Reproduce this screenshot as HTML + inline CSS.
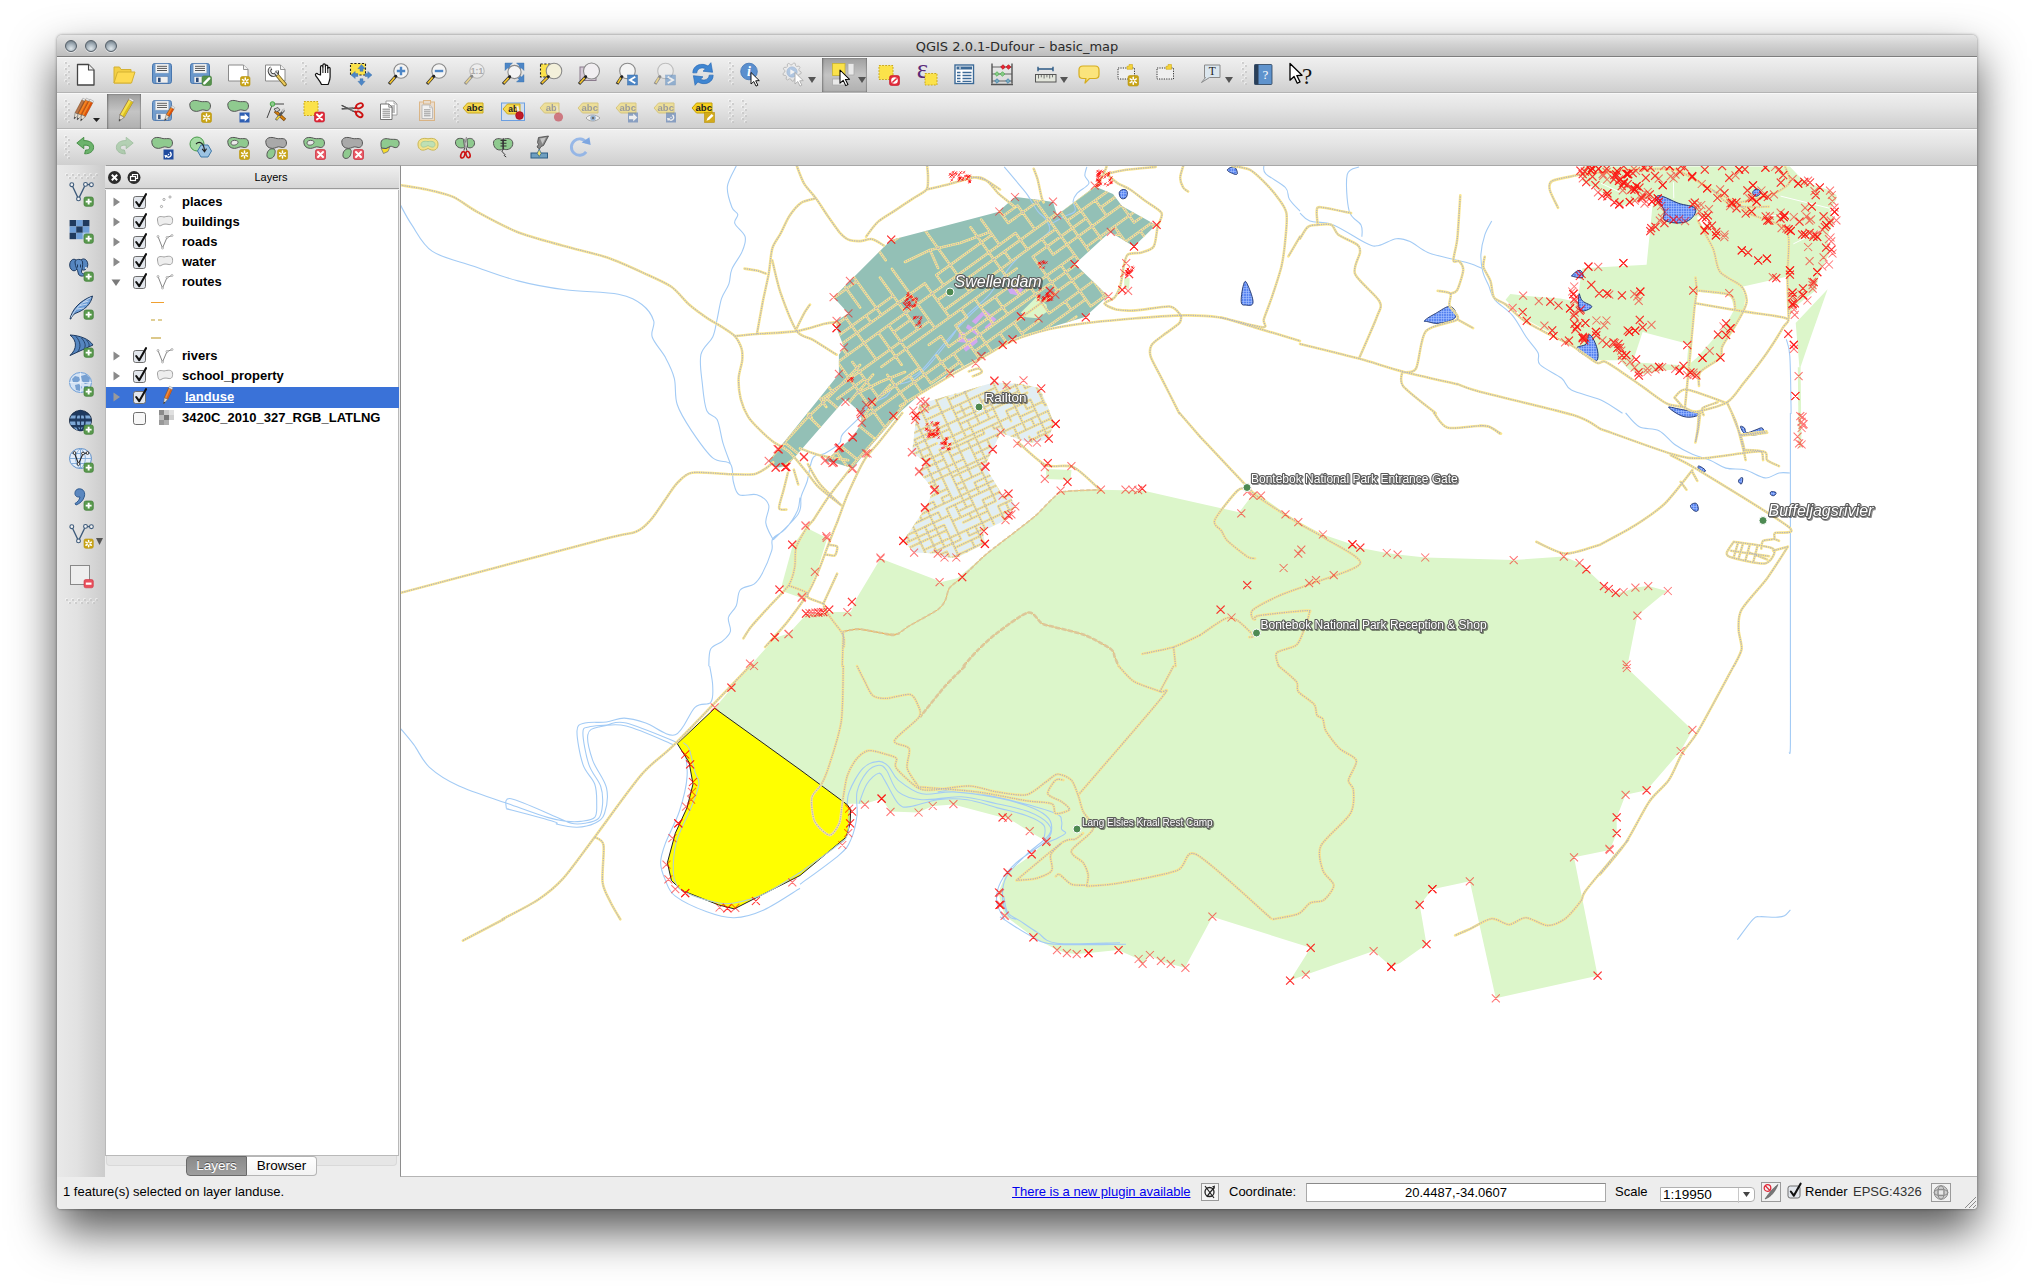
<!DOCTYPE html><html><head><meta charset="utf-8"><title>QGIS 2.0.1-Dufour - basic_map</title><style>
*{box-sizing:border-box;margin:0;padding:0}
html,body{width:2034px;height:1288px;overflow:hidden;background:#fff}
body{font-family:"Liberation Sans",sans-serif;font-size:13px;color:#000;position:relative}
.abs{position:absolute}
#win{position:absolute;left:57px;top:35px;width:1920px;height:1174px;background:#ededed;border-radius:5px 5px 4px 4px;
 box-shadow:0 22px 46px rgba(0,0,0,.67),0 0 3px rgba(0,0,0,.45);}
#title{position:absolute;left:0;top:0;width:1920px;height:22px;border-radius:5px 5px 0 0;
 background:linear-gradient(#e6e6e6,#d2d2d2 45%,#bdbdbd);border-bottom:1px solid #7d7d7d;text-align:center;
 font-family:"DejaVu Sans","Liberation Sans",sans-serif;font-size:13px;line-height:23px;color:#2a2a2a}
.tl{position:absolute;top:5px;width:12px;height:12px;border-radius:50%;
 background:radial-gradient(circle at 50% 75%,#dfe6ea 0,#aab6bf 45%,#7b8892 80%);border:1px solid #555f68;box-shadow:0 1px 0 rgba(255,255,255,.5)}
.tb{position:absolute;left:0;width:1920px;background:linear-gradient(#efefef,#e4e4e4 40%,#cfcfcf);border-top:1px solid #f8f8f8;border-bottom:1px solid #b4b4b4}
.hd{position:absolute;width:6px;height:24px;background-image:radial-gradient(circle at 1.5px 1.5px,#fff 0,#fff 1px,#aaa 1.4px,transparent 1.8px);background-size:3px 6px;}
.hv{position:absolute;width:6px;height:26px}
.ic{position:absolute;width:28px;height:28px;overflow:visible}
.press{position:absolute;background:linear-gradient(#9f9f9f,#c4c4c4 50%,#b0b0b0);box-shadow:inset 1px 0 2px rgba(0,0,0,.35), inset -1px 0 1px rgba(0,0,0,.2)}
#ltb{position:absolute;left:0;top:130px;width:49px;height:1012px;background:linear-gradient(90deg,#e9e9e9,#e2e2e2 40%,#cbcbcb)}
#lay{position:absolute;left:48px;top:131px;width:295px;height:1011px;background:#ededed}
#layh{position:absolute;left:0;top:0;width:294px;height:23px;background:linear-gradient(#efefef,#d6d6d6);border-bottom:1px solid #9a9a9a;text-align:center;line-height:22px;font-size:11px;padding-left:38px}
#tree{position:absolute;left:0;top:24px;width:294px;height:966px;background:#fff;border:1px solid #b9b9b9;border-top:none}
.row{position:absolute;left:0;width:293px;height:20px;font-weight:bold;font-size:13px;line-height:20px;white-space:nowrap}
.row span{position:absolute;left:76px;top:0}
#status{position:absolute;left:0;top:1142px;width:1920px;height:32px;background:#ededed;border-radius:0 0 4px 4px;font-size:13px}
#mapwrap{position:absolute;left:343px;top:130px;width:1577px;height:1012px;background:#fff;border-left:1px solid #8e8e8e;border-top:1px solid #a8a8a8;border-bottom:1px solid #b5b5b5;overflow:hidden}
</style></head><body>
<div id="win">
<div id="title">QGIS 2.0.1-Dufour – basic_map<div class="tl" style="left:8px"></div><div class="tl" style="left:28px"></div><div class="tl" style="left:48px"></div></div>
<div class="tb" style="top:22px;height:36px"></div>
<div class="tb" style="top:58px;height:36px"></div>
<div class="tb" style="top:94px;height:37px;border-bottom:1px solid #9c9c9c"></div>
<svg class="abs" style="left:7px;top:26px" width="7" height="26" viewBox="0 0 7 26"><rect x="0.5" y="0.5" width="2" height="2" fill="#fff"/><rect x="1.3" y="1.3" width="1.3" height="1.3" fill="#9c9c9c"/><rect x="3.5" y="3.5" width="2" height="2" fill="#fff"/><rect x="4.3" y="4.3" width="1.3" height="1.3" fill="#9c9c9c"/><rect x="0.5" y="6.5" width="2" height="2" fill="#fff"/><rect x="1.3" y="7.3" width="1.3" height="1.3" fill="#9c9c9c"/><rect x="3.5" y="9.5" width="2" height="2" fill="#fff"/><rect x="4.3" y="10.3" width="1.3" height="1.3" fill="#9c9c9c"/><rect x="0.5" y="12.5" width="2" height="2" fill="#fff"/><rect x="1.3" y="13.3" width="1.3" height="1.3" fill="#9c9c9c"/><rect x="3.5" y="15.5" width="2" height="2" fill="#fff"/><rect x="4.3" y="16.3" width="1.3" height="1.3" fill="#9c9c9c"/><rect x="0.5" y="18.5" width="2" height="2" fill="#fff"/><rect x="1.3" y="19.3" width="1.3" height="1.3" fill="#9c9c9c"/><rect x="3.5" y="21.5" width="2" height="2" fill="#fff"/><rect x="4.3" y="22.3" width="1.3" height="1.3" fill="#9c9c9c"/></svg>
<svg class="abs" style="left:17px;top:26.7px;overflow:visible" width="24" height="24" viewBox="0 0 24 24"><path d="M3.5,2.5 h11 l5.5,5.5 v15 h-16.5 z" fill="#fff" stroke="#444" stroke-width="1.3" stroke-linejoin="round"/><path d="M14.5,2.5 v5.5 h5.5" fill="#f0f0f0" stroke="#444" stroke-width="1.1" stroke-linejoin="round"/></svg>
<svg class="abs" style="left:54.5px;top:26.7px;overflow:visible" width="24" height="24" viewBox="0 0 24 24"><path d="M2,5 v16 h17 v-13.500 h-10 l-1.500,-2.500 z" fill="#f3cf45" stroke="#d4b132" stroke-width="1"/><path d="M2,21 l3.500,-11 h17.500 l-3.500,11 z" fill="#fdda52" stroke="#d4b132" stroke-width="1" stroke-linejoin="round"/></svg>
<svg class="abs" style="left:92.5px;top:26.7px;overflow:visible" width="24" height="24" viewBox="0 0 24 24"><rect x="2.5" y="1.5" width="19" height="20" rx="2.2" fill="#6b98cb" stroke="#4876ae" stroke-width="1"/><rect x="5.5" y="2" width="13" height="9" fill="#f4f4f4" stroke="#b9c4d2" stroke-width=".5"/><path d="M7,4.3h10M7,6.4h10M7,8.5h10" stroke="#555" stroke-width="1"/><rect x="6" y="14.5" width="12" height="6.5" fill="#efefef" stroke="#5a7fae" stroke-width=".6"/><rect x="8" y="15.7" width="2.6" height="4.3" fill="#2c4a78"/></svg>
<svg class="abs" style="left:130.5px;top:26.7px;overflow:visible" width="24" height="24" viewBox="0 0 24 24"><rect x="2.5" y="1.5" width="19" height="20" rx="2.2" fill="#6b98cb" stroke="#4876ae" stroke-width="1"/><rect x="5.5" y="2" width="13" height="9" fill="#f4f4f4" stroke="#b9c4d2" stroke-width=".5"/><path d="M7,4.3h10M7,6.4h10M7,8.5h10" stroke="#555" stroke-width="1"/><rect x="6" y="14.5" width="12" height="6.5" fill="#efefef" stroke="#5a7fae" stroke-width=".6"/><rect x="8" y="15.7" width="2.6" height="4.3" fill="#2c4a78"/><rect x="14" y="14" width="9.5" height="9.5" rx="1.8" fill="#56924c" stroke="#3f7d36" stroke-width=".6"/><path d="M16.3,21.3 L21.2,16.4" stroke="#fff" stroke-width="2.4" stroke-linecap="round"/></svg>
<svg class="abs" style="left:168.5px;top:26.7px;overflow:visible" width="24" height="24" viewBox="0 0 24 24"><path d="M2.5,3 h15 l4.5,4.500 v11.500 h-19.500 z" fill="#fff" stroke="#8a8a8a" stroke-width="1"/><path d="M17.500,3 v4.500 h4.500" fill="#f2f2f2" stroke="#8a8a8a" stroke-width=".9"/><rect x="14.5" y="14.5" width="9.5" height="9.5" rx="1.8" fill="#c8a416" stroke="#b8940c" stroke-width=".6"/><g stroke="#fff" stroke-width="1.5" stroke-linecap="round"><line x1="19.25" y1="16.02" x2="19.25" y2="22.48"/><line x1="22.05" y1="17.64" x2="16.45" y2="20.86"/><line x1="22.05" y1="20.87" x2="16.45" y2="17.63"/></g><circle cx="19.25" cy="19.25" r="1.1" fill="#c8a416"/></svg>
<svg class="abs" style="left:206px;top:26.7px;overflow:visible" width="24" height="24" viewBox="0 0 24 24"><path d="M2.5,3 h15 l4.5,4.500 v11.500 h-19.500 z" fill="#fff" stroke="#8a8a8a" stroke-width="1"/><path d="M17.500,3 v4.500 h4.500" fill="#f2f2f2" stroke="#8a8a8a" stroke-width=".9"/><path d="M13.500,12.500 L22,22.500" stroke="#6a5a1a" stroke-width="3.600" stroke-linecap="round"/><path d="M13.800,12.800 L21.800,22.200" stroke="#ecca5c" stroke-width="2.100" stroke-linecap="round"/><path d="M8.300,5.800 A3.900,3.900 0 1 0 14.300,8.600" fill="none" stroke="#333" stroke-width="3.400"/><path d="M8.300,5.800 A3.900,3.900 0 1 0 14.300,8.600" fill="none" stroke="#e4e4e4" stroke-width="1.700"/><path d="M12.500,10.800 l1.800,2.200" stroke="#333" stroke-width="3.400"/><path d="M12.300,10.500 l2,2.500" stroke="#e4e4e4" stroke-width="1.700"/></svg>
<svg class="abs" style="left:244px;top:26px" width="7" height="26" viewBox="0 0 7 26"><rect x="0.5" y="0.5" width="2" height="2" fill="#fff"/><rect x="1.3" y="1.3" width="1.3" height="1.3" fill="#9c9c9c"/><rect x="3.5" y="3.5" width="2" height="2" fill="#fff"/><rect x="4.3" y="4.3" width="1.3" height="1.3" fill="#9c9c9c"/><rect x="0.5" y="6.5" width="2" height="2" fill="#fff"/><rect x="1.3" y="7.3" width="1.3" height="1.3" fill="#9c9c9c"/><rect x="3.5" y="9.5" width="2" height="2" fill="#fff"/><rect x="4.3" y="10.3" width="1.3" height="1.3" fill="#9c9c9c"/><rect x="0.5" y="12.5" width="2" height="2" fill="#fff"/><rect x="1.3" y="13.3" width="1.3" height="1.3" fill="#9c9c9c"/><rect x="3.5" y="15.5" width="2" height="2" fill="#fff"/><rect x="4.3" y="16.3" width="1.3" height="1.3" fill="#9c9c9c"/><rect x="0.5" y="18.5" width="2" height="2" fill="#fff"/><rect x="1.3" y="19.3" width="1.3" height="1.3" fill="#9c9c9c"/><rect x="3.5" y="21.5" width="2" height="2" fill="#fff"/><rect x="4.3" y="22.3" width="1.3" height="1.3" fill="#9c9c9c"/></svg>
<svg class="abs" style="left:254.5px;top:26.7px;overflow:visible" width="24" height="24" viewBox="0 0 24 24"><path d="M8.500,13 V5 c0,-1.800 2.400,-1.800 2.400,0 V3.300 c0,-1.800 2.500,-1.800 2.500,0 V4.300 c0,-1.700 2.400,-1.700 2.400,0 V6.500 c0,-1.600 2.300,-1.600 2.300,0 V15 c0,3 -1,4.500 -2,7.500 H9.500 C8.500,20 6,17 3.800,13.800 C2.600,12 4.600,10.600 6,12.200 Z" fill="#fff" stroke="#111" stroke-width="1.200" stroke-linejoin="round"/><path d="M10.900,5 V11 M13.400,4 V11 M15.800,5 V11" stroke="#111" stroke-width="1"/></svg>
<svg class="abs" style="left:292px;top:26.7px;overflow:visible" width="24" height="24" viewBox="0 0 24 24"><rect x="1.5" y="1.5" width="15" height="11.500" fill="#fbe24a" stroke="#222" stroke-width="1.1" stroke-dasharray="2.2 1.600"/><path transform="rotate(0 12.5 13)" d="M12.5,2.5 l3.6,4.2 h-2.1 v2.600 h-3 v-2.600 h-2.100 z" fill="#4d86c6" stroke="#3a6ea8" stroke-width=".4"/><path transform="rotate(90 12.5 13)" d="M12.5,2.5 l3.6,4.2 h-2.1 v2.600 h-3 v-2.600 h-2.100 z" fill="#4d86c6" stroke="#3a6ea8" stroke-width=".4"/><path transform="rotate(180 12.5 13)" d="M12.5,2.5 l3.6,4.2 h-2.1 v2.600 h-3 v-2.600 h-2.100 z" fill="#4d86c6" stroke="#3a6ea8" stroke-width=".4"/><path transform="rotate(270 12.5 13)" d="M12.5,2.5 l3.6,4.2 h-2.1 v2.600 h-3 v-2.600 h-2.100 z" fill="#4d86c6" stroke="#3a6ea8" stroke-width=".4"/></svg>
<svg class="abs" style="left:330px;top:26.7px;overflow:visible" width="24" height="24" viewBox="0 0 24 24"><g opacity="1"><path d="M8.96,14.04 L2,22" stroke="#333" stroke-width="3.1" stroke-linecap="butt"/><path d="M7.76,15.24 L2.8,21.2" stroke="#f5c52c" stroke-width="1.7"/><circle cx="14" cy="9" r="7.2" fill="#f4f4f4" stroke="#8a8a8a" stroke-width="1.1"/><circle cx="8.816" cy="14.184" r="1.4" fill="#222"/></g><path d="M9.800,9 h8.400 M14,4.800 v8.400" stroke="#4d86c6" stroke-width="2.400"/></svg>
<svg class="abs" style="left:368px;top:26.7px;overflow:visible" width="24" height="24" viewBox="0 0 24 24"><g opacity="1"><path d="M8.96,14.04 L2,22" stroke="#333" stroke-width="3.1" stroke-linecap="butt"/><path d="M7.76,15.24 L2.8,21.2" stroke="#f5c52c" stroke-width="1.7"/><circle cx="14" cy="9" r="7.2" fill="#f4f4f4" stroke="#8a8a8a" stroke-width="1.1"/><circle cx="8.816" cy="14.184" r="1.4" fill="#222"/></g><path d="M9.800,9 h8.400" stroke="#4d86c6" stroke-width="2.400"/></svg>
<svg class="abs" style="left:406px;top:26.7px;overflow:visible" width="24" height="24" viewBox="0 0 24 24"><g opacity="0.45"><path d="M8.96,14.04 L2,22" stroke="#333" stroke-width="3.1" stroke-linecap="butt"/><path d="M7.76,15.24 L2.8,21.2" stroke="#f5c52c" stroke-width="1.7"/><circle cx="14" cy="9" r="7.2" fill="#f4f4f4" stroke="#8a8a8a" stroke-width="1.1"/><circle cx="8.816" cy="14.184" r="1.4" fill="#222"/></g><text x="14" y="12.300" font-family="Liberation Sans, sans-serif" font-size="8.500" font-weight="bold" fill="#aaa" text-anchor="middle">1:1</text></svg>
<svg class="abs" style="left:444px;top:26.7px;overflow:visible" width="24" height="24" viewBox="0 0 24 24"><path transform="translate(4,1) rotate(0)" d="M0,0 h7.500 l-2.600,2.600 l3,3 l-2.300,2.300 l-3,-3 l-2.600,2.600 z" fill="#4d86c6" stroke="#3a6ea8" stroke-width=".4"/><path transform="translate(23,1) rotate(90)" d="M0,0 h7.500 l-2.600,2.600 l3,3 l-2.300,2.300 l-3,-3 l-2.600,2.600 z" fill="#4d86c6" stroke="#3a6ea8" stroke-width=".4"/><path transform="translate(23,20) rotate(180)" d="M0,0 h7.500 l-2.600,2.600 l3,3 l-2.300,2.300 l-3,-3 l-2.600,2.600 z" fill="#4d86c6" stroke="#3a6ea8" stroke-width=".4"/><g opacity="1"><path d="M8.88,14.62 L2,22" stroke="#333" stroke-width="3.1" stroke-linecap="butt"/><path d="M7.68,15.82 L2.8,21.2" stroke="#f5c52c" stroke-width="1.7"/><circle cx="13.5" cy="10" r="6.6" fill="#f4f4f4" stroke="#8a8a8a" stroke-width="1.1"/><circle cx="8.748" cy="14.752" r="1.4" fill="#222"/></g></svg>
<svg class="abs" style="left:481.5px;top:26.7px;overflow:visible" width="24" height="24" viewBox="0 0 24 24"><rect x="1.5" y="2" width="15" height="13" fill="#fbe24a" stroke="#222" stroke-width="1.100" stroke-dasharray="2.200 1.600"/><g opacity="1"><path d="M9.54,14.46 L2,22" stroke="#333" stroke-width="3.1" stroke-linecap="butt"/><path d="M8.34,15.66 L2.8,21.2" stroke="#f5c52c" stroke-width="1.7"/><circle cx="15" cy="9" r="7.8" fill="#f3f0da" stroke="#8a8a8a" stroke-width="1.1"/><circle cx="9.384" cy="14.616" r="1.4" fill="#222"/></g></svg>
<svg class="abs" style="left:519.5px;top:26.7px;overflow:visible" width="24" height="24" viewBox="0 0 24 24"><rect x="3" y="5" width="16" height="13.500" fill="#d5c9d6" stroke="#8a7a8c" stroke-width="1"/><g opacity="1"><path d="M8.9,14.6 L2,22" stroke="#333" stroke-width="3.1" stroke-linecap="butt"/><path d="M7.7,15.8 L2.8,21.2" stroke="#f5c52c" stroke-width="1.7"/><circle cx="14.5" cy="9" r="8" fill="#f1eef1" stroke="#8a8a8a" stroke-width="1.1"/><circle cx="8.74" cy="14.76" r="1.4" fill="#222"/></g></svg>
<svg class="abs" style="left:557.5px;top:26.7px;overflow:visible" width="24" height="24" viewBox="0 0 24 24"><g opacity="1"><path d="M7.04,14.46 L2,22" stroke="#333" stroke-width="3.1" stroke-linecap="butt"/><path d="M5.84,15.66 L2.8,21.2" stroke="#f5c52c" stroke-width="1.7"/><circle cx="12.5" cy="9" r="7.8" fill="#f4f4f4" stroke="#8a8a8a" stroke-width="1.1"/><circle cx="6.884" cy="14.616" r="1.4" fill="#222"/></g><rect x="12.500" y="13" width="10" height="10" fill="#4d86c6" stroke="#3a6ea8" stroke-width=".5"/><path d="M20.300,14.800 l-5.300,3.200 l5.300,3.200" fill="none" stroke="#fff" stroke-width="1.900"/></svg>
<svg class="abs" style="left:595.5px;top:26.7px;overflow:visible" width="24" height="24" viewBox="0 0 24 24"><g opacity="0.45"><path d="M7.04,14.46 L2,22" stroke="#333" stroke-width="3.1" stroke-linecap="butt"/><path d="M5.84,15.66 L2.8,21.2" stroke="#f5c52c" stroke-width="1.7"/><circle cx="12.5" cy="9" r="7.8" fill="#f4f4f4" stroke="#8a8a8a" stroke-width="1.1"/><circle cx="6.884" cy="14.616" r="1.4" fill="#222"/></g><g opacity=".5"><rect x="12.500" y="13" width="10" height="10" fill="#4d86c6" stroke="#3a6ea8" stroke-width=".5"/><path d="M14.700,14.800 l5.300,3.200 l-5.300,3.200" fill="none" stroke="#fff" stroke-width="1.900"/></g></svg>
<svg class="abs" style="left:633.5px;top:26.7px;overflow:visible" width="24" height="24" viewBox="0 0 24 24"><g transform="translate(12 12) scale(1.13) translate(-12 -12)"><path d="M3,11 C3,4 11,1.500 16.500,5 L19,2 L20.500,10.500 L12,9.500 L14.300,7.300 C10.500,5.500 6.800,7.500 6.500,11 Z" fill="#3f86d2" stroke="#2a6ab5" stroke-width=".6"/><path d="M21,13 C21,20 13,22.500 7.500,19 L5,22 L3.500,13.500 L12,14.500 L9.700,16.700 C13.500,18.500 17.200,16.500 17.500,13 Z" fill="#3f86d2" stroke="#2a6ab5" stroke-width=".6"/></g></svg>
<svg class="abs" style="left:671px;top:26px" width="7" height="26" viewBox="0 0 7 26"><rect x="0.5" y="0.5" width="2" height="2" fill="#fff"/><rect x="1.3" y="1.3" width="1.3" height="1.3" fill="#9c9c9c"/><rect x="3.5" y="3.5" width="2" height="2" fill="#fff"/><rect x="4.3" y="4.3" width="1.3" height="1.3" fill="#9c9c9c"/><rect x="0.5" y="6.5" width="2" height="2" fill="#fff"/><rect x="1.3" y="7.3" width="1.3" height="1.3" fill="#9c9c9c"/><rect x="3.5" y="9.5" width="2" height="2" fill="#fff"/><rect x="4.3" y="10.3" width="1.3" height="1.3" fill="#9c9c9c"/><rect x="0.5" y="12.5" width="2" height="2" fill="#fff"/><rect x="1.3" y="13.3" width="1.3" height="1.3" fill="#9c9c9c"/><rect x="3.5" y="15.5" width="2" height="2" fill="#fff"/><rect x="4.3" y="16.3" width="1.3" height="1.3" fill="#9c9c9c"/><rect x="0.5" y="18.5" width="2" height="2" fill="#fff"/><rect x="1.3" y="19.3" width="1.3" height="1.3" fill="#9c9c9c"/><rect x="3.5" y="21.5" width="2" height="2" fill="#fff"/><rect x="4.3" y="22.3" width="1.3" height="1.3" fill="#9c9c9c"/></svg>
<svg class="abs" style="left:682px;top:26.7px;overflow:visible" width="24" height="24" viewBox="0 0 24 24"><circle cx="10" cy="9.500" r="8.300" fill="#5b8fce" stroke="#3f73b5" stroke-width=".8"/><text x="10" y="14.300" font-family="Liberation Serif, serif" font-size="14" font-style="italic" font-weight="bold" fill="#fff" text-anchor="middle">i</text><path transform="translate(12,10.5) scale(1)" d="M0,0 L0,11.5 L2.8,9 L5,13.6 L6.9,12.7 L4.7,8.3 L8.3,8.1 Z" fill="#fff" stroke="#000" stroke-width=".9" stroke-linejoin="round"/></svg>
<svg class="abs" style="left:725px;top:26.7px;overflow:visible" width="24" height="24" viewBox="0 0 24 24"><g opacity=".6"><path d="M19.20,10.00 L19.06,11.60 L16.77,12.46 L16.24,13.60 L17.05,15.91 L15.91,17.05 L13.60,16.24 L12.46,16.77 L11.60,19.06 L10.00,19.20 L8.75,17.09 L7.54,16.77 L5.40,17.97 L4.09,17.05 L4.48,14.63 L3.76,13.60 L1.35,13.15 L0.94,11.60 L2.80,10.00 L2.91,8.75 L1.35,6.85 L2.03,5.40 L4.48,5.37 L5.37,4.48 L5.40,2.03 L6.85,1.35 L8.75,2.91 L10.00,2.80 L11.60,0.94 L13.15,1.35 L13.60,3.76 L14.63,4.48 L17.05,4.09 L17.97,5.40 L16.77,7.54 L17.09,8.75 Z" fill="#eee" stroke="#999" stroke-width=".9" stroke-linejoin="round"/><circle cx="10" cy="10" r="5.200" fill="#8fb4e0" stroke="#7a9cc8" stroke-width=".6"/><path d="M8.300,7.300 v5.400 l4.600,-2.700 z" fill="#fff"/></g><path transform="translate(13,10.5) scale(1)" d="M0,0 L0,11.5 L2.8,9 L5,13.6 L6.9,12.7 L4.7,8.3 L8.3,8.1 Z" fill="#fff" stroke="#aaa" stroke-width=".9" stroke-linejoin="round"/></svg>
<svg class="abs" style="left:751px;top:42px" width="8" height="6" viewBox="0 0 8 6"><path d="M0,0 h8 l-4,6 z" fill="#555"/></svg>
<div class="press" style="left:765px;top:23px;width:45px;height:34px"></div>
<svg class="abs" style="left:774px;top:26.7px;overflow:visible" width="24" height="24" viewBox="0 0 24 24"><rect x="1.500" y="1.500" width="12.500" height="12" fill="#fbe24a" stroke="#c9b52f" stroke-width=".8"/><rect x="17" y="1.500" width="6" height="11.500" fill="#e9e9e9" stroke="#aaa" stroke-width=".8"/><rect x="1.500" y="17" width="12.500" height="6" fill="#e9e9e9" stroke="#aaa" stroke-width=".8"/><path transform="translate(9,8) scale(1.15)" d="M0,0 L0,11.5 L2.8,9 L5,13.6 L6.9,12.7 L4.7,8.3 L8.3,8.1 Z" fill="#fff" stroke="#000" stroke-width=".9" stroke-linejoin="round"/></svg>
<svg class="abs" style="left:801px;top:42px" width="8" height="6" viewBox="0 0 8 6"><path d="M0,0 h8 l-4,6 z" fill="#555"/></svg>
<svg class="abs" style="left:820px;top:26.7px;overflow:visible" width="24" height="24" viewBox="0 0 24 24"><rect x="2" y="3.500" width="14" height="14" fill="#fbe24a" stroke="#c9a81f" stroke-width="1" stroke-dasharray="1.800 1.300"/><rect x="12.500" y="13.500" width="10" height="10" rx="2" fill="#e02a3a" stroke="#c41425" stroke-width=".6"/><circle cx="17.500" cy="18.500" r="3.300" fill="#fff"/><path d="M15.300,20.500 l4.400,-4" stroke="#e02a3a" stroke-width="1.600"/></svg>
<svg class="abs" style="left:858px;top:26.7px;overflow:visible" width="24" height="24" viewBox="0 0 24 24"><text x="7.5" y="15.5" font-family="Liberation Serif, serif" font-size="27" fill="#5a2a78" text-anchor="middle">ε</text><rect x="10" y="11.500" width="12" height="11.500" fill="#fbe24a" stroke="#c9a81f" stroke-width="1" stroke-dasharray="1.800 1.300"/></svg>
<svg class="abs" style="left:895px;top:26.7px;overflow:visible" width="24" height="24" viewBox="0 0 24 24"><rect x="3" y="3" width="18.500" height="18.500" fill="#fff" stroke="#3c6a97" stroke-width="1.400"/><rect x="4.500" y="4.500" width="15.500" height="3" fill="#3c6a97"/><path d="M7.500,6 v0" stroke="#fff"/><path d="M5,10.500 h3.500 M10.500,10.500 h9 M5,13.500 h3.500 M10.500,13.500 h9 M5,16.500 h3.500 M10.500,16.500 h9 M5,19.300 h3.500 M10.500,19.300 h9" stroke="#3c6a97" stroke-width="1.300"/><path d="M8,4.800 v2.400" stroke="#fff" stroke-width="1"/></svg>
<svg class="abs" style="left:933px;top:26.7px;overflow:visible" width="24" height="24" viewBox="0 0 24 24"><path d="M2,1.500 v20 M22,1.500 v20 M1,22.500 h22" stroke="#555" stroke-width="1.400" fill="none"/><path d="M2,5 h20 M2,12 h20 M2,19 h20" stroke="#555" stroke-width=".9"/><path d="M10.7,5 l2.300,-2.300 l2.300,2.300 l-2.300,2.300 z" fill="#e23" stroke="#a11" stroke-width=".7"/><path d="M16.2,5 l2.300,-2.300 l2.300,2.300 l-2.300,2.300 z" fill="#e23" stroke="#a11" stroke-width=".7"/><path d="M4.7,12 l2.300,-2.300 l2.300,2.300 l-2.300,2.300 z" fill="#8c8" stroke="#4a4" stroke-width=".7"/><path d="M10.2,12 l2.300,-2.300 l2.300,2.300 l-2.300,2.300 z" fill="#8c8" stroke="#4a4" stroke-width=".7"/><path d="M4.7,19 l2.300,-2.300 l2.300,2.300 l-2.300,2.300 z" fill="#7ab" stroke="#37a" stroke-width=".7"/><path d="M15.7,19 l2.300,-2.300 l2.300,2.300 l-2.300,2.300 z" fill="#7ab" stroke="#37a" stroke-width=".7"/></svg>
<svg class="abs" style="left:977px;top:26.7px;overflow:visible" width="24" height="24" viewBox="0 0 24 24"><path d="M4,7 h15 M4,4.800 v4.400 M19,4.800 v4.400" stroke="#2c5a85" stroke-width="1.400" fill="none"/><rect x="1.500" y="12.500" width="20.500" height="7.500" fill="#e3e6dc" stroke="#555" stroke-width="1"/><path d="M4.500,12.500 v4 M7.300,12.500 v2.800 M10.100,12.500 v4 M12.900,12.500 v2.800 M15.700,12.500 v4 M18.500,12.500 v2.800" stroke="#555" stroke-width=".8"/></svg>
<svg class="abs" style="left:1003px;top:42px" width="8" height="6" viewBox="0 0 8 6"><path d="M0,0 h8 l-4,6 z" fill="#555"/></svg>
<svg class="abs" style="left:1021px;top:26.7px;overflow:visible" width="24" height="24" viewBox="0 0 24 24"><path d="M5,4 h12 c3,0 4,1.500 4,4 v4.500 c0,2.500 -1,4 -4,4 h-5.500 l-4.500,4.500 l1,-4.500 h-3 c-3,0 -4,-1.500 -4,-4 v-4.500 c0,-2.500 1,-4 4,-4 z" fill="#fbe47c" stroke="#d6ad1e" stroke-width="1.200" stroke-linejoin="round"/></svg>
<svg class="abs" style="left:1059px;top:26.7px;overflow:visible" width="24" height="24" viewBox="0 0 24 24"><rect x="2" y="6" width="16.500" height="11" fill="#efefef" stroke="#333" stroke-width="1" stroke-dasharray="1.200 1.200"/><path d="M11,4.300 h2 v-1.800 h3.500 v4.800 h-5.500 z" fill="#f5d33a" stroke="#c9a81f" stroke-width=".6"/><rect x="12" y="13.5" width="10.5" height="10.5" rx="1.8" fill="#c8a416" stroke="#b8940c" stroke-width=".6"/><g stroke="#fff" stroke-width="1.5" stroke-linecap="round"><line x1="17.25" y1="15.18" x2="17.25" y2="22.32"/><line x1="20.34" y1="16.96" x2="14.16" y2="20.54"/><line x1="20.34" y1="20.54" x2="14.16" y2="16.96"/></g><circle cx="17.25" cy="18.75" r="1.1" fill="#c8a416"/></svg>
<svg class="abs" style="left:1097.5px;top:26.7px;overflow:visible" width="24" height="24" viewBox="0 0 24 24"><rect x="2" y="6" width="16.500" height="11" fill="#efefef" stroke="#333" stroke-width="1" stroke-dasharray="1.200 1.200"/><path d="M11,4.300 h2 v-1.800 h3.500 v4.800 h-5.500 z" fill="#f5d33a" stroke="#c9a81f" stroke-width=".6"/></svg>
<svg class="abs" style="left:1142px;top:26.7px;overflow:visible" width="24" height="24" viewBox="0 0 24 24"><path d="M5.500,3 h15.500 v12.500 h-10.500 l-8,5 l4,-5 h-1 z" fill="#dbe6ee" stroke="#8a8a8a" stroke-width="1"/><text x="13.300" y="13" font-family="Liberation Serif, serif" font-size="11.500" fill="#222" text-anchor="middle">T</text></svg>
<svg class="abs" style="left:1168px;top:42px" width="8" height="6" viewBox="0 0 8 6"><path d="M0,0 h8 l-4,6 z" fill="#555"/></svg>
<svg class="abs" style="left:1184px;top:26px" width="7" height="26" viewBox="0 0 7 26"><rect x="0.5" y="0.5" width="2" height="2" fill="#fff"/><rect x="1.3" y="1.3" width="1.3" height="1.3" fill="#9c9c9c"/><rect x="3.5" y="3.5" width="2" height="2" fill="#fff"/><rect x="4.3" y="4.3" width="1.3" height="1.3" fill="#9c9c9c"/><rect x="0.5" y="6.5" width="2" height="2" fill="#fff"/><rect x="1.3" y="7.3" width="1.3" height="1.3" fill="#9c9c9c"/><rect x="3.5" y="9.5" width="2" height="2" fill="#fff"/><rect x="4.3" y="10.3" width="1.3" height="1.3" fill="#9c9c9c"/><rect x="0.5" y="12.5" width="2" height="2" fill="#fff"/><rect x="1.3" y="13.3" width="1.3" height="1.3" fill="#9c9c9c"/><rect x="3.5" y="15.5" width="2" height="2" fill="#fff"/><rect x="4.3" y="16.3" width="1.3" height="1.3" fill="#9c9c9c"/><rect x="0.5" y="18.5" width="2" height="2" fill="#fff"/><rect x="1.3" y="19.3" width="1.3" height="1.3" fill="#9c9c9c"/><rect x="3.5" y="21.5" width="2" height="2" fill="#fff"/><rect x="4.3" y="22.3" width="1.3" height="1.3" fill="#9c9c9c"/></svg>
<svg class="abs" style="left:1194px;top:27.7px;overflow:visible" width="24" height="24" viewBox="0 0 24 24"><rect x="3.500" y="1.500" width="17.500" height="20" rx="1" fill="#5f93cd" stroke="#2a3f58" stroke-width=".8"/><rect x="3.500" y="1.500" width="4" height="20" fill="#2a3f58"/><text x="14.300" y="16" font-family="Liberation Serif, serif" font-size="13" fill="#fff" text-anchor="middle">?</text></svg>
<svg class="abs" style="left:1232px;top:26.7px;overflow:visible" width="24" height="24" viewBox="0 0 24 24"><path transform="translate(1,1.5) scale(1.45)" d="M0,0 L0,11.5 L2.8,9 L5,13.6 L6.9,12.7 L4.7,8.3 L8.3,8.1 Z" fill="#fff" stroke="#000" stroke-width=".9" stroke-linejoin="round"/><text x="18" y="21.500" font-family="Liberation Serif, serif" font-size="23" fill="#111" text-anchor="middle">?</text></svg>
<svg class="abs" style="left:7px;top:64px" width="7" height="26" viewBox="0 0 7 26"><rect x="0.5" y="0.5" width="2" height="2" fill="#fff"/><rect x="1.3" y="1.3" width="1.3" height="1.3" fill="#9c9c9c"/><rect x="3.5" y="3.5" width="2" height="2" fill="#fff"/><rect x="4.3" y="4.3" width="1.3" height="1.3" fill="#9c9c9c"/><rect x="0.5" y="6.5" width="2" height="2" fill="#fff"/><rect x="1.3" y="7.3" width="1.3" height="1.3" fill="#9c9c9c"/><rect x="3.5" y="9.5" width="2" height="2" fill="#fff"/><rect x="4.3" y="10.3" width="1.3" height="1.3" fill="#9c9c9c"/><rect x="0.5" y="12.5" width="2" height="2" fill="#fff"/><rect x="1.3" y="13.3" width="1.3" height="1.3" fill="#9c9c9c"/><rect x="3.5" y="15.5" width="2" height="2" fill="#fff"/><rect x="4.3" y="16.3" width="1.3" height="1.3" fill="#9c9c9c"/><rect x="0.5" y="18.5" width="2" height="2" fill="#fff"/><rect x="1.3" y="19.3" width="1.3" height="1.3" fill="#9c9c9c"/><rect x="3.5" y="21.5" width="2" height="2" fill="#fff"/><rect x="4.3" y="22.3" width="1.3" height="1.3" fill="#9c9c9c"/></svg>
<svg class="abs" style="left:15px;top:64px;overflow:visible" width="24" height="24" viewBox="0 0 24 24"><g transform="translate(12,1.5) rotate(28)"><rect x="-2.1" y="0" width="4.2" height="15" fill="#b9764a" stroke="#7a4a20" stroke-width=".5"/><rect x="0.21" y="0" width="1.89" height="15" fill="#9a5a36"/><rect x="-2.1" y="-1.6" width="4.2" height="1.8" fill="#eee" stroke="#888" stroke-width=".4"/><path d="M-2.1,15 L0,21 L2.1,15 z" fill="#e8e0d0" stroke="#666" stroke-width=".5"/><path d="M-.9,18.8 L0,21 L.9,18.8 z" fill="#333"/></g><g transform="translate(15.5,1.5) rotate(28)"><rect x="-2.1" y="0" width="4.2" height="16" fill="#f58220" stroke="#7a4a20" stroke-width=".5"/><rect x="0.21" y="0" width="1.89" height="16" fill="#e05c10"/><rect x="-2.1" y="-1.6" width="4.2" height="1.8" fill="#eee" stroke="#888" stroke-width=".4"/><path d="M-2.1,16 L0,22 L2.1,16 z" fill="#e8e0d0" stroke="#666" stroke-width=".5"/><path d="M-.9,19.8 L0,22 L.9,19.8 z" fill="#333"/></g><g transform="translate(19,2.5) rotate(28)"><rect x="-2.1" y="0" width="4.2" height="16" fill="#f58220" stroke="#7a4a20" stroke-width=".5"/><rect x="0.21" y="0" width="1.89" height="16" fill="#d9500c"/><rect x="-2.1" y="-1.6" width="4.2" height="1.8" fill="#eee" stroke="#888" stroke-width=".4"/><path d="M-2.1,16 L0,22 L2.1,16 z" fill="#e8e0d0" stroke="#666" stroke-width=".5"/><path d="M-.9,19.8 L0,22 L.9,19.8 z" fill="#333"/></g></svg>
<svg class="abs" style="left:36px;top:83px" width="7" height="4" viewBox="0 0 7 4"><path d="M0,0 h7 l-3.5,4 z" fill="#222"/></svg>
<div class="press" style="left:50px;top:59px;width:34px;height:35px"></div>
<svg class="abs" style="left:54.5px;top:64px;overflow:visible" width="24" height="24" viewBox="0 0 24 24"><g transform="translate(19,1.5) rotate(30)"><rect x="-2.5" y="0" width="5" height="18" fill="#f5e04a" stroke="#7a4a20" stroke-width=".5"/><rect x="0.25" y="0" width="2.25" height="18" fill="#d9bf20"/><rect x="-2.5" y="-1.6" width="5" height="1.8" fill="#eee" stroke="#888" stroke-width=".4"/><path d="M-2.5,18 L0,24 L2.5,18 z" fill="#e8e0d0" stroke="#666" stroke-width=".5"/><path d="M-.9,21.8 L0,24 L.9,21.8 z" fill="#333"/></g></svg>
<svg class="abs" style="left:92.5px;top:64px;overflow:visible" width="24" height="24" viewBox="0 0 24 24"><g opacity=".92"><rect x="2.5" y="1.5" width="19" height="20" rx="2.2" fill="#6b98cb" stroke="#4876ae" stroke-width="1"/><rect x="5.5" y="2" width="13" height="9" fill="#f4f4f4" stroke="#b9c4d2" stroke-width=".5"/><path d="M7,4.3h10M7,6.4h10M7,8.5h10" stroke="#555" stroke-width="1"/><rect x="6" y="14.5" width="12" height="6.5" fill="#efefef" stroke="#5a7fae" stroke-width=".6"/><rect x="8" y="15.7" width="2.6" height="4.3" fill="#2c4a78"/></g><g transform="translate(22.5,9) rotate(32)"><rect x="-1.8" y="0" width="3.6" height="9" fill="#f58220" stroke="#7a4a20" stroke-width=".5"/><rect x="0.18" y="0" width="1.62" height="9" fill="#d9500c"/><rect x="-1.8" y="-1.6" width="3.6" height="1.8" fill="#eee" stroke="#888" stroke-width=".4"/><path d="M-1.8,9 L0,15 L1.8,9 z" fill="#e8e0d0" stroke="#666" stroke-width=".5"/><path d="M-.9,12.8 L0,15 L.9,12.8 z" fill="#333"/></g></svg>
<svg class="abs" style="left:130.5px;top:64px;overflow:visible" width="24" height="24" viewBox="0 0 24 24"><path d="M1.8,6.5 C1.3,1.5 7,0.5 11.5,2.2 C15.5,3.7 21.2,0.7 22.3,5.5 C23.2,9.8 20.2,12.5 17,11.2 C13.8,9.8 11.8,12.4 8.5,12.4 C4.600,12.4 2.1,10.2 1.8,6.5 Z" fill="#8fca8f" stroke="#555" stroke-width="1" /><rect x="13.5" y="13.5" width="10" height="10" rx="1.8" fill="#c8a416" stroke="#b8940c" stroke-width=".6"/><g stroke="#fff" stroke-width="1.5" stroke-linecap="round"><line x1="18.50" y1="15.10" x2="18.50" y2="21.90"/><line x1="21.44" y1="16.80" x2="15.56" y2="20.20"/><line x1="21.44" y1="20.20" x2="15.56" y2="16.80"/></g><circle cx="18.5" cy="18.5" r="1.1" fill="#c8a416"/></svg>
<svg class="abs" style="left:168.5px;top:64px;overflow:visible" width="24" height="24" viewBox="0 0 24 24"><path d="M1.8,6.5 C1.3,1.5 7,0.5 11.5,2.2 C15.5,3.7 21.2,0.7 22.3,5.5 C23.2,9.8 20.2,12.5 17,11.2 C13.8,9.8 11.8,12.4 8.5,12.4 C4.600,12.4 2.1,10.2 1.8,6.5 Z" fill="#8fca8f" stroke="#555" stroke-width="1" /><g opacity="1"><rect x="13.5" y="13.5" width="10" height="10" fill="#2f5fb3"/><path d="M14.5,16.7 h4.2 v-2.2 l4.2,4 l-4.2,4 v-2.2 h-4.2 z" fill="#fff"/></g></svg>
<svg class="abs" style="left:207px;top:64px;overflow:visible" width="24" height="24" viewBox="0 0 24 24"><path d="M3,19 L8.500,5 H20" fill="none" stroke="#444" stroke-width="1"/><circle cx="8.500" cy="5" r="2.300" fill="#8fca8f" stroke="#4a4"/><path d="M11,12 L21,21" stroke="#7a4a10" stroke-width="3.400"/><path d="M11.500,12.500 L20.500,20.500" stroke="#d9820c" stroke-width="1.800"/><path d="M10,10 l4,-1.500 l2,2.500 l-3.500,2 z" fill="#ccc" stroke="#444" stroke-width=".8"/><path d="M12,21 L20,11" stroke="#555" stroke-width="2.600"/><path d="M12.500,20.500 L15.500,17" stroke="#ecd23a" stroke-width="1.800"/><path d="M18,13 l2.500,-3.500" stroke="#ccc" stroke-width="1.500"/></svg>
<svg class="abs" style="left:244.5px;top:64px;overflow:visible" width="24" height="24" viewBox="0 0 24 24"><rect x="2" y="2.500" width="14" height="14" fill="#fbe24a" stroke="#c9a81f" stroke-width="1" stroke-dasharray="1.800 1.300"/><rect x="12.5" y="13" width="10" height="10" rx="1.8" fill="#e02a3a" stroke="#c41425" stroke-width=".6"/><path d="M15,15.5 l5,5 M20,15.5 l-5,5" stroke="#fff" stroke-width="2" stroke-linecap="round"/></svg>
<svg class="abs" style="left:282.5px;top:64px;overflow:visible" width="24" height="24" viewBox="0 0 24 24"><path d="M2,6.500 L15,13 M2,9.800 L15.500,9.200" stroke="#444" stroke-width="1.300" stroke-linecap="round"/><path d="M2,6.500 L13,11.500 L13,12.500 Z M2,9.800 L13,8.500 L13,9.800 z" fill="#ccc" stroke="#444" stroke-width=".5"/><ellipse cx="19.500" cy="6.800" rx="3.600" ry="2.300" transform="rotate(-25 19.500 6.800)" fill="none" stroke="#c11" stroke-width="1.800"/><ellipse cx="19.300" cy="15.300" rx="3.600" ry="2.300" transform="rotate(35 19.300 15.300)" fill="none" stroke="#c11" stroke-width="1.800"/><path d="M14.500,9.500 l2.300,-1.500 M14.500,12 l2,1.800" stroke="#c11" stroke-width="1.800"/></svg>
<svg class="abs" style="left:320px;top:64px;overflow:visible" width="24" height="24" viewBox="0 0 24 24"><path d="M9,2 h8 l3,3 v11 h-11 z" fill="#fff" stroke="#999" stroke-width=".9"/><path d="M17,2 v3 h3" fill="none" stroke="#999" stroke-width=".8"/><path d="M11,7 h7" stroke="#666" stroke-width=".8"/><path d="M11,9 h7" stroke="#666" stroke-width=".8"/><path d="M11,11 h7" stroke="#666" stroke-width=".8"/><path d="M11,13 h7" stroke="#666" stroke-width=".8"/><path d="M3.5,5 h8.3 l3.2,3.2 v12.3 h-11.5 z" fill="#fff" stroke="#666" stroke-width=".9"/><path d="M11.8,5 v3.2 h3.2" fill="none" stroke="#666" stroke-width=".8"/><path d="M5.5,10.2 h7.5" stroke="#666" stroke-width=".8"/><path d="M5.5,12.2 h7.5" stroke="#666" stroke-width=".8"/><path d="M5.5,14.2 h7.5" stroke="#666" stroke-width=".8"/><path d="M5.5,16.2 h7.5" stroke="#666" stroke-width=".8"/><path d="M5.5,18.2 h7.5" stroke="#666" stroke-width=".8"/></svg>
<svg class="abs" style="left:358.5px;top:64px;overflow:visible" width="24" height="24" viewBox="0 0 24 24"><g opacity=".75"><rect x="3.500" y="3" width="15" height="18.500" fill="#ead9c6" stroke="#d9a86a" stroke-width="1"/><rect x="7.500" y="1.500" width="7" height="3.500" fill="#ead9c6" stroke="#d9a86a" stroke-width="1"/><path d="M6,6 h7.7 l2.8,2.8 v10.7 h-10.5 z" fill="#f6f6f6" stroke="#aaa" stroke-width=".9"/><path d="M13.7,6 v2.8 h2.8" fill="none" stroke="#aaa" stroke-width=".8"/><path d="M8,10.8 h6.5" stroke="#666" stroke-width=".8"/><path d="M8,12.8 h6.5" stroke="#666" stroke-width=".8"/><path d="M8,14.8 h6.5" stroke="#666" stroke-width=".8"/><path d="M8,16.8 h6.5" stroke="#666" stroke-width=".8"/></g></svg>
<svg class="abs" style="left:396px;top:64px" width="7" height="26" viewBox="0 0 7 26"><rect x="0.5" y="0.5" width="2" height="2" fill="#fff"/><rect x="1.3" y="1.3" width="1.3" height="1.3" fill="#9c9c9c"/><rect x="3.5" y="3.5" width="2" height="2" fill="#fff"/><rect x="4.3" y="4.3" width="1.3" height="1.3" fill="#9c9c9c"/><rect x="0.5" y="6.5" width="2" height="2" fill="#fff"/><rect x="1.3" y="7.3" width="1.3" height="1.3" fill="#9c9c9c"/><rect x="3.5" y="9.5" width="2" height="2" fill="#fff"/><rect x="4.3" y="10.3" width="1.3" height="1.3" fill="#9c9c9c"/><rect x="0.5" y="12.5" width="2" height="2" fill="#fff"/><rect x="1.3" y="13.3" width="1.3" height="1.3" fill="#9c9c9c"/><rect x="3.5" y="15.5" width="2" height="2" fill="#fff"/><rect x="4.3" y="16.3" width="1.3" height="1.3" fill="#9c9c9c"/><rect x="0.5" y="18.5" width="2" height="2" fill="#fff"/><rect x="1.3" y="19.3" width="1.3" height="1.3" fill="#9c9c9c"/><rect x="3.5" y="21.5" width="2" height="2" fill="#fff"/><rect x="4.3" y="22.3" width="1.3" height="1.3" fill="#9c9c9c"/></svg>
<svg class="abs" style="left:405px;top:64px;overflow:visible" width="24" height="24" viewBox="0 0 24 24"><g opacity="1"><path d="M1,9 l4.5,-5 h15.5 v10 h-15.5 z" fill="#f5d94e" stroke="#c9a81f" stroke-width="1"/><text x="12.75" y="12.4" font-family="Liberation Sans, sans-serif" font-size="9.5" font-weight="bold" fill="#222" text-anchor="middle">abc</text></g></svg>
<svg class="abs" style="left:444px;top:64px;overflow:visible" width="24" height="24" viewBox="0 0 24 24"><rect x=".5" y="4" width="23" height="17.500" fill="#d4deea" stroke="#6c9fe0" stroke-width="1"/><g opacity="1"><path d="M2,10 l4.5,-5 h12.5 v10 h-12.5 z" fill="#f5d94e" stroke="#c9a81f" stroke-width="1"/><text x="12.25" y="13.4" font-family="Liberation Sans, sans-serif" font-size="8.5" font-weight="bold" fill="#222" text-anchor="middle">ab</text></g><path d="M16.500,8 l1.500,7" stroke="#eee" stroke-width="2.200" stroke-linecap="round"/><circle cx="18.500" cy="16.500" r="3.900" fill="#c11a2a" stroke="#900" stroke-width=".5"/></svg>
<svg class="abs" style="left:482px;top:64px;overflow:visible" width="24" height="24" viewBox="0 0 24 24"><g opacity="0.5"><path d="M1,9 l4.5,-5 h14.5 v10 h-14.5 z" fill="#f5d94e" stroke="#c9a81f" stroke-width="1"/><text x="12.25" y="12.4" font-family="Liberation Sans, sans-serif" font-size="9.5" font-weight="bold" fill="#555" text-anchor="middle">ab</text></g><g opacity=".5"><path d="M17.500,7.500 l1.500,7" stroke="#eee" stroke-width="2.200" stroke-linecap="round"/><circle cx="19.500" cy="18" r="4.600" fill="#c11a2a"/></g></svg>
<svg class="abs" style="left:520px;top:64px;overflow:visible" width="24" height="24" viewBox="0 0 24 24"><g opacity="0.5"><path d="M1,9 l4.5,-5 h15.5 v10 h-15.5 z" fill="#f5d94e" stroke="#c9a81f" stroke-width="1"/><text x="12.75" y="12.4" font-family="Liberation Sans, sans-serif" font-size="9.5" font-weight="bold" fill="#555" text-anchor="middle">abc</text></g><g opacity=".6"><path d="M9,19 C12,15 19,15 23,19 C19,23 12,23 9,19 Z" fill="#fff" stroke="#777" stroke-width=".9"/><circle cx="16" cy="19" r="2.800" fill="#6a9ad0"/><circle cx="16" cy="19" r="1.200" fill="#222"/></g></svg>
<svg class="abs" style="left:558px;top:64px;overflow:visible" width="24" height="24" viewBox="0 0 24 24"><g opacity="0.5"><path d="M1,9 l4.5,-5 h15.5 v10 h-15.5 z" fill="#f5d94e" stroke="#c9a81f" stroke-width="1"/><text x="12.75" y="12.4" font-family="Liberation Sans, sans-serif" font-size="9.5" font-weight="bold" fill="#555" text-anchor="middle">abc</text></g><g opacity="0.55"><rect x="13" y="13.5" width="10" height="10" fill="#4a72b0"/><path d="M14,16.7 h4.2 v-2.2 l4.2,4 l-4.2,4 v-2.2 h-4.2 z" fill="#fff"/></g></svg>
<svg class="abs" style="left:596px;top:64px;overflow:visible" width="24" height="24" viewBox="0 0 24 24"><g opacity="0.5"><path d="M1,9 l4.5,-5 h15.5 v10 h-15.5 z" fill="#f5d94e" stroke="#c9a81f" stroke-width="1"/><text x="12.75" y="12.4" font-family="Liberation Sans, sans-serif" font-size="9.5" font-weight="bold" fill="#555" text-anchor="middle">abc</text></g><g opacity="0.55"><rect x="13" y="13.5" width="10" height="10" fill="#4a72b0"/><path d="M19.35,16.16 A2.70,2.70 0 1 1 15.46,19.42" fill="none" stroke="#fff" stroke-width="1.4"/><path d="M13.86,19.02 l3.4,.6 l-2.4,2.6 z" fill="#fff"/><circle cx="18" cy="18.5" r=".7" fill="#fff"/></g></svg>
<svg class="abs" style="left:634px;top:64px;overflow:visible" width="24" height="24" viewBox="0 0 24 24"><g opacity="1"><path d="M1,9 l4.5,-5 h15.5 v10 h-15.5 z" fill="#f7d21e" stroke="#c49f0a" stroke-width="1"/><text x="12.75" y="12.4" font-family="Liberation Sans, sans-serif" font-size="9.5" font-weight="bold" fill="#222" text-anchor="middle">abc</text></g><rect x="13.500" y="13.500" width="10" height="10" fill="#d3ab1c" stroke="#b8920c" stroke-width=".6"/><path d="M15.500,21.800 l1,-2.800 l4.200,-4 l1.800,1.800 l-4.200,4 z" fill="#fff"/></svg>
<svg class="abs" style="left:671px;top:64px" width="7" height="26" viewBox="0 0 7 26"><rect x="0.5" y="0.5" width="2" height="2" fill="#fff"/><rect x="1.3" y="1.3" width="1.3" height="1.3" fill="#9c9c9c"/><rect x="3.5" y="3.5" width="2" height="2" fill="#fff"/><rect x="4.3" y="4.3" width="1.3" height="1.3" fill="#9c9c9c"/><rect x="0.5" y="6.5" width="2" height="2" fill="#fff"/><rect x="1.3" y="7.3" width="1.3" height="1.3" fill="#9c9c9c"/><rect x="3.5" y="9.5" width="2" height="2" fill="#fff"/><rect x="4.3" y="10.3" width="1.3" height="1.3" fill="#9c9c9c"/><rect x="0.5" y="12.5" width="2" height="2" fill="#fff"/><rect x="1.3" y="13.3" width="1.3" height="1.3" fill="#9c9c9c"/><rect x="3.5" y="15.5" width="2" height="2" fill="#fff"/><rect x="4.3" y="16.3" width="1.3" height="1.3" fill="#9c9c9c"/><rect x="0.5" y="18.5" width="2" height="2" fill="#fff"/><rect x="1.3" y="19.3" width="1.3" height="1.3" fill="#9c9c9c"/><rect x="3.5" y="21.5" width="2" height="2" fill="#fff"/><rect x="4.3" y="22.3" width="1.3" height="1.3" fill="#9c9c9c"/></svg>
<svg class="abs" style="left:684px;top:64px" width="7" height="26" viewBox="0 0 7 26"><rect x="0.5" y="0.5" width="2" height="2" fill="#fff"/><rect x="1.3" y="1.3" width="1.3" height="1.3" fill="#9c9c9c"/><rect x="3.5" y="3.5" width="2" height="2" fill="#fff"/><rect x="4.3" y="4.3" width="1.3" height="1.3" fill="#9c9c9c"/><rect x="0.5" y="6.5" width="2" height="2" fill="#fff"/><rect x="1.3" y="7.3" width="1.3" height="1.3" fill="#9c9c9c"/><rect x="3.5" y="9.5" width="2" height="2" fill="#fff"/><rect x="4.3" y="10.3" width="1.3" height="1.3" fill="#9c9c9c"/><rect x="0.5" y="12.5" width="2" height="2" fill="#fff"/><rect x="1.3" y="13.3" width="1.3" height="1.3" fill="#9c9c9c"/><rect x="3.5" y="15.5" width="2" height="2" fill="#fff"/><rect x="4.3" y="16.3" width="1.3" height="1.3" fill="#9c9c9c"/><rect x="0.5" y="18.5" width="2" height="2" fill="#fff"/><rect x="1.3" y="19.3" width="1.3" height="1.3" fill="#9c9c9c"/><rect x="3.5" y="21.5" width="2" height="2" fill="#fff"/><rect x="4.3" y="22.3" width="1.3" height="1.3" fill="#9c9c9c"/></svg>
<svg class="abs" style="left:7px;top:100px" width="7" height="26" viewBox="0 0 7 26"><rect x="0.5" y="0.5" width="2" height="2" fill="#fff"/><rect x="1.3" y="1.3" width="1.3" height="1.3" fill="#9c9c9c"/><rect x="3.5" y="3.5" width="2" height="2" fill="#fff"/><rect x="4.3" y="4.3" width="1.3" height="1.3" fill="#9c9c9c"/><rect x="0.5" y="6.5" width="2" height="2" fill="#fff"/><rect x="1.3" y="7.3" width="1.3" height="1.3" fill="#9c9c9c"/><rect x="3.5" y="9.5" width="2" height="2" fill="#fff"/><rect x="4.3" y="10.3" width="1.3" height="1.3" fill="#9c9c9c"/><rect x="0.5" y="12.5" width="2" height="2" fill="#fff"/><rect x="1.3" y="13.3" width="1.3" height="1.3" fill="#9c9c9c"/><rect x="3.5" y="15.5" width="2" height="2" fill="#fff"/><rect x="4.3" y="16.3" width="1.3" height="1.3" fill="#9c9c9c"/><rect x="0.5" y="18.5" width="2" height="2" fill="#fff"/><rect x="1.3" y="19.3" width="1.3" height="1.3" fill="#9c9c9c"/><rect x="3.5" y="21.5" width="2" height="2" fill="#fff"/><rect x="4.3" y="22.3" width="1.3" height="1.3" fill="#9c9c9c"/></svg>
<svg class="abs" style="left:17px;top:101px;overflow:visible" width="24" height="24" viewBox="0 0 24 24"><path d="M2.8,7 L9.8,1.300 V4.600 C16,4.400 19.800,7.400 19.600,11.600 C19.400,15.600 15.500,18 10.600,17.800 L11.600,14 C14,14.200 15.600,13.200 15.600,11.400 C15.600,9.600 13.500,9 9.800,9.200 V12.700 Z" fill="#6cb36c" stroke="#3f8a3f" stroke-width=".9" stroke-linejoin="round"/></svg>
<svg class="abs" style="left:55px;top:101px;overflow:visible" width="24" height="24" viewBox="0 0 24 24"><g opacity=".4" transform="translate(24,0) scale(-1,1)"><path d="M2.8,7 L9.8,1.300 V4.600 C16,4.400 19.800,7.400 19.600,11.600 C19.400,15.600 15.500,18 10.600,17.800 L11.600,14 C14,14.200 15.600,13.200 15.600,11.400 C15.600,9.600 13.500,9 9.800,9.200 V12.700 Z" fill="#6cb36c" stroke="#3f8a3f" stroke-width=".9" stroke-linejoin="round"/></g></svg>
<svg class="abs" style="left:92.5px;top:101px;overflow:visible" width="24" height="24" viewBox="0 0 24 24"><path d="M1.8,6.5 C1.3,1.5 7,0.5 11.5,2.2 C15.5,3.7 21.2,0.7 22.3,5.5 C23.2,9.8 20.2,12.5 17,11.2 C13.8,9.8 11.8,12.4 8.5,12.4 C4.600,12.4 2.1,10.2 1.8,6.5 Z" fill="#8fca8f" stroke="#555" stroke-width="1" /><g opacity="1"><rect x="13.5" y="13.5" width="10" height="10" fill="#1f4a9e"/><path d="M19.85,16.16 A2.70,2.70 0 1 1 15.96,19.42" fill="none" stroke="#fff" stroke-width="1.4"/><path d="M14.36,19.02 l3.4,.6 l-2.4,2.6 z" fill="#fff"/><circle cx="18.5" cy="18.5" r=".7" fill="#fff"/></g></svg>
<svg class="abs" style="left:130.5px;top:101px;overflow:visible" width="24" height="24" viewBox="0 0 24 24"><circle cx="9" cy="8" r="7" fill="#a5dba5" stroke="#4a9a4a" stroke-width="1"/><path d="M9.500,15 l3.500,-6 h7 l3.500,6 l-3.500,6 h-7 z" fill="#9cc3e2" stroke="#3f78a8" stroke-width="1"/><path d="M8,8 c3,-3 8,-2 8.500,7" fill="none" stroke="#222" stroke-width="1.100"/><path d="M14.200,12.800 l2.300,3 l2,-3.200" fill="none" stroke="#222" stroke-width="1.100"/></svg>
<svg class="abs" style="left:168.5px;top:101px;overflow:visible" width="24" height="24" viewBox="0 0 24 24"><path d="M1.8,6.5 C1.3,1.5 7,0.5 11.5,2.2 C15.5,3.7 21.2,0.7 22.3,5.5 C23.2,9.8 20.2,12.5 17,11.2 C13.8,9.8 11.8,12.4 8.5,12.4 C4.600,12.4 2.1,10.2 1.8,6.5 Z" fill="#8fca8f" stroke="#555" stroke-width="1" /><path d="M5,7 C5,4.5 8,4 10.5,4.6 C12.5,5.1 12.5,7.2 10.5,8.4 C8.5,9.6 5,9.5 5,7 Z" fill="#eaeaea" stroke="#555" stroke-width=".9"/><rect x="13.5" y="13.5" width="10" height="10" rx="1.8" fill="#c8a416" stroke="#b8940c" stroke-width=".6"/><g stroke="#fff" stroke-width="1.5" stroke-linecap="round"><line x1="18.50" y1="15.10" x2="18.50" y2="21.90"/><line x1="21.44" y1="16.80" x2="15.56" y2="20.20"/><line x1="21.44" y1="20.20" x2="15.56" y2="16.80"/></g><circle cx="18.5" cy="18.5" r="1.1" fill="#c8a416"/></svg>
<svg class="abs" style="left:206.5px;top:101px;overflow:visible" width="24" height="24" viewBox="0 0 24 24"><path d="M1.8,6.5 C1.3,1.5 7,0.5 11.5,2.2 C15.5,3.7 21.2,0.7 22.3,5.5 C23.2,9.8 20.2,12.5 17,11.2 C13.8,9.8 11.8,12.4 8.5,12.4 C4.600,12.4 2.1,10.2 1.8,6.5 Z" fill="#a9a9a9" stroke="#555" stroke-width="1" /><path d="M3,20 C2.5,16 5,12.5 9,12.8 C12,13 11.5,17 10,20 C8.5,23 3.5,23.5 3,20 Z" fill="#8fca8f" stroke="#555" stroke-width="1"/><rect x="13.5" y="13.5" width="10" height="10" rx="1.8" fill="#c8a416" stroke="#b8940c" stroke-width=".6"/><g stroke="#fff" stroke-width="1.5" stroke-linecap="round"><line x1="18.50" y1="15.10" x2="18.50" y2="21.90"/><line x1="21.44" y1="16.80" x2="15.56" y2="20.20"/><line x1="21.44" y1="20.20" x2="15.56" y2="16.80"/></g><circle cx="18.5" cy="18.5" r="1.1" fill="#c8a416"/></svg>
<svg class="abs" style="left:244.5px;top:101px;overflow:visible" width="24" height="24" viewBox="0 0 24 24"><path d="M1.8,6.5 C1.3,1.5 7,0.5 11.5,2.2 C15.5,3.7 21.2,0.7 22.3,5.5 C23.2,9.8 20.2,12.5 17,11.2 C13.8,9.8 11.8,12.4 8.5,12.4 C4.600,12.4 2.1,10.2 1.8,6.5 Z" fill="#8fca8f" stroke="#555" stroke-width="1" /><path d="M5,7 C5,4.5 8,4 10.5,4.6 C12.5,5.1 12.5,7.2 10.5,8.4 C8.5,9.6 5,9.5 5,7 Z" fill="#eaeaea" stroke="#555" stroke-width=".9"/><rect x="13.5" y="13.5" width="10" height="10" rx="1.8" fill="#e85a66" stroke="#c41425" stroke-width=".6"/><path d="M16,16 l5,5 M21,16 l-5,5" stroke="#fff" stroke-width="2" stroke-linecap="round"/></svg>
<svg class="abs" style="left:282.5px;top:101px;overflow:visible" width="24" height="24" viewBox="0 0 24 24"><path d="M1.8,6.5 C1.3,1.5 7,0.5 11.5,2.2 C15.5,3.7 21.2,0.7 22.3,5.5 C23.2,9.8 20.2,12.5 17,11.2 C13.8,9.8 11.8,12.4 8.5,12.4 C4.600,12.4 2.1,10.2 1.8,6.5 Z" fill="#a9a9a9" stroke="#555" stroke-width="1" /><path d="M3,20 C2.5,16 5,12.5 9,12.8 C12,13 11.5,17 10,20 C8.5,23 3.5,23.5 3,20 Z" fill="#8fca8f" stroke="#555" stroke-width="1"/><rect x="13.5" y="13.5" width="10" height="10" rx="1.8" fill="#e85a66" stroke="#c41425" stroke-width=".6"/><path d="M16,16 l5,5 M21,16 l-5,5" stroke="#fff" stroke-width="2" stroke-linecap="round"/></svg>
<svg class="abs" style="left:320.5px;top:101px;overflow:visible" width="24" height="24" viewBox="0 0 24 24"><path d="M3,12 L8,12.500 L12,10.500 L10,15.500 L5.500,17.500 Z" fill="#f7dc2a" stroke="#777" stroke-width=".8"/><path d="M3,8 C2.500,3 7,2 11,3 C15,4 20,2 21,6 C21.800,10 19,12.500 16,11.300 C14,10.500 13,10 12,10.500 L8,12.500 L3.500,12 C3,11 3,9.500 3,8 Z" fill="#8fca8f" stroke="#555" stroke-width="1"/></svg>
<svg class="abs" style="left:358.5px;top:101px;overflow:visible" width="24" height="24" viewBox="0 0 24 24"><path d="M2,9 C1.500,3 7,1.500 12,2.800 C17,1.500 22.500,3 22,9 C21.500,14.500 17,15.500 12,12.500 C7,15.500 2.500,14.500 2,9 Z" fill="#f3e28a" stroke="#c9b75a" stroke-width="1"/><path d="M5,8.800 C4.800,5.500 8,4.800 12,5.600 C16,4.800 19.200,5.500 19,8.800 C18.700,11.500 16,12 12,9.500 C8,12 5.300,11.500 5,8.800 Z" fill="#bfe0b4" stroke="#9cc79a" stroke-width=".8"/></svg>
<svg class="abs" style="left:396px;top:101px;overflow:visible" width="24" height="24" viewBox="0 0 24 24"><path d="M2.500,7 C2,2.500 7,1.500 10.500,3 L11.500,11 C9,13 3,12 2.500,7 Z" fill="#8fca8f" stroke="#555" stroke-width="1"/><path d="M14,3.200 C17,1.500 21,2.500 21.500,6.500 C22,10.500 18,13 14.500,11.300 Z" fill="#8fca8f" stroke="#555" stroke-width="1"/><path d="M13.500,1 L11,14.500 M11,3 L13.800,14.500" stroke="#555" stroke-width="1.100"/><path d="M13.500,1 L11.800,12 M11,3 L13,12" stroke="#ddd" stroke-width=".5"/><ellipse cx="9.800" cy="18.800" rx="1.900" ry="3.300" transform="rotate(20 9.800 18.800)" fill="none" stroke="#c11" stroke-width="1.600"/><ellipse cx="15" cy="18.500" rx="1.900" ry="3.300" transform="rotate(-20 15 18.500)" fill="none" stroke="#c11" stroke-width="1.600"/></svg>
<svg class="abs" style="left:434px;top:101px;overflow:visible" width="24" height="24" viewBox="0 0 24 24"><path d="M2.500,7.500 C2,3 7,1.500 11.500,3.500 L12,13 C8,15.500 3,13 2.500,7.500 Z" fill="#8fca8f" stroke="#555" stroke-width="1"/><path d="M12.500,3.500 C16,1.500 21.500,2.500 21.800,7 C22,12 17,15 12.500,13 Z" fill="#8fca8f" stroke="#555" stroke-width="1"/><path d="M9.500,4.500 h6 M9.500,7.300 h6 M9.500,10 h6" stroke="#333" stroke-width="1.100"/><path d="M12.200,2 V14 c-4,2.500 4,3.500 1,5.500 l2,1.500" fill="none" stroke="#333" stroke-width="1"/></svg>
<svg class="abs" style="left:472px;top:101px;overflow:visible" width="24" height="24" viewBox="0 0 24 24"><path d="M9.500,1.500 L19.500,0 L14.500,9.500 L12,10.500 L10.500,13 L8,11 L9.500,8.500 L8.500,6.500 Z" fill="#888" stroke="#444" stroke-width=".8"/><path d="M11,2.500 L17,1.500 L13.500,8 Z" fill="#c4c4c4"/><rect x="2" y="17" width="16.500" height="5" fill="#6f9fc0" stroke="#2f5f85" stroke-width="1"/><path d="M10.200,13 l2,4.500 l-2,3 l-2,-3 z" fill="#f5e66a" stroke="#2f5f85" stroke-width=".7"/></svg>
<svg class="abs" style="left:511px;top:101px;overflow:visible" width="24" height="24" viewBox="0 0 24 24"><g transform="translate(12 12) scale(1.12) translate(-12 -12)"><g opacity=".85"><path d="M17.500,15.500 A7.300,7.300 0 1 1 17.800,7.300" fill="none" stroke="#8ab0e8" stroke-width="2.600"/><path d="M14,8.500 L22.500,8 L19,1.800 Z" fill="#6c9ce0" transform="rotate(20 18 6)"/></g></g></svg>
<div id="ltb"></div>
<svg class="abs" style="left:8px;top:138px" width="34" height="7" viewBox="0 0 34 7"><rect x="0.5" y="0.5" width="2" height="2" fill="#fff"/><rect x="1.3" y="1.3" width="1.3" height="1.3" fill="#9c9c9c"/><rect x="3.5" y="3.5" width="2" height="2" fill="#fff"/><rect x="4.3" y="4.3" width="1.3" height="1.3" fill="#9c9c9c"/><rect x="6.5" y="0.5" width="2" height="2" fill="#fff"/><rect x="7.3" y="1.3" width="1.3" height="1.3" fill="#9c9c9c"/><rect x="9.5" y="3.5" width="2" height="2" fill="#fff"/><rect x="10.3" y="4.3" width="1.3" height="1.3" fill="#9c9c9c"/><rect x="12.5" y="0.5" width="2" height="2" fill="#fff"/><rect x="13.3" y="1.3" width="1.3" height="1.3" fill="#9c9c9c"/><rect x="15.5" y="3.5" width="2" height="2" fill="#fff"/><rect x="16.3" y="4.3" width="1.3" height="1.3" fill="#9c9c9c"/><rect x="18.5" y="0.5" width="2" height="2" fill="#fff"/><rect x="19.3" y="1.3" width="1.3" height="1.3" fill="#9c9c9c"/><rect x="21.5" y="3.5" width="2" height="2" fill="#fff"/><rect x="22.3" y="4.3" width="1.3" height="1.3" fill="#9c9c9c"/><rect x="24.5" y="0.5" width="2" height="2" fill="#fff"/><rect x="25.3" y="1.3" width="1.3" height="1.3" fill="#9c9c9c"/><rect x="27.5" y="3.5" width="2" height="2" fill="#fff"/><rect x="28.3" y="4.3" width="1.3" height="1.3" fill="#9c9c9c"/><rect x="30.5" y="0.5" width="2" height="2" fill="#fff"/><rect x="31.3" y="1.3" width="1.3" height="1.3" fill="#9c9c9c"/></svg>
<svg class="abs" style="left:11.5px;top:147px;overflow:visible" width="24" height="24" viewBox="0 0 24 24"><path d="M2.8,2.7 L9.5,16.9 L16.5,2.4 L22.4,2.7" fill="none" stroke="#3d5a7a" stroke-width="1.300"/><circle cx="2.8" cy="2.7" r="1.900" fill="#f4f4f4" stroke="#3d5a7a" stroke-width="1.100"/><circle cx="9.5" cy="16.9" r="1.900" fill="#f4f4f4" stroke="#3d5a7a" stroke-width="1.100"/><circle cx="16.5" cy="2.4" r="1.900" fill="#f4f4f4" stroke="#3d5a7a" stroke-width="1.100"/><circle cx="22.4" cy="2.7" r="1.900" fill="#f4f4f4" stroke="#3d5a7a" stroke-width="1.100"/><rect x="15" y="15" width="9.3" height="9.3" rx="2" fill="#5a9a4e" stroke="#3f7d36" stroke-width=".7"/><path d="M16.7,19.65 h5.9 M19.65,16.7 v5.9" stroke="#fff" stroke-width="1.9"/></svg>
<svg class="abs" style="left:11.5px;top:184px;overflow:visible" width="24" height="24" viewBox="0 0 24 24"><rect x="0.6" y="1" width="6.600" height="6.400" fill="#1f3a5f"/><rect x="7.2" y="1" width="6.600" height="6.400" fill="#6f9fd8"/><rect x="13.8" y="1" width="6.600" height="6.400" fill="#1f3a5f"/><rect x="0.6" y="7.4" width="6.600" height="6.400" fill="#6f9fd8"/><rect x="7.2" y="7.4" width="6.600" height="6.400" fill="#1f3a5f"/><rect x="13.8" y="7.4" width="6.600" height="6.400" fill="#6f9fd8"/><rect x="0.6" y="13.8" width="6.600" height="6.400" fill="#1f3a5f"/><rect x="7.2" y="13.8" width="6.600" height="6.400" fill="#6f9fd8"/><rect x="13.8" y="13.8" width="6.600" height="6.400" fill="#a9c6ea"/><rect x="15" y="15" width="9.3" height="9.3" rx="2" fill="#5a9a4e" stroke="#3f7d36" stroke-width=".7"/><path d="M16.7,19.65 h5.9 M19.65,16.7 v5.9" stroke="#fff" stroke-width="1.9"/></svg>
<svg class="abs" style="left:11.5px;top:221.5px;overflow:visible" width="24" height="24" viewBox="0 0 24 24"><ellipse cx="5" cy="8" rx="4.300" ry="5.800" fill="#5585bf" stroke="#1f3a5f" stroke-width="1"/><ellipse cx="14.500" cy="7.500" rx="4.300" ry="5.600" fill="#5585bf" stroke="#1f3a5f" stroke-width="1"/><path d="M6,5 C6,1.500 13.500,1.500 13.500,5 C14,9 13,12 12.500,14 C12,16 14,17.500 16,16.500 L16.500,18 C14,19.800 9.500,19.500 9.200,16 C9,13 6,10 6,5 Z" fill="#5f8fc8" stroke="#1f3a5f" stroke-width="1"/><path d="M8.500,7.500 v3 M11.500,7.500 v3" stroke="#1f3a5f" stroke-width="1"/><circle cx="17" cy="11" r=".9" fill="#fff"/><rect x="15" y="15" width="9.3" height="9.3" rx="2" fill="#5a9a4e" stroke="#3f7d36" stroke-width=".7"/><path d="M16.7,19.65 h5.9 M19.65,16.7 v5.9" stroke="#fff" stroke-width="1.9"/></svg>
<svg class="abs" style="left:11.5px;top:260px;overflow:visible" width="24" height="24" viewBox="0 0 24 24"><path d="M1,24 C3,15 10,6 23.500,1 C22,9 16,15 6,18.500 C4,19.800 2.500,22 1.800,24 Z" fill="#6f9fd8" stroke="#1f3a5f" stroke-width="1"/><path d="M2,22.500 C6,14 13,7 22,2.500 M8,14 l7,-1 M11,10.500 l7,-1.500 M14.500,7.500 l5,-1.500" fill="none" stroke="#dbe7f5" stroke-width=".8"/><rect x="15" y="15" width="9.3" height="9.3" rx="2" fill="#5a9a4e" stroke="#3f7d36" stroke-width=".7"/><path d="M16.7,19.65 h5.9 M19.65,16.7 v5.9" stroke="#fff" stroke-width="1.9"/></svg>
<svg class="abs" style="left:11.5px;top:298px;overflow:visible" width="24" height="24" viewBox="0 0 24 24"><path d="M1,2 C11,2.500 20,6 24,12 L1,22.500 C8,16 8.500,8 1,2 Z" fill="#5585bf" stroke="#1f3a5f" stroke-width="1" stroke-linejoin="round"/><path d="M7,3.500 C12,9 12,15 8.500,19 M12.500,5 C17,10 17,14 14.500,16.500 M17.500,7 C20.500,10.500 20.500,12.500 19.500,14" fill="none" stroke="#1f3a5f" stroke-width=".9"/><rect x="15" y="15" width="9.3" height="9.3" rx="2" fill="#5a9a4e" stroke="#3f7d36" stroke-width=".7"/><path d="M16.7,19.65 h5.9 M19.65,16.7 v5.9" stroke="#fff" stroke-width="1.9"/></svg>
<svg class="abs" style="left:11.5px;top:336.5px;overflow:visible" width="24" height="24" viewBox="0 0 24 24"><ellipse cx="11.500" cy="10.500" rx="11" ry="10" fill="#d4e3f4" stroke="#6f9fd8" stroke-width="1"/><path d="M3,7 l3,-3 l4,1 l1,3 l-3,3 l-4,-1 z M12,4 l5,-1.500 l4,3.500 l-1,5 l-4,1 l-3,-3 z M6,13 l4,-1 l3,3 l-2,4 l-4,-1 z M15,14 l4,0 l-1,4 l-3,1 z" fill="#5f8fc8" opacity=".8"/><path d="M.5,10.500 h22 M11.500,.5 v20" stroke="#eaf1fa" stroke-width=".8"/><rect x="15" y="15" width="9.3" height="9.3" rx="2" fill="#5a9a4e" stroke="#3f7d36" stroke-width=".7"/><path d="M16.7,19.65 h5.9 M19.65,16.7 v5.9" stroke="#fff" stroke-width="1.9"/></svg>
<svg class="abs" style="left:11.5px;top:374.5px;overflow:visible" width="24" height="24" viewBox="0 0 24 24"><ellipse cx="11.500" cy="10.500" rx="11" ry="10" fill="#1f3a5f" stroke="#14263f" stroke-width="1"/><path d="M2.500,5.500 h18 l1.500,3 h-21 z M.8,11.500 h21.400 l-.8,3.500 h-19.800 z M4.500,17.500 h14 l-3,2.500 h-8 z" fill="#7ea8d6"/><ellipse cx="11.500" cy="10.500" rx="4.500" ry="10" fill="none" stroke="#1f3a5f" stroke-width="1.600"/><path d="M11.500,.5 v20" stroke="#1f3a5f" stroke-width="1.200"/><rect x="15" y="15" width="9.3" height="9.3" rx="2" fill="#5a9a4e" stroke="#3f7d36" stroke-width=".7"/><path d="M16.7,19.65 h5.9 M19.65,16.7 v5.9" stroke="#fff" stroke-width="1.9"/></svg>
<svg class="abs" style="left:11.5px;top:412.5px;overflow:visible" width="24" height="24" viewBox="0 0 24 24"><ellipse cx="11.500" cy="10.500" rx="11" ry="10" fill="#e4eefa" stroke="#5f8fc8" stroke-width="1"/><path d="M.5,10.500 h22 M2.500,5.500 h18 M2.500,15.500 h18 M11.500,.5 v20 M11.500,.5 C5,5 5,16 11.500,20.500 M11.500,.5 C18,5 18,16 11.500,20.500" fill="none" stroke="#7ea8d6" stroke-width=".9"/><path d="M5.500,5 L9.500,16 L14,5.500 L18.500,5" fill="none" stroke="#222" stroke-width="1.100"/><circle cx="5.5" cy="5" r="1.400" fill="#fff" stroke="#222" stroke-width=".9"/><circle cx="9.5" cy="16" r="1.400" fill="#fff" stroke="#222" stroke-width=".9"/><circle cx="14" cy="5.5" r="1.400" fill="#fff" stroke="#222" stroke-width=".9"/><circle cx="18.5" cy="5" r="1.400" fill="#fff" stroke="#222" stroke-width=".9"/><rect x="15" y="15" width="9.3" height="9.3" rx="2" fill="#5a9a4e" stroke="#3f7d36" stroke-width=".7"/><path d="M16.7,19.65 h5.9 M19.65,16.7 v5.9" stroke="#fff" stroke-width="1.9"/></svg>
<svg class="abs" style="left:11.5px;top:450.5px;overflow:visible" width="24" height="24" viewBox="0 0 24 24"><path d="M9,3 C13,2 16.500,5 15.500,10 C14.500,14.500 11,17.500 7,19 L6,17.500 C8.500,16 10.500,14 11,11 C7.500,11.500 5.500,9.500 6,6.500 C6.300,4.500 7.500,3.500 9,3 Z" fill="#5b87bf" stroke="#2f5a8f" stroke-width="1"/><rect x="15" y="15" width="9.3" height="9.3" rx="2" fill="#5a9a4e" stroke="#3f7d36" stroke-width=".7"/><path d="M16.7,19.65 h5.9 M19.65,16.7 v5.9" stroke="#fff" stroke-width="1.9"/></svg>
<svg class="abs" style="left:11.5px;top:488.5px;overflow:visible" width="24" height="24" viewBox="0 0 24 24"><path d="M2.8,2.7 L9.5,16.9 L16.5,2.4 L22.4,2.7" fill="none" stroke="#3d5a7a" stroke-width="1.300"/><circle cx="2.8" cy="2.7" r="1.900" fill="#f4f4f4" stroke="#3d5a7a" stroke-width="1.100"/><circle cx="9.5" cy="16.9" r="1.900" fill="#f4f4f4" stroke="#3d5a7a" stroke-width="1.100"/><circle cx="16.5" cy="2.4" r="1.900" fill="#f4f4f4" stroke="#3d5a7a" stroke-width="1.100"/><circle cx="22.4" cy="2.7" r="1.900" fill="#f4f4f4" stroke="#3d5a7a" stroke-width="1.100"/><rect x="15" y="15" width="9.3" height="9.3" rx="1.8" fill="#c8a416" stroke="#b8940c" stroke-width=".6"/><g stroke="#fff" stroke-width="1.5" stroke-linecap="round"><line x1="19.65" y1="16.49" x2="19.65" y2="22.81"/><line x1="22.39" y1="18.07" x2="16.91" y2="21.23"/><line x1="22.39" y1="21.23" x2="16.91" y2="18.07"/></g><circle cx="19.65" cy="19.65" r="1.1" fill="#c8a416"/></svg>
<svg class="abs" style="left:11.5px;top:529px;overflow:visible" width="24" height="24" viewBox="0 0 24 24"><rect x="1.500" y="1.500" width="19" height="19" fill="#eee" stroke="#888" stroke-width="1"/><rect x="15" y="15.500" width="9.300" height="8.300" rx="1.800" fill="#e8505c" stroke="#d03040" stroke-width=".6"/><path d="M16.800,19.650 h5.700" stroke="#fff" stroke-width="2.200"/></svg>
<svg class="abs" style="left:38.5px;top:502.5px" width="7" height="7" viewBox="0 0 7 7"><path d="M0,0 h7 l-3.5,7 z" fill="#555"/></svg>
<svg class="abs" style="left:8px;top:563px" width="34" height="7" viewBox="0 0 34 7"><rect x="0.5" y="0.5" width="2" height="2" fill="#fff"/><rect x="1.3" y="1.3" width="1.3" height="1.3" fill="#9c9c9c"/><rect x="3.5" y="3.5" width="2" height="2" fill="#fff"/><rect x="4.3" y="4.3" width="1.3" height="1.3" fill="#9c9c9c"/><rect x="6.5" y="0.5" width="2" height="2" fill="#fff"/><rect x="7.3" y="1.3" width="1.3" height="1.3" fill="#9c9c9c"/><rect x="9.5" y="3.5" width="2" height="2" fill="#fff"/><rect x="10.3" y="4.3" width="1.3" height="1.3" fill="#9c9c9c"/><rect x="12.5" y="0.5" width="2" height="2" fill="#fff"/><rect x="13.3" y="1.3" width="1.3" height="1.3" fill="#9c9c9c"/><rect x="15.5" y="3.5" width="2" height="2" fill="#fff"/><rect x="16.3" y="4.3" width="1.3" height="1.3" fill="#9c9c9c"/><rect x="18.5" y="0.5" width="2" height="2" fill="#fff"/><rect x="19.3" y="1.3" width="1.3" height="1.3" fill="#9c9c9c"/><rect x="21.5" y="3.5" width="2" height="2" fill="#fff"/><rect x="22.3" y="4.3" width="1.3" height="1.3" fill="#9c9c9c"/><rect x="24.5" y="0.5" width="2" height="2" fill="#fff"/><rect x="25.3" y="1.3" width="1.3" height="1.3" fill="#9c9c9c"/><rect x="27.5" y="3.5" width="2" height="2" fill="#fff"/><rect x="28.3" y="4.3" width="1.3" height="1.3" fill="#9c9c9c"/><rect x="30.5" y="0.5" width="2" height="2" fill="#fff"/><rect x="31.3" y="1.3" width="1.3" height="1.3" fill="#9c9c9c"/></svg>
<div id="lay"><div id="layh">Layers<svg class="abs" style="left:2px;top:4px" width="36" height="15" viewBox="0 0 36 15"><circle cx="7.500" cy="7.500" r="6.500" fill="#2b2b2b"/><path d="M4.800,4.800 l5.400,5.400 M10.200,4.800 l-5.400,5.400" stroke="#fff" stroke-width="2"/><circle cx="27" cy="7.500" r="6.500" fill="#2b2b2b"/><rect x="23.500" y="6.500" width="5" height="4" fill="none" stroke="#fff" stroke-width="1.200"/><path d="M25.500,6.500 v-2 h5 v4 h-2" fill="none" stroke="#fff" stroke-width="1.200"/></svg></div><div id="tree">
<div class="row" style="top:2px;"><svg class="abs" style="left:6px;top:5px" width="10" height="10" viewBox="0 0 10 10"><path d="M1.500,.5 l6.500,4.500 l-6.500,4.500 z" fill="#8a8a8a"/></svg><svg class="abs" style="left:26px;top:0px;overflow:visible" width="18" height="20" viewBox="0 0 18 20"><rect x="1.500" y="4.500" width="12" height="12" rx="2.200" fill="#e2e6ec" stroke="#6e6e6e" stroke-width="1"/><path d="M4.200,10 l3,4.200 l6.800,-12" fill="none" stroke="#111" stroke-width="2.100" stroke-linecap="round" stroke-linejoin="round"/></svg><svg class="abs" style="left:52px;top:2px" width="16" height="16" viewBox="0 0 16 16"><g fill="#fff" stroke="#888" stroke-width=".7"><circle cx="3.500" cy="12.500" r="1.100"/><circle cx="6" cy="5.500" r="1.100"/><circle cx="12" cy="3" r="1.100"/></g></svg><span>places</span></div>
<div class="row" style="top:22px;"><svg class="abs" style="left:6px;top:5px" width="10" height="10" viewBox="0 0 10 10"><path d="M1.500,.5 l6.500,4.500 l-6.500,4.500 z" fill="#8a8a8a"/></svg><svg class="abs" style="left:26px;top:0px;overflow:visible" width="18" height="20" viewBox="0 0 18 20"><rect x="1.500" y="4.500" width="12" height="12" rx="2.200" fill="#e2e6ec" stroke="#6e6e6e" stroke-width="1"/><path d="M4.200,10 l3,4.200 l6.800,-12" fill="none" stroke="#111" stroke-width="2.100" stroke-linecap="round" stroke-linejoin="round"/></svg><svg class="abs" style="left:50px;top:2px" width="18" height="16" viewBox="0 0 18 16"><path d="M1.500,6 C1,2.500 4,2 8,3 C12,2 16,1.500 16.500,5 C17,9 15.500,11 13,10.500 C10,10 8,9.500 5,11.500 C2.500,13 1.800,9 1.500,6 Z" fill="#eee" stroke="#999" stroke-width=".9"/></svg><span>buildings</span></div>
<div class="row" style="top:42px;"><svg class="abs" style="left:6px;top:5px" width="10" height="10" viewBox="0 0 10 10"><path d="M1.500,.5 l6.500,4.500 l-6.500,4.500 z" fill="#8a8a8a"/></svg><svg class="abs" style="left:26px;top:0px;overflow:visible" width="18" height="20" viewBox="0 0 18 20"><rect x="1.500" y="4.500" width="12" height="12" rx="2.200" fill="#e2e6ec" stroke="#6e6e6e" stroke-width="1"/><path d="M4.200,10 l3,4.200 l6.800,-12" fill="none" stroke="#111" stroke-width="2.100" stroke-linecap="round" stroke-linejoin="round"/></svg><svg class="abs" style="left:50px;top:2px" width="18" height="16" viewBox="0 0 18 16"><path d="M2,2.500 L6.500,14 L11,3.500 L16,1.500" fill="none" stroke="#777" stroke-width=".9"/><g fill="#fff" stroke="#888" stroke-width=".6"><circle cx="2" cy="2.500" r="1"/><circle cx="6.500" cy="14" r="1"/><circle cx="11" cy="3.500" r="1"/><circle cx="16" cy="1.500" r="1"/></g></svg><span>roads</span></div>
<div class="row" style="top:62px;"><svg class="abs" style="left:6px;top:5px" width="10" height="10" viewBox="0 0 10 10"><path d="M1.500,.5 l6.500,4.500 l-6.500,4.500 z" fill="#8a8a8a"/></svg><svg class="abs" style="left:26px;top:0px;overflow:visible" width="18" height="20" viewBox="0 0 18 20"><rect x="1.500" y="4.500" width="12" height="12" rx="2.200" fill="#e2e6ec" stroke="#6e6e6e" stroke-width="1"/><path d="M4.200,10 l3,4.200 l6.800,-12" fill="none" stroke="#111" stroke-width="2.100" stroke-linecap="round" stroke-linejoin="round"/></svg><svg class="abs" style="left:50px;top:2px" width="18" height="16" viewBox="0 0 18 16"><path d="M1.500,6 C1,2.500 4,2 8,3 C12,2 16,1.500 16.500,5 C17,9 15.500,11 13,10.500 C10,10 8,9.500 5,11.500 C2.500,13 1.800,9 1.500,6 Z" fill="#eee" stroke="#999" stroke-width=".9"/></svg><span>water</span></div>
<div class="row" style="top:82px;"><svg class="abs" style="left:5px;top:6px" width="10" height="10" viewBox="0 0 10 10"><path d="M.5,1.500 h9 l-4.500,6.500 z" fill="#7a7a7a"/></svg><svg class="abs" style="left:26px;top:0px;overflow:visible" width="18" height="20" viewBox="0 0 18 20"><rect x="1.500" y="4.500" width="12" height="12" rx="2.200" fill="#e2e6ec" stroke="#6e6e6e" stroke-width="1"/><path d="M4.200,10 l3,4.200 l6.800,-12" fill="none" stroke="#111" stroke-width="2.100" stroke-linecap="round" stroke-linejoin="round"/></svg><svg class="abs" style="left:50px;top:2px" width="18" height="16" viewBox="0 0 18 16"><path d="M2,2.500 L6.500,14 L11,3.500 L16,1.500" fill="none" stroke="#777" stroke-width=".9"/><g fill="#fff" stroke="#888" stroke-width=".6"><circle cx="2" cy="2.500" r="1"/><circle cx="6.500" cy="14" r="1"/><circle cx="11" cy="3.500" r="1"/><circle cx="16" cy="1.500" r="1"/></g></svg><span>routes</span></div>
<div class="abs" style="left:45px;top:112px;width:13px;height:1px;background:#f0a030"></div>
<div class="abs" style="left:45px;top:129px;width:4px;height:2px;background:#e0cf96"></div><div class="abs" style="left:52px;top:129px;width:4px;height:2px;background:#e0cf96"></div>
<div class="abs" style="left:45px;top:147px;width:10px;height:2px;background:#dcc88a"></div>
<div class="row" style="top:156px;"><svg class="abs" style="left:6px;top:5px" width="10" height="10" viewBox="0 0 10 10"><path d="M1.500,.5 l6.500,4.500 l-6.500,4.500 z" fill="#8a8a8a"/></svg><svg class="abs" style="left:26px;top:0px;overflow:visible" width="18" height="20" viewBox="0 0 18 20"><rect x="1.500" y="4.500" width="12" height="12" rx="2.200" fill="#e2e6ec" stroke="#6e6e6e" stroke-width="1"/><path d="M4.200,10 l3,4.200 l6.800,-12" fill="none" stroke="#111" stroke-width="2.100" stroke-linecap="round" stroke-linejoin="round"/></svg><svg class="abs" style="left:50px;top:2px" width="18" height="16" viewBox="0 0 18 16"><path d="M2,2.500 L6.500,14 L11,3.500 L16,1.500" fill="none" stroke="#777" stroke-width=".9"/><g fill="#fff" stroke="#888" stroke-width=".6"><circle cx="2" cy="2.500" r="1"/><circle cx="6.500" cy="14" r="1"/><circle cx="11" cy="3.500" r="1"/><circle cx="16" cy="1.500" r="1"/></g></svg><span>rivers</span></div>
<div class="row" style="top:176px;"><svg class="abs" style="left:6px;top:5px" width="10" height="10" viewBox="0 0 10 10"><path d="M1.500,.5 l6.500,4.500 l-6.500,4.500 z" fill="#8a8a8a"/></svg><svg class="abs" style="left:26px;top:0px;overflow:visible" width="18" height="20" viewBox="0 0 18 20"><rect x="1.500" y="4.500" width="12" height="12" rx="2.200" fill="#e2e6ec" stroke="#6e6e6e" stroke-width="1"/><path d="M4.200,10 l3,4.200 l6.800,-12" fill="none" stroke="#111" stroke-width="2.100" stroke-linecap="round" stroke-linejoin="round"/></svg><svg class="abs" style="left:50px;top:2px" width="18" height="16" viewBox="0 0 18 16"><path d="M1.500,6 C1,2.500 4,2 8,3 C12,2 16,1.500 16.500,5 C17,9 15.500,11 13,10.500 C10,10 8,9.500 5,11.500 C2.500,13 1.800,9 1.500,6 Z" fill="#eee" stroke="#999" stroke-width=".9"/></svg><span>school_property</span></div>
<div class="row" style="top:197px;background:#3a72d8;color:#fff;height:21px;"><svg class="abs" style="left:6px;top:5px" width="10" height="10" viewBox="0 0 10 10"><path d="M1.500,.5 l6.500,4.500 l-6.500,4.500 z" fill="#9a9a9a"/></svg><svg class="abs" style="left:26px;top:0px;overflow:visible" width="18" height="20" viewBox="0 0 18 20"><rect x="1.500" y="4.500" width="12" height="12" rx="2.200" fill="#e2e6ec" stroke="#6e6e6e" stroke-width="1"/><path d="M4.200,10 l3,4.200 l6.800,-12" fill="none" stroke="#111" stroke-width="2.100" stroke-linecap="round" stroke-linejoin="round"/></svg><svg class="abs" style="left:52px;top:0px;overflow:visible" width="16" height="20" viewBox="0 0 16 20"><g transform="translate(12.5,1.5) rotate(24)"><rect x="-1.9" y="0" width="3.8" height="11" fill="#f08a3a" stroke="#7a4a20" stroke-width=".5"/><rect x="0.19" y="0" width="1.71" height="11" fill="#d9641c"/><rect x="-1.9" y="-1.6" width="3.8" height="1.8" fill="#eee" stroke="#888" stroke-width=".4"/><path d="M-1.9,11 L0,17 L1.9,11 z" fill="#e8e0d0" stroke="#666" stroke-width=".5"/><path d="M-.9,14.8 L0,17 L.9,14.8 z" fill="#333"/></g></svg><span style="left:79px;text-decoration:underline">landuse</span></div>
<div class="row" style="top:218px;"><svg class="abs" style="left:26px;top:0px;overflow:visible" width="18" height="20" viewBox="0 0 18 20"><rect x="1.500" y="4.500" width="12" height="12" rx="2.200" fill="#f7f7f7" stroke="#6e6e6e" stroke-width="1"/></svg><svg class="abs" style="left:53px;top:2px" width="15" height="15" viewBox="0 0 15 15"><rect x="0" y="0" width="5" height="5" fill="#8a8a8a"/><rect x="5" y="0" width="5" height="5" fill="#c9c9c9"/><rect x="10" y="0" width="5" height="5" fill="#e0e0e0"/><rect x="0" y="5" width="5" height="5" fill="#bcbcbc"/><rect x="5" y="5" width="5" height="5" fill="#777"/><rect x="10" y="5" width="5" height="5" fill="#cfcfcf"/><rect x="0" y="10" width="5" height="5" fill="#999"/><rect x="5" y="10" width="5" height="5" fill="#b0b0b0"/><rect x="10" y="10" width="5" height="5" fill="#fff"/></svg><span>3420C_2010_327_RGB_LATLNG</span></div>
</div>
<div class="abs" style="left:1px;top:990px;width:291px;height:10px;border:1px solid #d9d9d9;border-top:none;border-radius:0 0 4px 4px;background:#e6e6e6"></div>
<div class="abs" style="left:81px;top:990px;width:61px;height:20px;border-radius:4px 0 0 4px;background:linear-gradient(#8a8a8a,#9e9e9e);border:1px solid #6a6a6a;color:#fff;text-align:center;line-height:18px;font-size:13.500px;text-shadow:0 -1px 0 #555">Layers</div>
<div class="abs" style="left:142px;top:990px;width:70px;height:20px;border-radius:0 4px 4px 0;background:linear-gradient(#fff,#f3f3f3);border:1px solid #b5b5b5;border-left:none;text-align:center;line-height:18px;font-size:13.500px">Browser</div>
</div>
<div id="mapwrap"><svg class="abs" style="left:0;top:0" width="1576" height="1010" viewBox="401 166 1576 1010">
<defs><pattern id="lk" width="2.5" height="2.5" patternUnits="userSpaceOnUse"><rect width="2.5" height="2.5" fill="#4f7df0"/><path d="M0,1.25 h2.5 M1.25,0 v2.5" stroke="#a8c4ff" stroke-width=".7"/></pattern><clipPath id="ct"><path d="M891,240 L998,212 L1015,197 L1040,200 L1053,202 L1057,215 L1095,186.5 L1113,194 L1122,206 L1156,225 L1134,246.5 L1110,232 L1075,264 L1108,296 L1085,317 L1012,339 L981,357 L949,374 L925,390 L901.5,410.7 L869,448 L852.8,468.3 L833.6,462.4 L824.8,460.9 L852.8,437.3 L861.7,422.5 L860.2,412.2 L845.4,398.9 L786.4,466.8 L776.1,467.4 L768.7,460.9 L838.9,373.9 L838.9,354.7 L844,347.3 L836.6,328.1 L836.6,320.8 L848.4,313.4 L833.6,297.2 L849.9,280.9 Z"/></clipPath><clipPath id="cr"><path d="M919.7,403.9 L994.4,382.2 L1021.9,384.2 L1039.6,388.1 L1047.5,405.8 L1053.7,422.8 L1048.8,438.6 L1036,442.5 L1028,442.5 L1000.6,432.7 L992.7,449.4 L984.9,466.1 L1002.6,495.6 L1009.4,494.6 L1015.3,506.4 L1005.5,520.2 L982.9,531 L984.9,543.8 L957.3,557.5 L944.5,557.5 L937.7,553.6 L914,552.6 L903.2,540.8 L925.9,507.4 L933.7,489.7 L919,472 L925.9,462.2 L912.1,452.3 L916,418.9 Z"/></clipPath><filter id="sh" x="-5%" y="-30%" width="110%" height="170%"><feDropShadow dx="1" dy="1" stdDeviation=".7" flood-color="#000" flood-opacity=".45"/></filter></defs>
<path d="M880.5,558.5 L941.6,582.1 L957.3,578.2 L985.8,554.6 L1016.3,531 L1036,515.3 L1053.7,497.6 L1063.5,491.7 L1101,489.7 L1144,490.7 L1180,499 L1239.2,512.3 L1255,491.6 L1285.5,513.7 L1298.3,521.6 L1322.9,534.5 L1352.4,544.4 L1359.3,547.7 L1386.8,553 L1397.6,554.6 L1425.2,557.5 L1513.7,560 L1563.8,556.6 L1579.5,562.9 L1586.4,569.3 L1600,582 L1603,586.5 L1607.9,590 L1615.7,593 L1623.6,592 L1635.4,587.6 L1648.2,586 L1666.9,591 L1637.4,615.6 L1627,668 L1692.4,729.9 L1680.6,751 L1646.6,790.3 L1625.6,794.8 L1616.7,817.4 L1616.7,833.2 L1609.8,849.9 L1574,857.3 L1597.6,975.7 L1495.8,998.3 L1469.8,881.3 L1432.4,889.2 L1419.7,904.9 L1426.5,944.2 L1400,962.9 L1391.4,966.8 L1373.7,951.1 L1305.8,974.7 L1290,980.6 L1310.7,947.8 L1212.4,916.7 L1184.9,967.8 L1170.7,963.9 L1160.3,961 L1149.5,955 L1142.6,963.9 L1138.6,959 L1118,950 L1088.5,953 L1076.7,954 L1066.9,953 L1057,950 L1033.4,937.3 L1005,915.7 L1001,905 L998.6,892.2 L1006.5,872.5 L1032,854.8 L1045.8,841 L1029,831.2 L1008.5,818.4 L1002.6,817.4 L953.4,804.6 L932.7,806 L918,812.5 L890.5,811.5 L881.6,798.7 L864.9,803.7 L847.2,803.7 L800,769.7 L714.7,708.3 L750,666 L767,647 L775,637.8 L788.8,633.4 L806,614.7 L827.2,612.2 L850.9,611.7 L856.8,597.9 Z" fill="#dcf6ca"/>
<path d="M806,527.4 L827.2,538.2 L818.3,567.3 L807.5,593 L801.6,597.9 L784.8,592 L781.9,585.1 L792.7,545.6 Z" fill="#dcf6ca"/>
<path d="M1046,469 L1071.5,470 L1070.5,480 L1046.5,479 Z" fill="#dcf6ca"/>
<path d="M1124.2,278 L1129.7,278 L1129.1,288.8 L1124.2,287.8 Z" fill="#dcf6ca"/>
<path d="M891,240 L998,212 L1015,197 L1040,200 L1053,202 L1057,215 L1095,186.5 L1113,194 L1122,206 L1156,225 L1134,246.5 L1110,232 L1075,264 L1108,296 L1085,317 L1012,339 L981,357 L949,374 L925,390 L901.5,410.7 L869,448 L852.8,468.3 L833.6,462.4 L824.8,460.9 L852.8,437.3 L861.7,422.5 L860.2,412.2 L845.4,398.9 L786.4,466.8 L776.1,467.4 L768.7,460.9 L838.9,373.9 L838.9,354.7 L844,347.3 L836.6,328.1 L836.6,320.8 L848.4,313.4 L833.6,297.2 L849.9,280.9 Z" fill="#93c0b6"/>
<path d="M1020.9,312.4 L1035.7,297.7 L1046.5,304.5 L1047.5,311.4 L1037.7,318.3 L1025.9,317.3 Z" fill="#dcf6ca"/>
<path d="M1007.2,288.8 L1023.9,287.8 L1019,295.7 L1010.1,293.7 Z" fill="#d0a8f0"/>
<path d="M971.8,321.3 L984.6,309.5 L996.4,319.3 L992.4,323.2 L983.6,315.4 L975.7,324.2 Z" fill="#d0a8f0"/>
<path d="M967.8,324.2 L982.6,334 L979.6,337 L965.9,328.1 Z" fill="#d0a8f0"/>
<path d="M959,331.1 L965.9,333.1 L964.9,339 L976.7,338 L977.7,341.9 L965.9,351.7 L962.9,347.8 L969.8,342.9 L958,341.9 Z" fill="#d0a8f0"/>
<path d="M984.6,327.2 L992.4,320.3 L994.4,323.2 L986.5,331.1 Z" fill="#d0a8f0"/>
<path d="M919.7,403.9 L994.4,382.2 L1021.9,384.2 L1039.6,388.1 L1047.5,405.8 L1053.7,422.8 L1048.8,438.6 L1036,442.5 L1028,442.5 L1000.6,432.7 L992.7,449.4 L984.9,466.1 L1002.6,495.6 L1009.4,494.6 L1015.3,506.4 L1005.5,520.2 L982.9,531 L984.9,543.8 L957.3,557.5 L944.5,557.5 L937.7,553.6 L914,552.6 L903.2,540.8 L925.9,507.4 L933.7,489.7 L919,472 L925.9,462.2 L912.1,452.3 L916,418.9 Z" fill="#e2eef3"/>
<path d="M1582.5,166.5 L1789.8,166.5 L1799.2,176.3 L1808.5,183.3 L1829.4,190.3 L1836.4,194.9 L1836.4,199.6 L1829.4,210.1 L1834.1,220.6 L1827.1,236.9 L1829.4,253.2 L1820.1,271.8 L1815.5,290.5 L1792.2,309.1 L1789.8,318.4 L1788.7,281.1 L1787.5,276.5 L1740.9,287 L1745.6,297.4 L1743.2,311.4 L1736.3,323.1 L1722.3,348.7 L1720,358 L1700.2,370.8 L1694.3,377.8 L1685,368.5 L1661.7,370.8 L1643.1,374.3 L1629.1,369.7 L1619.8,360.3 L1597.6,360.3 L1580.2,348.7 L1549.9,332.4 L1524.3,318.4 L1505.6,299.8 L1510.3,294 L1530.1,296.3 L1560.4,298.6 L1577.8,302.1 L1580.2,281.1 L1582.5,268.3 L1646.6,264.8 L1652.4,206.6 L1655.9,198.4 L1643.1,199.6 L1622.1,205.4 L1596.5,189.1 L1582.5,181 Z" fill="#dcf6ca"/>
<path d="M1795.7,323.1 L1827.6,289.3 L1810.8,337.1 L1799.6,369.7 Z" fill="#dcf6ca"/>
<path d="M1797.8,367.3 L1800.6,367.3 L1801.5,447.7 L1798.7,447.7 Z" fill="#dcf6ca"/>
<path d="M1642.6,331.9 L1688.5,344 L1686.6,365.5 L1632.6,362.2 Z" fill="#ffffff"/>
<path d="M1695.5,291.6 L1730.4,295.6 L1734.6,309.1 L1726.9,323.1 L1713,339.4 L1696.7,358 L1690.8,362.7 Z" fill="#ffffff"/>
<path d="M1697.8,215.9 L1710.6,220.6 L1703.6,227.6 L1696.7,221 Z" fill="#ffffff"/>
<path d="M1673.4,182.1 L1673.8,198.4 M1780.5,196.1 L1829.4,208.2 M1793.3,243.9 L1822.5,229.4 M1601.1,183.3 L1620.9,192.6 M1766.5,215.4 L1789.8,215.9" fill="none" stroke="#fff" stroke-width="1"/>
<path d="M400,204.2 C402,207.7 406.4,217 411.8,224.9 C417.2,232.8 422.1,244.6 432.4,251.4 C442.8,258.3 459.5,261.3 473.7,266.2 C488,271.1 502.8,277 518,280.9 C533.2,284.9 548.5,287.6 565.2,289.8 C581.9,292 605.5,291.8 618.3,294.2 C631.1,296.7 636,300.1 641.9,304.5 C647.8,309 652,315.4 653.7,320.8 C655.4,326.2 650.2,330.8 652.2,337 C654.2,343.1 661.8,350.8 665.5,357.6 C669.2,364.5 672.4,370.4 674.3,378.3 C676.3,386.2 674.3,396 677.3,404.8 C680.2,413.7 686.1,422.5 692,431.4 C697.9,440.2 706.3,452.5 712.7,457.9 C719.1,463.3 726.9,459.9 730.4,463.8 C733.8,467.8 731.9,476.4 733.3,481.5 C734.8,486.7 735.3,492.6 739.2,494.8 C743.2,497 752,493.1 756.9,494.8 C761.8,496.5 767.3,500.5 768.7,505.1 C770.2,509.8 765,517 765.8,522.8 C766.5,528.6 771.9,537.1 773.2,539.9 M736.3,165.9 C734.8,169.3 728.2,179.7 727.4,186.5 C726.7,193.4 730.1,202.5 731.9,207.2 C733.6,211.9 737.3,211.9 737.8,214.6 C738.2,217.3 733.6,219.7 734.8,223.4 C736,227.1 743.9,232 745.1,236.7 C746.4,241.4 744.4,246 742.2,251.4 C740,256.9 734.1,263.7 731.9,269.1 C729.6,274.6 730.6,279 728.9,283.9 C727.2,288.8 723.5,292.7 721.5,298.6 C719.6,304.5 718.6,312.9 717.1,319.3 C715.6,325.7 715.4,331.1 712.7,337 C710,342.9 702.6,346.8 700.9,354.7 C699.2,362.6 701.4,374.8 702.4,384.2 C703.3,393.5 704.3,404.8 706.8,410.7 C709.2,416.6 714.4,414.2 717.1,419.6 C719.8,425 720.8,435.8 723,443.2 C725.2,450.6 729.2,460.4 730.4,463.8 M773.2,539.9 C777.3,535.6 793.6,521.3 798.2,514 C802.9,506.7 799.7,501.7 801.2,496.3 C802.7,490.9 805.1,487.9 807.1,481.5 C809,475.1 810,462.6 813,457.9 C815.9,453.3 820.4,456 824.8,453.5 C829.2,451.1 836.6,446.4 839.5,443.2 C842.5,440 839,438.8 842.5,434.3 C845.9,429.9 855.8,421.6 860.2,416.6 C864.6,411.7 864.6,408.3 869,404.8 C873.5,401.4 882.3,399.4 886.7,396 C891.2,392.5 890.2,388.1 895.6,384.2 C901,380.3 911.8,378.3 919.2,372.4 C926.5,366.5 932.9,356.7 939.8,348.8 C946.7,340.9 954.1,332.1 960.5,325.2 C966.9,318.3 971.6,312.9 978.2,307.5 C984.8,302.1 996.4,295.2 1000,292.7 M1004.2,166.9 C1006.9,170 1016,180.8 1020,185.6 C1023.9,190.3 1024.9,191.1 1027.8,195.4 C1030.8,199.7 1034.7,207.2 1037.7,211.1 C1040.6,215.1 1043.6,215.7 1045.5,219 C1047.5,222.3 1051.1,226.9 1049.5,230.8 C1047.8,234.7 1040.3,238.7 1035.7,242.6 C1031.1,246.5 1025.9,250.8 1021.9,254.4 C1018,258 1016.7,258.7 1012.1,264.2 C1007.5,269.8 998.7,282.3 994.4,287.8 C990.1,293.4 991.4,292.7 986.5,297.7 C981.6,302.6 970.5,311.1 964.9,317.3 C959.3,323.6 957.4,329.1 953.1,335 C948.8,340.9 943.9,347.2 939.3,352.7 C934.7,358.3 930.2,363.9 925.6,368.5 C921,373 916.1,377.6 911.8,380.3 C907.5,382.9 902,383.5 900,384.2 M1086.8,166.9 C1086.5,168.4 1084.5,172.9 1084.9,175.7 C1085.2,178.5 1090.1,180.6 1088.8,183.6 C1087.5,186.5 1079.6,190.5 1077,193.4 C1074.4,196.4 1073.4,198.3 1073.1,201.3 C1072.7,204.2 1076.7,208.5 1075,211.1 C1073.4,213.8 1067.5,214.7 1063.2,217 C1059,219.3 1051.8,223.6 1049.5,224.9 M1263.8,165.9 C1264.1,167.2 1262.2,170.2 1265.8,173.8 C1269.4,177.4 1281.5,183.3 1285.4,187.5 C1289.4,191.8 1287,195.4 1289.4,199.3 C1291.8,203.3 1298.2,209.2 1300,211.1 M708.8,666.3 C709.1,663.4 708.4,653.2 710.7,649 C713,644.8 719.2,644.1 722.5,641.1 C725.8,638.2 729.4,635.2 730.4,631.3 C731.4,627.4 727.4,621.8 728.4,617.5 C729.4,613.3 734.3,610.3 736.3,605.7 C738.2,601.1 737.3,593.6 740.2,590 C743.2,586.4 750.4,586.7 754,584.1 C757.6,581.5 758.9,579.8 761.8,574.3 C764.8,568.7 769.9,556.6 771.7,550.7 C773.5,544.8 770.4,542.5 772.7,538.9 C775,535.3 781.4,533.6 785.4,529 C789.5,524.4 794.8,516.6 797.2,511.3 C799.7,506.1 799.5,499.9 800,497.6 M1359,166.9 C1357,168.2 1348.8,167.4 1347.2,174.7 C1345.6,182.1 1346.9,202.8 1349.2,211.1 C1351.5,219.5 1358.8,220.6 1361,224.9 C1363.1,229.2 1361.8,234.7 1361.9,236.7 M1300,213.1 C1301.6,214.4 1304.3,219 1309.8,221 C1315.4,222.9 1323.9,221.1 1333.4,224.9 C1342.9,228.7 1359.3,240.1 1366.9,243.6 C1374.4,247 1373.7,246.4 1378.7,245.5 C1383.6,244.7 1391.1,239.3 1396.4,238.7 C1401.6,238 1404.9,239.3 1410.1,241.6 C1415.4,243.9 1420.6,249.5 1427.8,252.4 C1435,255.4 1446.5,257.5 1453.4,259.3 C1460.3,261.1 1464.4,261.8 1469.1,263.2 C1473.9,264.7 1479.8,267.3 1481.9,268.2 M1491.7,221 C1490.6,223.3 1486.7,229.2 1484.9,234.7 C1483.1,240.3 1481.3,248.2 1480.9,254.4 C1480.6,260.6 1481.6,266.9 1482.9,272.1 C1484.2,277.3 1486.8,281.3 1488.8,285.9 C1490.8,290.4 1490.8,294.7 1494.7,299.6 C1498.6,304.5 1507.1,309.1 1512.4,315.4 C1517.6,321.6 1521.9,330.8 1526.2,337 C1530.4,343.2 1535.7,348.1 1538,352.7 C1540.2,357.3 1536,360.3 1539.9,364.5 C1543.9,368.8 1556.3,374 1561.6,378.3 C1566.8,382.5 1564.8,386.5 1571.4,390.1 C1577.9,393.7 1592.4,396.1 1600.9,399.9 C1609.4,403.8 1618.9,411.1 1622.5,413.3 M1625.6,413 C1627.9,415.3 1633.8,423.8 1639.3,426.8 C1644.9,429.7 1653.1,427.7 1659,430.7 C1664.9,433.6 1669.2,440.5 1674.7,444.5 C1680.3,448.4 1686.5,451.7 1692.4,454.3 C1698.3,456.9 1704.6,457.9 1710.1,460.2 C1715.7,462.5 1720,466.4 1725.9,468.1 C1731.8,469.7 1739,468.4 1745.5,470 C1752.1,471.7 1759.6,477.4 1765.2,477.9 C1770.8,478.4 1774.9,473.8 1779,473 C1783.1,472.2 1788,473 1789.8,473 M1790.4,413 L1790.4,666.3 M1790.4,666 C1790.4,679.1 1790.6,730.2 1790.4,744.7 C1790.2,759.1 1789.4,751.2 1789.2,752.5 M1786.3,339.4 C1786.9,342.1 1789.1,344.8 1789.8,355.7 C1790.6,366.6 1790.8,394.9 1791,404.6 C1791.2,414.3 1791,412.4 1791,413.9 M1790.4,909.8 C1789.4,910.8 1786.9,914.5 1784.5,915.7 C1782,917 1779.7,917.1 1775.6,917.3 C1771.5,917.5 1763.7,916.4 1759.9,916.7 C1756.1,917 1756.8,915.4 1753,919.3 C1749.2,923.1 1739.9,936.3 1737.3,939.7 M400,727.9 C402.3,730.7 408.8,738.1 413.8,744.7 C418.7,751.2 422,760.4 429.5,767.3 C437,774.2 445.9,779.9 459,786 C472.1,792 493.4,798.4 508.2,803.7 C522.9,808.9 537.7,814.5 547.5,817.4 C557.3,820.4 561.6,820.7 567.2,821.4 C572.7,822 576.3,822 580.9,821.4 C585.5,820.7 592.1,820.4 594.7,817.4 C597.3,814.5 596.7,809.2 596.7,803.7 C596.7,798.1 597,790.5 594.7,784 C592.4,777.4 585.8,773.2 582.9,764.3 C579.9,755.5 576.7,737.8 577,730.9 C577.3,724 579.9,724.5 584.9,723 C589.8,721.6 599.9,722.9 606.5,722 C613,721.2 617.6,718 624.2,718.1 C630.7,718.3 637.3,720.2 645.8,723 C654.3,725.8 667.1,737.5 675.3,734.8 C683.5,732.2 689.1,712.7 695,707.3 C700.9,701.9 707.8,706 710.7,702.4 C713.7,698.8 712.8,691.7 712.7,685.7 C712.5,679.6 710.2,669.3 709.7,666 M506.2,808.6 C507,806.9 502.6,797.3 511.1,798.7 C519.6,800.2 547.3,813.3 557.3,817.4 C567.3,821.5 566.5,822.3 571.1,823.3 C575.7,824.3 580.3,824.1 584.9,823.3 C589.4,822.5 595.7,821.7 598.6,818.4 C601.6,815.1 602.2,809.1 602.6,803.7 C602.9,798.3 602.9,792.5 600.6,786 C598.3,779.4 591.7,773.2 588.8,764.3 C585.8,755.5 582.9,739.1 582.9,732.9 C582.9,726.6 584.9,728.3 588.8,727 C592.7,725.7 600.3,725.7 606.5,725 C612.7,724.3 614.7,720.2 626.2,723 C637.6,725.8 665.8,737.8 675.3,741.7 C684.8,745.6 681.2,740.9 683.2,746.6 C685.2,752.4 687.8,765.3 687.1,776.1 C686.5,786.9 682.9,800.4 679.3,811.5 C675.6,822.7 668.6,834.5 665.5,843 C662.4,851.5 660.6,856.4 660.6,862.7 C660.6,868.9 663,874.8 665.5,880.4 C667.9,885.9 668.4,890.8 675.3,896.1 C682.2,901.3 697,908.2 706.8,911.8 C716.6,915.4 724.8,918 734.3,917.7 C743.8,917.4 752.9,914.8 763.8,909.9 C774.8,904.9 794,891.8 800,888.2 M506.2,808.6 C514.1,810.7 544.9,818.7 553.4,821.4 C561.9,824 553.4,823.3 557.3,824.3 C561.3,825.3 570.8,827.4 577,827.3 C583.2,827.1 590.1,825.6 594.7,823.3 C599.3,821 602.6,819.4 604.5,813.5 C606.5,807.6 608.5,796.8 606.5,787.9 C604.5,779.1 595.8,769.2 592.7,760.4 C589.6,751.5 586.8,740.4 587.8,734.8 C588.8,729.3 592.2,728.4 598.6,727 C605,725.5 613.7,723 626.2,726 C638.6,728.9 665.5,741.5 673.4,744.7 M800,884.3 C806.6,879.4 830.8,862.3 839.3,854.8 C847.9,847.3 848.2,845.6 851.1,839.1 C854.1,832.5 856,823.3 857,815.5 C858,807.6 855.4,799.1 857,791.9 C858.7,784.6 863.3,776.6 866.9,772.2 C870.5,767.8 875.4,765.6 878.7,765.3 C881.9,765 883.3,765.8 886.5,770.2 C889.8,774.7 892.4,786.9 898.3,791.9 C904.2,796.8 911.4,798.9 921.9,799.7 C932.4,800.5 948.8,796.1 961.3,796.8 C973.7,797.4 985.5,801.2 996.7,803.7 C1007.8,806.1 1019.6,808.2 1028.1,811.5 C1036.6,814.8 1044.3,819.4 1047.8,823.3 C1051.2,827.3 1052.4,829.9 1048.8,835.1 C1045.2,840.4 1033.2,847.9 1026.2,854.8 C1019.1,861.7 1010.4,869.2 1006.5,876.4 C1002.6,883.6 1002.2,891.5 1002.6,898.1 C1002.9,904.6 1006.2,912.2 1008.5,915.8 C1010.8,919.3 1015,918.7 1016.3,919.3 M847.2,809.6 C847.5,806.6 846.5,798.7 849.2,791.9 C851.8,785 858,773.3 862.9,768.3 C867.8,763.2 874.4,761.7 878.7,761.4 C882.9,761.1 885.2,763.2 888.5,766.3 C891.8,769.4 892.8,775.5 898.3,780.1 C903.9,784.6 912.7,791.9 921.9,793.8 C931.1,795.8 940.9,791.2 953.4,791.9 C965.8,792.5 984.5,795.5 996.7,797.8 C1008.8,800.1 1018,802.7 1026.2,805.6 C1034.3,808.6 1041.6,811.9 1045.8,815.5 C1050.1,819.1 1051.7,823 1051.7,827.3 C1051.7,831.5 1051.7,835.1 1045.8,841 C1039.9,846.9 1023.9,855.8 1016.3,862.7 C1008.8,869.5 1003.9,875.8 1000.6,882.3 C997.3,888.9 996,895.8 996.7,902 C997.3,908.2 1003.2,916.4 1004.5,919.3 M859,803.7 C860.3,800.4 863.6,789.1 866.9,784 C870.1,778.9 875.7,773.8 878.7,773.2 C881.6,772.5 881.3,775 884.6,780.1 C887.8,785.1 894.1,799.2 898.3,803.7 C902.6,808.1 903.6,807.3 910.1,806.6 C916.7,806 928.2,800.9 937.7,799.7 C947.2,798.6 957.3,798.4 967.2,799.7 C977,801 986.8,805 996.7,807.6 C1006.5,810.2 1018.3,812.5 1026.2,815.5 C1034,818.4 1040.9,821.4 1043.9,825.3 C1046.8,829.2 1043.9,836.8 1043.9,839.1 M937.7,791.9 C941.6,791.5 948.1,788.3 961.3,789.9 C974.4,791.5 1000.6,797.8 1016.3,801.7 C1032.1,805.6 1048.1,810.2 1055.7,813.5 C1063.2,816.8 1060.6,818.7 1061.6,821.4 C1062.5,824 1060.9,827.3 1061.6,829.2 C1062.2,831.2 1066.5,831.5 1065.5,833.2 C1064.5,834.8 1058.9,837.4 1055.7,839.1 C1052.4,840.7 1047.5,842.3 1045.8,843 M1000,916.7 C1001,917.4 1000.7,917.4 1005.9,920.6 C1011.1,923.9 1023.3,932.4 1031.5,936.4 C1039.7,940.3 1039.3,942.9 1055.1,944.2 C1070.8,945.5 1114.1,944.2 1125.9,944.2 M1003.9,897 C1004.6,899.7 1005.2,908.8 1007.9,912.8 C1010.5,916.7 1014.7,917.4 1019.7,920.6 C1024.6,923.9 1031.1,928.7 1037.4,932.4 C1043.6,936.2 1043.3,941.5 1057,943.2 C1070.8,944.9 1109.5,942.8 1120,942.7" fill="none" stroke="#a3cbf5" stroke-width="1.1"/>
<path d="M714.7,708.3 L800,769.7 L847.2,804.6 L850.7,809.6 L850.1,823.3 L846.2,837.1 L800,875.5 L734.3,908.9 L718.6,904.9 L681.2,890.2 L671.4,880.4 L667.4,862.7 L675.3,833.2 L687.1,807.6 L693,784 L689.1,762.4 L677.3,743.7 Z" fill="#ffff00" stroke="#222" stroke-width="1"/>
<path d="M683.2,742.7 C684.2,743.7 687.1,743.7 689.1,748.6 C691.1,753.5 693.3,766.3 695,772.2 C696.6,778.1 699.6,778.1 698.9,784 C698.3,789.9 694.7,798.4 691.1,807.6 C687.4,816.8 680.2,829.9 677.3,839.1 C674.3,848.2 673.7,855.4 673.4,862.7 C673,869.9 673.4,877.4 675.3,882.3 C677.3,887.2 678.6,888.9 685.2,892.2 C691.7,895.4 706.5,900.2 714.7,902 C722.8,903.8 726.1,904.3 734.3,903 C742.5,901.7 752.9,899.2 763.8,894.1 C774.8,889 794,876.1 800,872.5 C806,868.9 794.1,876.8 800,872.5 C805.9,868.2 827.5,853.2 835.4,846.9 C843.3,840.7 844.9,841.4 847.2,835.1 C849.5,828.9 848.8,813.8 849.2,809.6" fill="none" stroke="#b5cfd0" stroke-width="1.1"/>
<path d="M1655.9,197.3 C1656.8,196.3 1657.3,194.9 1661.7,196.1 C1666.1,197.3 1671.3,200.5 1678,203.1 C1684.8,205.7 1693.9,205.2 1695.5,208.9 C1697.1,212.6 1692.2,219.4 1686.2,221.7 C1680.1,224.1 1669.6,222.9 1665.2,220.6 C1660.8,218.2 1665.7,214 1664,210.1 C1662.4,206.1 1658.7,203.3 1657.1,200.8 C1655.4,198.2 1655,198.2 1655.9,197.3 Z" fill="url(#lk)" stroke="#1a2f6a" stroke-width=".9"/>
<path d="M1572,275.3 C1573,274.2 1575.9,271.4 1577.8,270.7 C1579.8,270 1580.9,270.4 1581.8,271.8 C1582.7,273.2 1584.2,276.7 1582.5,277.6 C1580.8,278.6 1575.3,276.9 1573.2,276.5 C1571.1,276 1571.1,276.5 1572,275.3 Z" fill="url(#lk)" stroke="#1a2f6a" stroke-width=".9"/>
<path d="M1579,294 C1579.5,292.1 1579.9,298.4 1582.5,300.9 C1585.1,303.5 1592.3,304.9 1591.8,306.8 C1591.4,308.6 1582.7,312.8 1580.2,310.3 C1577.6,307.7 1578.5,295.8 1579,294 Z" fill="url(#lk)" stroke="#1a2f6a" stroke-width=".9"/>
<path d="M1576.7,348.7 C1575.5,345.7 1583.4,346.8 1586,344 C1588.6,341.2 1587.4,334.3 1589.5,334.7 C1591.6,335.2 1594.9,341.5 1596.5,346.4 C1598.1,351.3 1598.6,356.6 1597.6,359.2 C1596.7,361.7 1596,361.3 1591.8,359.2 C1587.6,357.1 1577.8,351.7 1576.7,348.7 Z" fill="url(#lk)" stroke="#1a2f6a" stroke-width=".9"/>
<path d="M1753,191.5 C1753.7,190.3 1755.7,188.9 1757.2,189.1 C1758.8,189.4 1760.7,191.2 1760.7,192.6 C1760.7,194 1758.6,195.6 1757.2,196.1 C1755.8,196.6 1754.6,195.9 1753.7,194.9 C1752.9,194 1752.3,192.6 1753,191.5 Z" fill="url(#lk)" stroke="#1a2f6a" stroke-width=".9"/>
<path d="M1668.7,407.4 C1667.8,405.9 1672.4,407.7 1678,408.8 C1683.6,409.9 1693.2,411.3 1696.7,412.8 C1700.2,414.3 1698.3,415.6 1695.5,416.3 C1692.7,417 1688,418 1682.7,416.3 C1677.3,414.5 1669.6,408.9 1668.7,407.4 Z" fill="url(#lk)" stroke="#1a2f6a" stroke-width=".9"/>
<path d="M1740.5,426.7 C1740.2,425.4 1743.2,426.7 1744.4,427.9 C1745.7,429.1 1744.6,432.1 1746.7,432.6 C1748.8,433 1751.9,431.2 1754.9,430.2 C1757.9,429.3 1760.3,427.4 1761.9,427.9 C1763.5,428.4 1764.4,431.2 1763.1,432.6 C1761.7,434 1758.4,434.5 1754.9,434.9 C1751.4,435.3 1748.5,436.1 1745.6,434.4 C1742.7,432.8 1740.7,428 1740.5,426.7 Z" fill="url(#lk)" stroke="#1a2f6a" stroke-width=".9"/>
<path d="M1424.9,320.3 C1426.5,318.6 1430.6,316.1 1435.7,313.4 C1440.8,310.6 1446.5,305.7 1450.4,306.5 C1454.4,307.3 1457.5,314 1455.4,317.3 C1453.2,320.7 1445.1,322.4 1439.6,323.2 C1434.1,324.1 1430.8,322.2 1427.8,321.7 C1424.9,321.1 1423.3,321.9 1424.9,320.3 Z" fill="url(#lk)" stroke="#1a2f6a" stroke-width=".9"/>
<path d="M1227.4,169.8 C1227.8,168.5 1232.4,166.1 1234.3,166.9 C1236.3,167.7 1237.7,172.5 1237.3,173.8 C1236.9,175.1 1234.3,174.2 1232.4,173.4 C1230.4,172.6 1227,171.1 1227.4,169.8 Z" fill="url(#lk)" stroke="#1a2f6a" stroke-width=".9"/>
<path d="M1241.2,301.6 C1240.8,297.1 1242.8,286.1 1244.1,282.9 C1245.5,279.8 1246.3,281.9 1248.1,285.9 C1249.9,289.8 1253.4,298.7 1253,302.6 C1252.6,306.4 1248.5,305.3 1246.1,305.1 C1243.8,304.9 1241.6,306 1241.2,301.6 Z" fill="url(#lk)" stroke="#1a2f6a" stroke-width=".9"/>
<path d="M1119.3,192.4 C1119.7,190.7 1121.6,189.7 1123.2,189.5 C1124.8,189.3 1126.5,189.9 1127.1,191.5 C1127.7,193 1127.3,196 1126.2,197.4 C1125,198.7 1122.6,199.3 1121.2,198.3 C1119.9,197.4 1118.9,194.2 1119.3,192.4 Z" fill="url(#lk)" stroke="#1a2f6a" stroke-width=".9"/>
<path d="M1699.3,466.1 C1700.7,466.5 1704.4,468.9 1705.2,470 C1706,471.2 1704.6,472.4 1703.2,472 C1701.9,471.6 1699.1,469.2 1698.3,468.1 C1697.5,466.9 1697.9,465.7 1699.3,466.1 Z" fill="url(#lk)" stroke="#1a2f6a" stroke-width=".9"/>
<path d="M1739.6,478.9 C1740.4,478.1 1742.2,476.9 1742.6,477.9 C1743,478.9 1742.4,483 1741.6,483.8 C1740.8,484.6 1739,482.8 1738.6,481.8 C1738.2,480.8 1738.8,479.7 1739.6,478.9 Z" fill="url(#lk)" stroke="#1a2f6a" stroke-width=".9"/>
<path d="M1771.1,491.7 C1772.2,491.3 1775.4,491.9 1776,492.6 C1776.6,493.4 1775.1,495.2 1774,495.6 C1773,496 1771.3,495.4 1770.7,494.6 C1770.1,493.8 1770,492.1 1771.1,491.7 Z" fill="url(#lk)" stroke="#1a2f6a" stroke-width=".9"/>
<path d="M1691.4,504.4 C1692.5,503.7 1695,502.5 1696.4,503.5 C1697.7,504.4 1698.5,507.8 1698.3,509.4 C1698.1,510.9 1696.9,511.7 1695.4,511.3 C1693.9,510.9 1691.6,508.8 1690.9,507.4 C1690.1,506 1690.3,505.2 1691.4,504.4 Z" fill="url(#lk)" stroke="#1a2f6a" stroke-width=".9"/>
<path d="M843.3,631.3 C845.4,631 854.3,629.2 859,629.3 C863.7,629.5 873.9,631.5 878.7,632.3 C883.4,633.1 890.2,636.1 894.4,635.2 C898.6,634.3 904.4,628.8 910.1,625.4 C915.9,622 932.9,613.1 937.7,609.7 C942.4,606.2 944,602.7 945.5,599.8 C947.1,596.9 947.1,591.2 949.5,588 C951.8,584.9 958.4,580.7 963.2,576.2 C968.1,571.8 978.8,560.6 985.8,554.6 C992.9,548.6 1009.6,536.2 1016.3,531 C1023,525.7 1031,519.7 1036,515.3 C1041,510.8 1050,500.7 1053.7,497.6 C1057.4,494.4 1057.2,492.7 1063.5,491.7 C1069.8,490.6 1095.9,490 1100.9,489.7" fill="none" stroke="#f0a848" stroke-width=".8"/>
<path d="M843.3,631.3 C845.4,631 854.3,629.2 859,629.3 C863.7,629.5 873.9,631.5 878.7,632.3 C883.4,633.1 890.2,636.1 894.4,635.2 C898.6,634.3 904.4,628.8 910.1,625.4 C915.9,622 932.9,613.1 937.7,609.7 C942.4,606.2 944,602.7 945.5,599.8 C947.1,596.9 947.1,591.2 949.5,588 C951.8,584.9 958.4,580.7 963.2,576.2 C968.1,571.8 978.8,560.6 985.8,554.6 C992.9,548.6 1009.6,536.2 1016.3,531 C1023,525.7 1031,519.7 1036,515.3 C1041,510.8 1050,500.7 1053.7,497.6 C1057.4,494.4 1057.2,492.7 1063.5,491.7 C1069.8,490.6 1095.9,490 1100.9,489.7" fill="none" stroke="#dcc79a" stroke-width="1.8" stroke-dasharray="4 2"/>
<path d="M963.2,666.3 C965.1,664.2 972.5,655.4 977,651 C981.4,646.5 989.8,638.4 996.7,633.3 C1003.5,628.1 1022.1,613.9 1028.1,612.6 C1034.2,611.3 1038.2,621.5 1041.9,623.4 C1045.6,625.4 1049.9,625.8 1055.7,627.4 C1061.4,628.9 1077.8,632.3 1085.2,635.2 C1092.5,638.1 1106.8,646.1 1110.7,649 C1114.7,651.9 1113.6,654.5 1114.7,656.9 C1115.7,659.2 1118.1,665 1118.6,666.3" fill="none" stroke="#f0a848" stroke-width=".8"/>
<path d="M963.2,666.3 C965.1,664.2 972.5,655.4 977,651 C981.4,646.5 989.8,638.4 996.7,633.3 C1003.5,628.1 1022.1,613.9 1028.1,612.6 C1034.2,611.3 1038.2,621.5 1041.9,623.4 C1045.6,625.4 1049.9,625.8 1055.7,627.4 C1061.4,628.9 1077.8,632.3 1085.2,635.2 C1092.5,638.1 1106.8,646.1 1110.7,649 C1114.7,651.9 1113.6,654.5 1114.7,656.9 C1115.7,659.2 1118.1,665 1118.6,666.3" fill="none" stroke="#dcc79a" stroke-width="2.6" stroke-dasharray="5 1.5"/>
<path d="M965.2,666 C962.6,668.6 951.6,678.8 945.5,685.7 C939.5,692.5 923.4,712.9 920,717.1" fill="none" stroke="#f0a848" stroke-width=".8"/>
<path d="M965.2,666 C962.6,668.6 951.6,678.8 945.5,685.7 C939.5,692.5 923.4,712.9 920,717.1" fill="none" stroke="#dcc79a" stroke-width="2.6" stroke-dasharray="5 1.5"/>
<path d="M843,631.9 C845,631.5 853.2,628.9 857.8,629 C862.4,629 872.9,631.7 877.5,632.4 C882.1,633.1 889.3,634.3 892.3,634.4 C895.3,634.5 899,633.5 900,633.4" fill="none" stroke="#f0a848" stroke-width=".8"/>
<path d="M843,631.9 C845,631.5 853.2,628.9 857.8,629 C862.4,629 872.9,631.7 877.5,632.4 C882.1,633.1 889.3,634.3 892.3,634.4 C895.3,634.5 899,633.5 900,633.4" fill="none" stroke="#dcc79a" stroke-width="1.8" stroke-dasharray="4 2"/>
<g clip-path="url(#ct)"><defs><path id="rd1" d="M893.8,240.6 L933.4,211.8 M762.4,349.8 L856.8,281.2 M829.2,330 L845.9,317.8 M700.2,436.1 L893.2,295.8 M1003.1,216 L1017.6,205.5 M830.3,352.2 L924.9,283.4 M936.3,275.1 L992.1,234.6 M1008.2,222.9 L1090.8,162.9 M837.6,362.3 L1015.5,233.1 M893.7,332 L910.6,319.7 M937.2,300.4 L948.6,292.1 M962.5,282 L1130.5,160 M821,399.6 L929.7,320.7 M944.3,310.1 L1055.8,229 M1067.1,220.8 L1137.5,169.7 M837.4,398.8 L864.7,378.9 M881.5,366.8 L1016.7,268.5 M1032.8,256.8 L1086.2,218.1 M1100.6,207.6 L1142.8,176.9 M928.9,344.8 L940.9,336.1 M955.5,325.5 L966.9,317.2 M980.8,307.1 L1022.7,276.7 M1053.2,254.5 L1148.7,185.1 M743.6,495.8 L797.8,456.4 M878.5,397.8 L919.7,367.9 M948.7,346.8 L1074.8,255.2 M1086.1,247 L1156.5,195.8 M802.8,463.2 L1119.3,233.3 M1134.1,222.5 L1161.5,202.6 M930.8,383.2 L959.8,362.1 M974.4,351.5 L1111,252.3 M1125.5,241.8 L1167.7,211.1 M1021.6,333.2 L1038.6,320.9 M1049.2,313.2 L1147.9,241.5 M1027.6,341.4 L1085.7,299.2 M1099.5,289.2 L1181.2,229.8 M1018.4,358.8 L1076.3,316.7 M1090.8,306.2 L1129.7,277.9 M732,308 L811.6,417.5 M836.5,451.7 L862.5,487.6 M796.6,366 L826.3,406.9 M820.1,375 L832.1,391.6 M794,302.3 L887.4,430.7 M840.1,345 L847.5,355.2 M852.4,362 L878.5,397.8 M825.7,290 L876.2,359.5 M887.4,374.9 L906.3,401 M834.8,272.7 L860.1,307.5 M866,315.6 L871,322.6 M878.4,332.7 L901.6,364.7 M909.4,375.4 L939.1,416.4 M845.1,265.2 L881.4,315.1 M888.7,325.2 L930.8,383.2 M880,277.6 L917.7,329.4 M936.6,355.6 L973.8,406.8 M855.3,218.4 L885.7,260.2 M892,268.9 L934.9,327.9 M940.9,336.1 L948.7,346.8 M953.6,353.6 L978.4,387.8 M924.9,283.4 L949.6,317.3 M955.5,325.5 L993.1,377.2 M936.3,275.1 L943.7,285.3 M961,309 L966.9,317.2 M974.7,327.9 L993.4,353.7 M925.7,231.2 L969.6,291.7 M974.9,298.9 L993.5,324.6 M999.7,333.1 L1018.4,358.8 M995.1,296.7 L1007.8,314.2 M1014,322.7 L1032.7,348.4 M970.6,227.3 L1019.8,295.1 M981.2,219.5 L999.5,244.7 M1004.4,251.5 L1011.5,261.3 M1022.7,276.7 L1049.2,313.2 M997.2,207.9 L1008.2,222.9 M1015.5,233.1 L1027.5,249.6 M1032.8,256.8 L1057.7,291 M1065.3,301.5 L1071.2,309.7 M1017.6,205.5 L1035,229.4 M1042,239.1 L1053.2,254.5 M1061,265.2 L1090.8,306.2 M1031.4,195.4 L1112,306.4 M1060.1,211.1 L1123.3,298.2 M1073.8,201.1 L1111,252.3 M1095.4,200.3 L1106.6,215.7 M1114.3,226.4 L1133.1,252.2 M1121.4,205 L1134.1,222.5 M1140.3,231 L1153.8,249.7 M1151.3,223 L1158.9,233.5 M769.6,458.8 L805,420 L839.4,386.6 L860,365 M796,462.4 L830,425 L856.3,393.8 L873,374.6 M784,442 L798.5,454 M808,415.5 L822.6,430 M826,398 L842,412 M832.2,456.4 L855,428 L875.5,401 L890,385 M851.5,466 L875,440 L894.8,415.5 L905,404 M841.8,446.8 L856.3,458.8 M858,425 L874,438 M856.3,393.8 L880,382 L905,372 M905,262 L930,250 L960,243 L990,232 M930,250 L938,268"/></defs><use href="#rd1" fill="none" stroke="#fbe78f" stroke-width="2.6" stroke-linejoin="round" stroke-linecap="round"/><use href="#rd1" fill="none" stroke="#b3b3c0" stroke-width="1.3" stroke-dasharray="1.3 1"/></g>
<g clip-path="url(#cr)"><defs><path id="rd2" d="M878.5,427.2 L927,404.6 M936.2,400.3 L962.9,387.8 M913.6,416.2 L938.3,404.7 M948.6,399.9 L1042.9,355.9 M840.5,459.8 L917.3,424 M925.8,420 L995.4,387.6 M1004.3,383.4 L1037.6,367.9 M843.3,465.9 L935.6,422.9 M955.1,413.8 L971.5,406.1 M981.4,401.5 L1049.4,369.8 M914.5,439.8 L1018.6,391.3 M1025.1,388.3 L1052.2,375.6 M891.9,455.8 L949.5,428.9 M959.9,424.1 L1027.2,392.7 M851.4,483.2 L936.7,443.4 M943.7,440.2 L996.5,415.5 M1006.3,411 L1030.5,399.7 M1040.4,395.1 L1057.5,387.1 M914.5,461.4 L931.1,453.7 M946.6,446.5 L1018.1,413.1 M1026.8,409 L1043.3,401.4 M916.3,465.2 L984.2,433.5 M994.2,428.9 L1001.2,425.6 M1019.9,416.9 L1035.2,409.8 M1045,405.2 L1062.2,397.2 M910.9,474.8 L944.1,459.3 M951.1,456.1 L1064.9,403 M862.2,506.4 L963.6,459.1 M973.9,454.3 L990.3,446.6 M1000.3,442 L1068.3,410.3 M865.3,513 L1003.4,448.6 M1037.8,432.6 L1071.4,416.9 M910.7,496.3 L935.5,484.7 M952.3,476.9 L995.1,456.9 M1030.8,440.3 L1073.1,420.6 M904.7,508.6 L947.4,488.7 M956,484.7 L982.4,472.4 M898.6,518.1 L933.4,501.9 M941.7,498 L950,494.1 M958.5,490.2 L965.4,486.9 M974.6,482.6 L1011.3,465.5 M919.5,515 L1003.9,475.6 M903.5,528.7 L938.3,512.4 M946.6,508.6 L1006.3,480.8 M898.8,539.1 L949.7,515.3 M958.1,511.4 L973.5,504.2 M982.7,500 L1053.8,466.8 M884,553.1 L944.2,525 M952.5,521.2 L995.7,501 M1003.4,497.4 L1090.1,457 M903.9,550.2 L946.7,530.2 M963.2,522.5 L987.9,511 M998.2,506.2 L1031.6,490.6 M924,550 L1062.4,485.4 M898.8,568.4 L961,539.4 M969.3,535.6 L984.8,528.4 M894.6,575.9 L946.7,551.6 M954.9,547.8 L1039.8,508.2 M941.6,562.5 L990.1,539.9 M896,512.6 L909.4,541.3 M907.3,514.1 L937.8,579.5 M905.9,486 L921.9,520.1 M925,526.9 L947.5,575 M922.7,500.2 L944.6,547.1 M946.7,551.6 L952.7,564.4 M911.6,455.1 L930.9,496.4 M933.4,501.9 L936,507.3 M938.3,512.4 L941.5,519.2 M944.2,525 L971.2,582.9 M914.5,439.8 L939.1,492.5 M941.7,498 L944.2,503.5 M946.6,508.6 L961,539.4 M966.4,550.9 L979.5,579.1 M911.6,411.8 L952.5,499.6 M954.9,504.7 L960.8,517.3 M966.7,530 L969.3,535.6 M971.4,540.1 L974.7,547.1 M903,371.1 L933.4,436.4 M939.6,449.7 L966.6,507.5 M969.3,513.3 L971.7,518.5 M975.3,526.1 L1001.9,583.2 M927,404.6 L929.1,409 M935.6,422.9 L996,552.4 M927.5,381.7 L972.1,477.2 M974.6,482.6 L979.5,493.2 M982.7,500 L993.9,524.1 M943.5,388.9 L966.1,437.4 M967.8,441.2 L995.7,501 M998.2,506.2 L1006.4,523.8 M937.1,355.2 L956.2,396.3 M959.9,404.1 L965.5,416.1 M967.5,420.5 L1000.7,491.6 M1005.8,502.6 L1009.3,510.2 M957.7,376.5 L979.5,423.5 M982.5,429.7 L984.2,433.5 M987,439.4 L990.3,446.6 M978.6,395.4 L989.5,418.8 M992.4,425.1 L994.2,428.9 M996.9,434.7 L1005.1,452.3 M985.6,392.1 L1039.8,508.2 M984.4,364.1 L1001,399.5 M1006.3,411 L1011,421.1 M1013.7,426.9 L1020.2,440.8 M984.4,340.9 L1026,430 M1029.1,436.7 L1037,453.6 M1013,379.4 L1026.8,409 M1031.3,418.7 L1034.7,426 M1037.8,432.6 L1039.5,436.2 M1010.8,357.5 L1025.1,388.3 M1030.5,399.7 L1049.7,441 M1006.6,322.8 L1045,405.2 M1047.8,411 L1062.1,441.8"/></defs><use href="#rd2" fill="none" stroke="#fbe78f" stroke-width="2.6" stroke-linejoin="round" stroke-linecap="round"/><use href="#rd2" fill="none" stroke="#b3b3c0" stroke-width="1.3" stroke-dasharray="1.3 1"/></g>
<defs><path id="rd3" d="M400,185.1 C403.5,185.7 419.5,187.9 426.5,189.5 C433.6,191.1 446.4,193.9 453.1,196.9 C459.8,199.8 468,206.9 476.7,211.6 C485.3,216.3 506.6,227.7 518,232.3 C529.4,236.8 550.4,242.2 562.2,245.5 C574,248.9 595.5,253.6 606.5,257.3 C617.5,261.1 636.2,269.6 644.8,273.6 C653.5,277.5 665.5,282.7 671.4,286.8 C677.3,291 684.4,300.4 689.1,304.5 C693.8,308.7 702.5,314.9 706.8,317.8 C711.1,320.8 717.8,324.2 721.5,326.7 C725.3,329.1 732.1,333.2 734.8,336.1 C737.5,339.1 740.6,345.5 741.6,348.8 C742.6,352.1 742.6,356.7 742.2,360.6 C741.8,364.5 738.8,373.2 738.6,378.3 C738.4,383.4 739.4,393.8 740.7,398.9 C742,404.1 745.5,412.5 748.1,416.6 C750.6,420.8 756.5,426.6 759.9,429.9 C763.2,433.3 769.2,438.8 773.2,441.7 C777.1,444.7 784.9,447.9 789.4,452 C793.9,456.2 803.1,468 807.1,472.7 C811,477.4 814.4,483.1 818.9,487.4 C823.4,491.8 838.1,502.8 841,505.1 M734.8,336.1 C737.8,335.8 748.7,334.7 756.9,334 C765.2,333.4 787.7,332.5 796.8,331.1 C805.8,329.7 819.5,324.9 824.8,323.7 C830.1,322.5 835,322.4 836.6,322.2 M400,593 C426.7,586 569.1,548.1 600.6,539.9 C632.1,531.8 629.3,534.4 636,531.7 C642.7,529 646.8,524.2 650.7,519.9 C654.7,515.6 661.9,504.1 665.5,499.2 C669,494.3 673.7,486.5 677.3,483 C680.8,479.5 685,473.9 692,472.7 C699.1,471.5 722.1,474 730.4,474.2 C738.6,474.4 749.3,474.9 754,474.2 C758.7,473.4 763.2,469.8 765.8,468.3 C768.3,466.7 772.2,463.1 773.2,462.4 M756.9,334 C757.7,329.7 761.3,309.7 762.8,301.6 C764.4,293.5 767.5,280.6 768.7,273.6 C770,266.5 770.7,253.8 772.3,248.5 C773.8,243.2 778.2,238.1 780.5,233.7 C782.8,229.4 786.6,220.2 789.4,216 C792.1,211.9 797.6,205.1 801.2,202.8 C804.7,200.4 814,198.9 815.9,198.3 M796.8,165.9 C797.7,168.3 801.6,179.3 804.1,183.6 C806.7,187.9 812.8,194 815.9,198.3 C819.1,202.7 824.6,211.5 827.7,216 C830.9,220.6 836.8,229.1 839.5,232.3 C842.3,235.4 845.6,238.5 848.4,239.6 C851.1,240.8 857,241.2 860.2,241.1 C863.3,241 868.8,238.5 872,239.1 C875.1,239.6 882.2,244.7 883.8,245.5 M772.3,260.3 C773.4,264.6 777.3,283.3 780.5,292.7 C783.8,302.2 792.4,324.8 796.8,331.1 C801.1,337.4 807.7,336.8 813,339.9 C818.3,343.1 833.4,352.7 836.6,354.7 M744.5,268.6 C746.2,268.8 754.1,270 756.9,270.6 C759.8,271.3 764.6,273.2 765.8,273.6 M796.8,328.1 C797.7,326.2 802.4,316.5 804.1,313.4 C805.9,310.2 809.2,305.7 810,304.5 M927.1,165.9 C927.3,167.5 928.1,174.6 928,177.7 C927.9,180.8 928.5,186.7 926.5,189.5 C924.6,192.3 917.4,195.6 913.3,198.3 C909.1,201.1 900.3,207 895.6,210.1 C890.9,213.3 881.8,218.4 877.9,221.9 C873.9,225.5 867.6,234.7 866.1,236.7 M926.5,189.5 C929.1,188.9 940.4,186.5 945.7,185.1 C951,183.7 961.7,180.2 966.4,179.2 C971.1,178.2 976.6,176.3 981.1,177.7 C985.6,179.1 997.5,187.9 1000,189.5 M793.8,469.7 L798.2,484.5 M787.9,472.7 C787.3,475 784.7,485.7 783.5,490.4 C782.3,495.1 778.7,505.5 779.1,508.1 C779.4,510.6 785.4,509.4 786.4,509.6 M970.8,176.7 C972.9,177.2 982.9,178.4 986.5,180.6 C990.2,182.9 995.3,190.5 998.3,193.4 C1001.3,196.3 1006.9,200.4 1009.1,202.3 C1011.4,204.1 1014.3,206.5 1015,207.2 M1033.7,168.8 C1034.3,170.3 1036.6,175.9 1037.7,179.7 C1038.7,183.5 1040.8,194.3 1041.6,197.4 C1042.4,200.4 1043.3,201.6 1043.6,202.3 M1096.7,186.5 C1097.7,184.6 1103.2,174.4 1104.5,171.8 C1105.8,169.2 1106.2,167.5 1106.5,166.9 M1106.5,173.8 C1109.1,173.2 1119.6,170.8 1126.2,169.8 C1132.7,168.9 1151.7,167.3 1155.7,166.9 M1108.5,175.7 C1109.8,176.8 1115.4,181.8 1118.3,183.6 C1121.2,185.4 1126.4,187.1 1130.1,189.5 C1133.8,191.9 1141.6,198.2 1145.8,201.3 C1150,204.4 1160,209.7 1161.6,213.1 C1163.1,216.5 1158.7,222.4 1157.6,226.9 C1156.6,231.3 1155.8,243.1 1153.7,246.5 C1151.6,249.9 1145.3,251.4 1141.9,252.4 C1138.5,253.5 1130.5,252.8 1128.1,254.4 C1125.8,256 1125.2,260 1124.2,264.2 C1123.1,268.4 1121.6,281.4 1120.3,285.9 C1118.9,290.3 1116.5,295.3 1114.4,297.7 C1112.3,300 1104.3,302 1104.5,303.6 C1104.8,305.1 1112.1,308.5 1116.3,309.5 C1120.5,310.4 1128.9,310.8 1136,310.4 C1143.1,310 1163.7,306.1 1169.4,306.5 C1175.2,306.9 1177.7,312 1179.3,313.4 C1180.8,314.8 1181,316.8 1181.2,317.3 M900,405.8 C906.6,401.9 938.4,382.6 949.2,376.3 C959.9,370 972.2,363.3 980.6,358.6 C989,353.9 1002.9,344.9 1012.1,340.9 C1021.3,337 1039.8,331.5 1049.5,329.1 C1059.2,326.8 1073.3,324.7 1084.9,323.2 C1096.4,321.8 1123.1,319.4 1136,318.3 C1148.8,317.3 1170.2,315.5 1181.2,315.4 C1192.2,315.2 1208.9,315.8 1218.6,317.3 C1228.3,318.9 1243.1,324 1254,327.2 C1264.8,330.3 1293.9,339.1 1300,340.9 M1181.2,315.4 C1181,316.4 1181.6,320.6 1179.3,323.2 C1176.9,325.8 1167.2,332.1 1163.5,335 C1159.8,337.9 1153.4,342 1151.7,344.9 C1150,347.7 1149.4,352.2 1150.7,356.7 C1152,361.1 1157.8,370.7 1161.6,378.3 C1165.4,385.8 1176.9,408.6 1179.3,413.3 M1183.2,165.9 C1182.8,167.5 1180.2,174.8 1180.2,177.7 C1180.2,180.6 1182.1,185.7 1183.2,187.5 C1184.2,189.4 1187.4,190.9 1188.1,191.5 M1232.4,165.9 C1234.7,166.4 1245.9,167.7 1250,169.8 C1254.2,171.9 1260.1,178 1263.8,181.6 C1267.5,185.3 1274.6,193.2 1277.6,197.4 C1280.6,201.6 1285.4,207.6 1286.4,213.1 C1287.5,218.6 1286.1,231.6 1285.4,238.7 C1284.8,245.7 1283.3,258.3 1281.5,266.2 C1279.7,274.1 1274,290.6 1271.7,297.7 C1269.3,304.7 1265,315.4 1263.8,319.3 C1262.6,323.2 1268.6,327.4 1262.8,327.2 C1257.1,326.9 1226.2,318.6 1220.6,317.3 M1300,236.7 L1288.4,256.4 M968.8,371.4 C970.1,371 977,368.3 978.7,368.5 C980.4,368.6 982.4,371.3 981.6,372.4 C980.8,373.4 973.9,375.8 972.8,376.3 M813.4,520 C812.4,521.2 808.3,525.2 806,528.9 C803.7,532.6 797.7,542.5 796.2,547.6 C794.6,552.7 795.7,562.3 794.7,567.3 C793.7,572.3 792.2,579.8 788.8,585.1 C785.3,590.3 774,601.3 769,606.8 C764,612.3 754.7,622.3 751.3,626.5 C747.9,630.7 744.4,636.8 743.4,638.3 M838.1,520 C837,522.6 832.8,532.9 830.2,539.7 C827.5,546.6 821.4,564 818.3,571.3 C815.3,578.5 811.7,587.1 807.5,594 C803.3,600.8 792.4,615.5 786.8,622.6 C781.1,629.6 768,643.8 765.1,647 M788.8,585.6 C791.1,586.5 803.9,590.8 806.5,592.5 C809.1,594.1 806.2,596.4 808.5,597.9 C810.7,599.4 821.2,602.5 823.3,603.8 C825.4,605.1 823.2,605.8 824.3,607.8 C825.3,609.7 828.9,615.5 831.2,618.6 C833.4,621.8 839.3,628.8 841,631.4 C842.7,634.1 843.6,636.3 844,638.3 C844.4,640.4 844,645.9 844,647 M837.1,573.7 L823.3,603.8 M828.2,544.7 C829.3,544.9 835.4,545.5 836.6,546.1 C837.8,546.8 837.3,548.3 837.1,549.6 C836.8,550.8 836.2,554.8 834.6,555.5 C833,556.2 826.5,554.6 825.2,554.5 M902.3,413 C899.1,416.9 883.4,436.7 878.7,442.5 C873.9,448.3 869.5,452.6 866.9,456.3 C864.2,459.9 861.6,464.8 859,470 C856.4,475.3 850,488.9 847.2,495.6 C844.4,502.3 839.2,516.7 838,520 M850.1,469 C847.4,472.6 834.4,488.8 829.5,495.6 C824.6,502.4 815.5,516.7 813.4,520 M800,448.4 C802.6,449.3 813.2,453.7 819.7,455.3 C826.1,456.9 844.4,459.5 848.2,460.2 M807.9,464.1 C809.4,466.8 815.2,478.3 819.7,483.8 C824.1,489.3 838.4,502.5 841.3,505.4 M1179.5,413 L1200,436.6 M1018.3,442.5 C1022,445.5 1038.5,461.8 1045.8,465.1 C1053.2,468.4 1066,463.7 1073.4,467.1 C1080.7,470.5 1097.2,487.5 1100.9,490.7 M843.3,631.3 L842.3,666.3 M1142.2,653.9 C1146.4,653 1165.9,649.5 1173.6,647 C1181.4,644.5 1196.5,636.8 1200,635.2 M1173.6,647 L1175.6,666.3 M1200,436.6 C1206.3,443.3 1239.3,478.6 1247.2,486.7 C1255.1,494.9 1252.2,492.7 1259,497.6 C1265.8,502.4 1289.4,517.6 1298.3,523.1 C1307.2,528.6 1317.6,533.5 1325.9,538.9 C1334.1,544.2 1362.4,557.4 1360.3,563.4 C1358.2,569.5 1321,579.8 1310.1,584.1 C1299.2,588.4 1286.3,592.5 1278.7,595.9 C1271.1,599.3 1256.6,606.8 1253.1,609.7 C1249.6,612.5 1251.9,616.2 1252.1,617.5 C1252.4,618.8 1254.1,619.8 1255.1,619.5 C1256,619.2 1252.2,616.7 1259,615.6 C1265.8,614.4 1299.5,610.9 1306.2,610.6 C1312.9,610.4 1309.4,611.1 1309.1,613.6 C1308.9,616.1 1305.9,625.1 1304.2,629.3 C1302.5,633.5 1300,641.9 1296.4,645.1 C1292.7,648.2 1279.1,650.1 1276.7,652.9 C1274.3,655.8 1278.4,664.5 1278.7,666.3 M1247.2,488.7 C1245.9,489 1241.7,486.5 1237.4,490.7 C1233,494.9 1216.8,514.8 1214.7,520.2 C1212.7,525.6 1219.9,528.2 1221.6,531 C1223.3,533.7 1224.1,537.4 1227.5,540.8 C1230.9,544.2 1243.5,554.2 1247.2,556.6 C1250.9,558.9 1254,558.3 1255.1,558.5 M1200,635.2 C1203.4,633 1220.6,620.5 1225.6,618.5 C1230.5,616.5 1233.7,618.2 1237.4,620.5 C1241,622.7 1251.5,633 1253.1,635.2 C1254.7,637.5 1249.7,636.9 1249.2,637.2 M1434,413 C1435.9,415 1441,426 1447.8,427.7 C1454.6,429.5 1478.2,425 1485.2,425.8 C1492.1,426.6 1497.9,432.6 1499.9,433.6 M1536.3,541.8 C1540.2,543.4 1557.3,553.2 1565.8,553.6 C1574.3,554 1595.4,545.9 1600,544.8 M1600,428.7 C1609.7,432.1 1659.1,450.4 1672.8,454.3 C1686.4,458.2 1690.5,458.6 1702.3,458.2 C1714.1,457.8 1752.6,451.1 1761.3,451.3 C1769.9,451.6 1764.8,458.2 1767.2,460.2 C1769.5,462.2 1777.4,465.3 1779,466.1 M1670.8,455.3 C1674.5,457.2 1682.6,460.5 1698.3,470 C1714.1,479.6 1778.6,518.7 1788.8,527.1 C1799,535.5 1777,531.4 1775,533 C1773.1,534.5 1775.6,537.8 1774,538.9 C1772.5,539.9 1764.9,539.5 1763.2,540.8 C1761.5,542.1 1761.5,547.6 1761.3,548.7 M1733.7,541.8 C1739,542.7 1768.9,545.8 1773.1,548.7 C1777.3,551.6 1770.7,562.3 1765.2,563.4 C1759.7,564.6 1736.9,559 1731.8,557.5 C1726.6,556.1 1726.6,554.7 1726.8,552.6 C1727.1,550.5 1732.8,543.3 1733.7,541.8 M1737.7,543.8 L1733.7,557.5 M1742.6,544.8 L1738.6,558.5 M1749.5,545.7 L1745.5,560.1 M1757.3,546.7 L1753.4,561.5 M1730.8,550.7 L1769.1,556.2 M1749.5,552.6 L1767.2,559.5 M1787.8,546.7 L1773.1,550.7 M1787.8,546.7 C1785.1,550.9 1773.3,569.8 1767.2,578.2 C1761,586.6 1745.4,602.8 1741.6,609.7 C1737.8,616.5 1738.6,624.1 1738.6,629.3 C1738.6,634.6 1742.2,644.1 1741.6,649 C1740.9,653.9 1734.8,664 1733.7,666.3 M1692.4,470 C1688.8,474.5 1672.5,496.1 1664.9,503.5 C1657.3,510.8 1644.1,519.6 1635.4,525.1 C1626.7,530.6 1604.7,542.1 1600,544.8 M1700.3,413 C1700,415.1 1699,424.8 1698.3,428.7 C1697.7,432.7 1695.8,440.7 1695.4,442.5 M1731.8,413 C1733.1,416.4 1739.9,433.6 1741.6,438.6 C1743.3,443.5 1744.1,448.8 1744.5,450.4 M1741.6,435.6 L1767.2,432.7 M1680.6,481.8 L1686.5,489.7 M1692.4,472 L1697.3,480.8 M1774,538.9 L1779,540.8 M1733.7,666 C1729,674.7 1705.1,719.4 1698.3,730.9 C1691.5,742.4 1686.5,746 1682.6,752.5 C1678.7,759.1 1673.3,773.5 1668.8,780.1 C1664.4,786.6 1654.9,793.3 1649.2,801.7 C1643.4,810.1 1632.1,833.3 1625.6,843 C1619,852.7 1603.4,870.3 1600,874.5 M1628.1,840 C1622.6,846.6 1593.1,881 1586.8,889.2 C1580.5,897.3 1583.8,897 1580.9,901 C1578,904.9 1569.6,915.4 1565.2,918.7 C1560.7,921.9 1552.7,925.7 1547.5,925.5 C1542.2,925.4 1531,917.8 1525.9,917.7 C1520.7,917.5 1513.7,924.4 1509.1,924.6 C1504.6,924.7 1496.8,918 1491.4,918.7 C1486.1,919.3 1473.7,927.3 1468.8,929.5 C1464,931.7 1456.9,934.6 1455.1,935.4 M1278.7,666 C1281,668.1 1293.7,678.3 1296.4,681.7 C1299,685.1 1296,688.5 1298.3,691.6 C1300.7,694.6 1311.6,701.2 1314.1,704.3 C1316.6,707.5 1315.8,713.2 1317,715.2 C1318.2,717.1 1321.7,717 1322.9,719.1 C1324.1,721.2 1323.6,727 1325.9,730.9 C1328.1,734.8 1335.6,744.7 1339.6,748.6 C1343.7,752.5 1355.2,756.2 1356.3,760.4 C1357.5,764.6 1348.9,776.1 1348.5,780.1 C1348.1,784 1353.1,785.4 1353.4,789.9 C1353.7,794.4 1354.8,806 1350.4,813.5 C1346.1,821 1324.6,838.3 1320.9,845.9 C1317.3,853.5 1321.2,865.3 1322.9,870.5 C1324.6,875.8 1333.6,881.3 1333.7,885.3 C1333.9,889.2 1327,897.7 1323.9,900 C1320.7,902.4 1313.5,901.1 1310.1,903 C1306.7,904.8 1303.3,911.6 1298.3,913.8 C1293.3,916 1276.2,918.6 1272.8,919.3 M843.3,666 C843,673.3 843.1,708 841.3,721.1 C839.5,734.2 832.1,755.9 829.5,764.3 C826.9,772.7 824,779.5 821.6,784 C819.3,788.5 812.7,792.8 811.8,797.8 C810.9,802.7 812.4,816.4 814.7,821.4 C817.1,826.3 826.2,834.9 829.5,835.1 C832.8,835.4 837.6,827.5 839.3,823.3 C841,819.1 841.2,810 842.3,803.7 C843.3,797.4 845.2,782.2 847.2,776.1 C849.2,770.1 854.1,761.8 857,758.4 C859.9,755 864.9,751.1 868.8,750.6 C872.8,750 882.9,753.4 886.5,754.5 C890.2,755.5 895.1,756.6 896.4,758.4 C897.7,760.3 893.5,764.3 896.4,768.3 C899.2,772.2 913,785 918,787.9 C923,790.8 926.9,790.2 933.7,789.9 C940.5,789.6 960.7,785.7 969.1,786 C977.5,786.2 989.1,790.7 996.7,791.9 C1004.3,793 1019.6,796.1 1026.2,794.8 C1032.7,793.5 1041.6,784.8 1045.8,782 C1050,779.3 1054.2,774.4 1057.6,774.2 C1061,773.9 1068.6,777.2 1071.4,780.1 C1074.1,782.9 1076.7,791.6 1078.3,795.8 C1079.8,800 1081.2,807.1 1083.2,811.5 C1085.2,816 1094.6,824 1093,829.2 C1091.4,834.5 1072.7,846.4 1071.4,850.9 C1070.1,855.3 1081,859.5 1083.2,862.7 C1085.4,865.8 1087.6,871.6 1088.1,874.5 C1088.6,877.3 1087.3,883 1087.1,884.3 M857,666 C858.1,668.1 862.8,677.8 864.9,681.7 C867,685.7 869.9,693.3 872.8,695.5 C875.6,697.7 881.5,698.6 886.5,698.4 C891.5,698.3 905.9,693.6 910.1,694.5 C914.3,695.4 916.8,702.3 918,705.3 C919.2,708.3 922.1,712.4 919,717.1 C915.8,721.9 895.7,736.5 894.4,740.7 C893.1,744.9 907.4,744.9 909.1,748.6 C910.8,752.3 906,763.3 907.2,768.3 C908.4,773.2 916.6,783.6 918,786 M1118.6,666 C1120.7,668.1 1128.8,678.3 1134.3,681.7 C1139.8,685.1 1156.2,689.5 1159.9,691.6 C1163.6,693.7 1172.6,683.8 1161.8,697.5 C1151.1,711.1 1090.3,781 1079.3,793.8 M1159.9,691.6 L1173.6,666 M918,786.9 C925.9,787.6 962.6,790 977,791.9 C991.4,793.7 1016.2,799.1 1026.2,800.7 C1036.1,802.3 1047.8,802 1051.7,803.7 C1055.7,805.4 1053.3,812.7 1055.7,813.5 C1058,814.3 1068.6,811.1 1069.4,809.6 C1070.2,808 1064.4,803.8 1061.6,801.7 C1058.7,799.6 1048.6,796.7 1047.8,793.8 C1047,790.9 1053.6,781.9 1055.7,780.1 C1057.8,778.2 1062.5,780.1 1063.5,780.1 M1016.3,880.4 C1022.4,875.4 1053.7,848.5 1061.6,843 C1069.4,837.5 1072.4,840.4 1075.3,839.1 C1078.2,837.7 1082.1,833.9 1083.2,833.2 M1016.3,880.4 C1018.9,880.1 1031.3,879.7 1036,878.4 C1040.7,877.1 1049.8,873.7 1051.7,870.5 C1053.7,867.4 1049.4,858.5 1050.7,854.8 C1052,851.1 1060.1,844.6 1061.6,843 M1055.7,876.4 C1056.2,876.2 1057.5,873.4 1059.6,874.5 C1061.7,875.5 1067.7,882.8 1071.4,884.3 C1075.1,885.7 1085,885.1 1087.1,885.3 M1086.5,886.2 C1090.7,885.8 1105.9,885.4 1118,883.3 C1130.1,881.2 1166.5,874.3 1177,870.5 C1187.5,866.7 1184.1,848.3 1196.7,854.7 C1209.2,861.2 1261.4,910.1 1271.4,918.7 M750,666 C740.1,676.4 689.7,729.3 675.3,743.7 C660.9,758.1 652.6,761.7 641.9,774.2 C631.1,786.6 605.2,823.2 594.7,837.1 C584.2,851 570.8,870 563.2,878.4 C555.6,886.8 545.8,894.6 537.7,900 C529.5,905.5 507,916.7 502.3,919.3 M594.7,837.1 C595.9,838.1 602.5,838.9 603.5,845 C604.6,851 601.6,874.7 602.6,882.3 C603.5,889.9 608.1,897.1 610.4,902 C612.8,906.9 618.9,917 620.3,919.3 M462.9,940.6 L504.2,919 M1300,238.7 C1301,237.1 1305.5,228.7 1307.9,226.9 C1310.2,225 1314.6,225.2 1317.7,224.9 C1320.8,224.6 1328.7,223.6 1331.5,224.9 C1334.2,226.2 1334.9,232.1 1338.3,234.7 C1341.8,237.4 1354.1,242.2 1357,244.6 C1359.9,246.9 1360.2,248.5 1360,252.4 C1359.7,256.4 1352.4,267.5 1355.1,274.1 C1357.7,280.6 1376.8,295.8 1379.6,301.6 C1382.5,307.4 1379.4,309.7 1376.7,317.3 C1373.9,324.9 1361.4,353.1 1359,358.6 M1317.7,224.9 C1317.6,223.1 1316.3,213.5 1316.7,211.1 C1317.1,208.8 1316.1,206.9 1320.6,207.2 C1325.2,207.5 1347.1,212.3 1351.1,213.1 M1300,343.9 C1307.9,345.8 1345.4,355 1359,358.6 C1372.6,362.3 1389.2,368 1402.3,371.4 C1415.4,374.8 1450,382.5 1457.3,384.2 M1402.3,371.4 C1402.4,373.4 1398.8,380.6 1403.2,386.2 C1407.7,391.7 1431.4,409.7 1435.7,413.3 M1402.3,372.4 C1404.1,371.9 1412.9,374 1416,368.5 C1419.2,362.9 1420.4,337.6 1425.9,331.1 C1431.4,324.5 1454.2,322.7 1457.3,319.3 C1460.5,315.9 1450.4,308.9 1449.5,305.5 C1448.5,302.1 1452,295.7 1450.4,293.7 C1448.9,291.8 1439.4,291.2 1437.7,290.8 M1450.4,293.7 C1451.4,293.2 1455.6,292.9 1457.3,289.8 C1459,286.6 1463,273.9 1463.2,270.1 C1463.5,266.3 1460.6,262.6 1459.3,261.3 C1458,260 1453.7,263.3 1453.4,260.3 C1453.1,257.3 1456.4,247.3 1457.3,238.7 C1458.2,230 1459.9,201.2 1460.3,195.4 M1457.3,319.3 L1473.1,328.1 M1484.7,256.7 C1484.5,258.1 1482.7,263.9 1483.5,267.2 C1484.3,270.4 1489.1,277.1 1490.5,281.1 C1491.9,285.2 1492,294.3 1494,297.4 C1496,300.6 1501.6,301.3 1505.6,304.4 C1509.7,307.5 1518.4,316.7 1524.3,320.7 C1530.2,324.8 1543.4,331.3 1549.9,334.7 C1556.4,338.1 1567,342.6 1573.2,346.4 C1579.4,350.1 1592.3,360.7 1596.5,362.7 C1600.7,364.7 1601.5,360.4 1604.6,361.5 C1607.7,362.6 1614.7,367.4 1619.8,370.8 C1624.9,374.2 1636.9,382.8 1643.1,387.1 C1649.3,391.5 1661.1,400.8 1666.4,403.4 C1671.7,406.1 1678.6,405.9 1682.7,406.9 C1686.7,408 1690.8,412.2 1696.7,411.6 C1702.6,411 1720.7,406 1726.9,402.3 C1733.2,398.6 1738,390.2 1743.2,383.6 C1748.5,377.1 1761.3,360.8 1766.5,353.4 C1771.8,345.9 1780.2,332.4 1782.9,327.7 C1785.5,323.1 1791.6,320.6 1786.3,318.4 C1781.1,316.2 1755.4,313.4 1743.2,311.4 C1731.1,309.4 1701.9,304.4 1695.5,303.3 M1695.5,277.6 C1695.6,279.4 1696.8,286.3 1696.7,290.5 C1696.5,294.7 1695.1,301.6 1694.3,309.1 C1693.6,316.6 1691.8,336.4 1690.8,346.4 C1689.9,356.3 1688.1,375.6 1687.3,383.6 C1686.6,391.7 1685.3,403.8 1685,406.9 M1696.7,290.5 C1700.7,290.9 1722,292.7 1726.9,294 C1731.9,295.2 1732.8,297.8 1733.9,299.8 C1735,301.8 1734.9,307.9 1735.1,309.1 M1697.8,220.6 C1699.8,224.3 1710,241.7 1713,248.5 C1715.9,255.4 1716.2,266.9 1720,271.8 C1723.7,276.8 1737.3,282.1 1740.9,285.8 C1744.5,289.5 1746.4,296.4 1746.7,299.8 C1747.1,303.2 1745,307.7 1743.2,311.4 C1741.5,315.2 1736.7,323.1 1733.9,327.7 C1731.1,332.4 1724.1,342.3 1722.3,346.4 C1720.4,350.4 1722.9,354.6 1720,358 C1717,361.4 1702.9,368.3 1700.2,372 C1697.4,375.7 1699.1,384.1 1699,386 M1751.4,214.7 C1755.6,216.3 1777.9,223.1 1782.9,226.4 C1787.8,229.7 1788.1,232.5 1788.7,239.2 C1789.3,245.9 1787.5,265.9 1787.5,276.5 C1787.5,287 1788.5,312.8 1788.7,318.4 M1558,207.8 C1557,205.4 1550.7,193.9 1549.9,190.3 C1549.1,186.7 1548.5,183 1552.2,181 C1555.9,178.9 1573.8,176.1 1577.8,175.1 C1581.9,174.2 1578.2,174.4 1582.5,174 C1586.9,173.5 1602.4,172.3 1610.5,171.6 C1618.5,171 1634.7,169.6 1643.1,169.3 C1651.5,169 1667.8,168.7 1673.4,169.3 C1679,169.9 1679.7,171.2 1685,174 C1690.3,176.8 1706.1,186.4 1713,190.3 C1719.8,194.2 1731.1,199.8 1736.3,203.1 C1741.4,206.4 1749.4,213.2 1751.4,214.7 M1736.3,203.1 C1739.1,202.5 1751.9,199.8 1757.2,198.4 C1762.5,197 1771.5,194.8 1775.9,192.6 C1780.2,190.4 1788.6,185.5 1789.8,182.1 C1791.1,178.7 1785.8,169 1785.2,167 M1713,190.3 C1714.5,191.7 1720.6,198.6 1724.6,200.8 C1728.7,202.9 1737.3,205.8 1743.2,206.6 C1749.2,207.4 1765.5,206.6 1768.9,206.6 M1674.5,397.6 C1676.1,396.5 1679.5,388.8 1686.2,389.5 C1692.9,390.1 1719.5,400.6 1724.6,402.3 M1674.5,397.6 L1682.7,406.9 M1726.9,402.3 C1728.2,405.1 1734.1,417 1736.3,423.2 C1738.4,429.5 1742,444 1743.2,448.9 C1744.5,453.8 1745.3,458.6 1745.6,460.1 M1699,411.6 C1698.8,413.8 1698.3,423.9 1697.8,427.9 C1697.4,431.9 1695.8,440 1695.5,441.9 M1703.6,415.1 C1703.5,414.2 1700.6,409.8 1702.5,408.1 C1704.3,406.4 1715.6,403.1 1717.6,402.3 M1740.9,434.9 L1766.5,431.4 M1743.2,450 C1745.6,450.2 1758.1,449.9 1760.7,451.2 C1763.4,452.5 1762.7,458.9 1763.1,460.1 M1480,425.6 C1481.2,425.7 1486.5,425.7 1489.3,426.7 C1492.1,427.8 1499.4,432.8 1501,433.7 M1457.4,384.1 C1460.4,385.1 1464.6,387.7 1480,391.8 C1495.4,395.9 1557.2,410.2 1573.2,415.1 C1589.2,420 1596.4,426.8 1600,428.6"/></defs><use href="#rd3" fill="none" stroke="#fbe78f" stroke-width="2.6" stroke-linejoin="round" stroke-linecap="round"/><use href="#rd3" fill="none" stroke="#b3b3c0" stroke-width="1.3" stroke-dasharray="1.3 1"/>
<path d="M957.7,179.1 l2.6,-3 M958.0,176.6 l2,2 M967.2,178.2 l2.6,-3 M967.5,175.7 l2,2 M958.9,179.4 l2.6,-3 M959.2,176.9 l2,2 M952.4,178.6 l2.6,-3 M952.7,176.1 l2,2 M961.3,181.4 l2.6,-3 M961.6,178.9 l2,2 M950.6,176.5 l2.6,-3 M950.9,174.0 l2,2 M950.5,181.6 l2.6,-3 M950.8,179.1 l2,2 M962.6,173.9 l2.6,-3 M962.9,171.4 l2,2 M968.3,183.1 l2.6,-3 M968.6,180.6 l2,2 M961.8,179.7 l2.6,-3 M962.1,177.2 l2,2 M951.8,173.7 l2.6,-3 M952.1,171.2 l2,2 M959.3,174.1 l2.6,-3 M959.6,171.6 l2,2 M952.5,175.9 l2.6,-3 M952.8,173.4 l2,2 M949.3,178.1 l2.6,-3 M949.6,175.6 l2,2 M957.5,181.9 l2.6,-3 M957.8,179.4 l2,2 M959.1,179.9 l2.6,-3 M959.4,177.4 l2,2 M958.7,180.1 l2.6,-3 M959.0,177.6 l2,2 M957.8,176.3 l2.6,-3 M958.1,173.8 l2,2 M968.7,183.5 l2.6,-3 M969.0,181.0 l2,2 M965.5,180.6 l2.6,-3 M965.8,178.1 l2,2 M955.0,175.8 l2.6,-3 M955.3,173.3 l2,2 M954.5,174.2 l2.6,-3 M954.8,171.7 l2,2 M964.0,177.5 l2.6,-3 M964.3,175.0 l2,2 M965.6,177.4 l2.6,-3 M965.9,174.9 l2,2 M967.9,182.0 l2.6,-3 M968.2,179.5 l2,2 M948.7,175.6 l2.6,-3 M949.0,173.1 l2,2 M966.9,178.2 l2.6,-3 M967.2,175.7 l2,2 M968.3,177.5 l2.6,-3 M968.6,175.0 l2,2 M1095.9,181.6 l2.6,-3 M1096.2,179.1 l2,2 M1107.2,175.8 l2.6,-3 M1107.5,173.3 l2,2 M1096.1,176.8 l2.6,-3 M1096.4,174.3 l2,2 M1110.1,183.6 l2.6,-3 M1110.4,181.1 l2,2 M1096.6,175.4 l2.6,-3 M1096.9,172.9 l2,2 M1096.3,172.5 l2.6,-3 M1096.6,170.0 l2,2 M1107.5,174.3 l2.6,-3 M1107.8,171.8 l2,2 M1103.6,178.7 l2.6,-3 M1103.9,176.2 l2,2 M1097.8,183.2 l2.6,-3 M1098.1,180.7 l2,2 M1096.8,181.8 l2.6,-3 M1097.1,179.3 l2,2 M1096.6,178.2 l2.6,-3 M1096.9,175.7 l2,2 M1098.1,175.8 l2.6,-3 M1098.4,173.3 l2,2 M1110.2,184.4 l2.6,-3 M1110.5,181.9 l2,2 M1099.6,185.7 l2.6,-3 M1099.9,183.2 l2,2 M1098.1,177.8 l2.6,-3 M1098.4,175.3 l2,2 M1108.4,181.8 l2.6,-3 M1108.7,179.3 l2,2 M1096.3,187.3 l2.6,-3 M1096.6,184.8 l2,2 M1098.1,175.6 l2.6,-3 M1098.4,173.1 l2,2 M1107.1,176.8 l2.6,-3 M1107.4,174.3 l2,2 M1099.4,172.7 l2.6,-3 M1099.7,170.2 l2,2 M1096.1,180.8 l2.6,-3 M1096.4,178.3 l2,2 M1098.6,181.1 l2.6,-3 M1098.9,178.6 l2,2 M1100.6,178.8 l2.6,-3 M1100.9,176.3 l2,2 M1110.0,179.2 l2.6,-3 M1110.3,176.7 l2,2 M1103.9,185.4 l2.6,-3 M1104.2,182.9 l2,2 M1097.6,174.0 l2.6,-3 M1097.9,171.5 l2,2 M1109.2,184.6 l2.6,-3 M1109.5,182.1 l2,2 M1098.7,174.5 l2.6,-3 M1099.0,172.0 l2,2 M1106.5,186.5 l2.6,-3 M1106.8,184.0 l2,2 M1097.8,186.7 l2.6,-3 M1098.1,184.2 l2,2 M1108.8,181.2 l2.6,-3 M1109.1,178.7 l2,2 M1101.4,173.2 l2.6,-3 M1101.7,170.7 l2,2 M1095.3,186.9 l2.6,-3 M1095.6,184.4 l2,2 M1098.5,182.8 l2.6,-3 M1098.8,180.3 l2,2 M1098.8,184.7 l2.6,-3 M1099.1,182.2 l2,2 M1104.2,176.2 l2.6,-3 M1104.5,173.7 l2,2 M1039.1,268.3 l2.6,-3 M1039.4,265.8 l2,2 M1038.3,264.3 l2.6,-3 M1038.6,261.8 l2,2 M1042.2,269.3 l2.6,-3 M1042.5,266.8 l2,2 M1042.6,264.7 l2.6,-3 M1042.9,262.2 l2,2 M1045.0,264.1 l2.6,-3 M1045.3,261.6 l2,2 M1037.8,264.7 l2.6,-3 M1038.1,262.2 l2,2 M1041.3,263.0 l2.6,-3 M1041.6,260.5 l2,2 M1039.1,265.5 l2.6,-3 M1039.4,263.0 l2,2 M1042.3,263.6 l2.6,-3 M1042.6,261.1 l2,2 M1041.8,301.2 l2.6,-3 M1042.1,298.7 l2,2 M1050.4,298.4 l2.6,-3 M1050.7,295.9 l2,2 M1046.4,297.5 l2.6,-3 M1046.7,295.0 l2,2 M1038.7,290.9 l2.6,-3 M1039.0,288.4 l2,2 M1037.0,301.4 l2.6,-3 M1037.3,298.9 l2,2 M1046.5,302.1 l2.6,-3 M1046.8,299.6 l2,2 M1037.0,298.1 l2.6,-3 M1037.3,295.6 l2,2 M1043.5,299.3 l2.6,-3 M1043.8,296.8 l2,2 M1041.2,302.5 l2.6,-3 M1041.5,300.0 l2,2 M1037.8,297.1 l2.6,-3 M1038.1,294.6 l2,2 M1047.0,301.3 l2.6,-3 M1047.3,298.8 l2,2 M1047.0,298.9 l2.6,-3 M1047.3,296.4 l2,2 M1047.8,301.5 l2.6,-3 M1048.1,299.0 l2,2 M1041.6,298.7 l2.6,-3 M1041.9,296.2 l2,2 M1049.3,301.0 l2.6,-3 M1049.6,298.5 l2,2 M1042.5,300.0 l2.6,-3 M1042.8,297.5 l2,2 M1048.8,297.4 l2.6,-3 M1049.1,294.9 l2,2 M1045.4,295.1 l2.6,-3 M1045.7,292.6 l2,2 M1044.9,297.8 l2.6,-3 M1045.2,295.3 l2,2 M1037.8,298.2 l2.6,-3 M1038.1,295.7 l2,2 M1050.6,301.1 l2.6,-3 M1050.9,298.6 l2,2 M1046.9,295.2 l2.6,-3 M1047.2,292.7 l2,2 M1047.0,297.5 l2.6,-3 M1047.3,295.0 l2,2 M1042.9,300.6 l2.6,-3 M1043.2,298.1 l2,2 M904.7,305.0 l2.6,-3 M905.0,302.5 l2,2 M904.1,302.9 l2.6,-3 M904.4,300.4 l2,2 M909.5,297.7 l2.6,-3 M909.8,295.2 l2,2 M912.1,301.5 l2.6,-3 M912.4,299.0 l2,2 M911.1,307.4 l2.6,-3 M911.4,304.9 l2,2 M906.8,294.7 l2.6,-3 M907.1,292.2 l2,2 M907.3,304.0 l2.6,-3 M907.6,301.5 l2,2 M906.1,296.9 l2.6,-3 M906.4,294.4 l2,2 M914.6,303.7 l2.6,-3 M914.9,301.2 l2,2 M909.0,307.0 l2.6,-3 M909.3,304.5 l2,2 M907.6,303.8 l2.6,-3 M907.9,301.3 l2,2 M906.1,300.5 l2.6,-3 M906.4,298.0 l2,2 M913.4,307.3 l2.6,-3 M913.7,304.8 l2,2 M914.3,299.9 l2.6,-3 M914.6,297.4 l2,2 M910.7,298.9 l2.6,-3 M911.0,296.4 l2,2 M905.3,301.5 l2.6,-3 M905.6,299.0 l2,2 M913.7,306.4 l2.6,-3 M914.0,303.9 l2,2 M912.2,307.8 l2.6,-3 M912.5,305.3 l2,2 M907.0,296.9 l2.6,-3 M907.3,294.4 l2,2 M909.1,298.4 l2.6,-3 M909.4,295.9 l2,2 M906.3,300.3 l2.6,-3 M906.6,297.8 l2,2 M911.2,301.4 l2.6,-3 M911.5,298.9 l2,2 M907.5,306.2 l2.6,-3 M907.8,303.7 l2,2 M915.5,300.8 l2.6,-3 M915.8,298.3 l2,2 M913.3,318.8 l2.6,-3 M913.6,316.3 l2,2 M919.7,318.9 l2.6,-3 M920.0,316.4 l2,2 M918.4,324.2 l2.6,-3 M918.7,321.7 l2,2 M915.2,326.4 l2.6,-3 M915.5,323.9 l2,2 M912.9,319.9 l2.6,-3 M913.2,317.4 l2,2 M916.3,318.7 l2.6,-3 M916.6,316.2 l2,2 M919.3,320.9 l2.6,-3 M919.6,318.4 l2,2 M913.8,319.0 l2.6,-3 M914.1,316.5 l2,2 M917.7,323.0 l2.6,-3 M918.0,320.5 l2,2 M917.7,325.1 l2.6,-3 M918.0,322.6 l2,2 M919.2,328.1 l2.6,-3 M919.5,325.6 l2,2 M850.8,380.1 l2.6,-3 M851.1,377.6 l2,2 M849.6,379.9 l2.6,-3 M849.9,377.4 l2,2 M846.8,382.3 l2.6,-3 M847.1,379.8 l2,2 M851.0,379.9 l2.6,-3 M851.3,377.4 l2,2 M848.3,381.3 l2.6,-3 M848.6,378.8 l2,2 M850.9,382.7 l2.6,-3 M851.2,380.2 l2,2 M932.3,435.6 l2.6,-3 M932.6,433.1 l2,2 M929.2,436.2 l2.6,-3 M929.5,433.7 l2,2 M936.4,424.9 l2.6,-3 M936.7,422.4 l2,2 M936.8,435.1 l2.6,-3 M937.1,432.6 l2,2 M925.5,430.8 l2.6,-3 M925.8,428.3 l2,2 M932.5,438.1 l2.6,-3 M932.8,435.6 l2,2 M929.0,432.6 l2.6,-3 M929.3,430.1 l2,2 M936.0,436.2 l2.6,-3 M936.3,433.7 l2,2 M936.9,430.9 l2.6,-3 M937.2,428.4 l2,2 M932.8,426.8 l2.6,-3 M933.1,424.3 l2,2 M933.8,436.6 l2.6,-3 M934.1,434.1 l2,2 M932.7,435.0 l2.6,-3 M933.0,432.5 l2,2 M926.7,437.9 l2.6,-3 M927.0,435.4 l2,2 M937.4,439.1 l2.6,-3 M937.7,436.6 l2,2 M931.2,436.2 l2.6,-3 M931.5,433.7 l2,2 M928.2,438.1 l2.6,-3 M928.5,435.6 l2,2 M935.7,429.1 l2.6,-3 M936.0,426.6 l2,2 M924.9,430.6 l2.6,-3 M925.2,428.1 l2,2 M931.4,435.8 l2.6,-3 M931.7,433.3 l2,2 M930.5,424.0 l2.6,-3 M930.8,421.5 l2,2 M935.0,424.5 l2.6,-3 M935.3,422.0 l2,2 M934.9,426.3 l2.6,-3 M935.2,423.8 l2,2 M928.4,436.1 l2.6,-3 M928.7,433.6 l2,2 M925.7,425.9 l2.6,-3 M926.0,423.4 l2,2 M930.9,435.1 l2.6,-3 M931.2,432.6 l2,2 M935.5,434.5 l2.6,-3 M935.8,432.0 l2,2 M936.9,431.4 l2.6,-3 M937.2,428.9 l2,2 M937.0,424.9 l2.6,-3 M937.3,422.4 l2,2 M926.8,431.9 l2.6,-3 M927.1,429.4 l2,2 M927.8,435.2 l2.6,-3 M928.1,432.7 l2,2 M932.6,431.9 l2.6,-3 M932.9,429.4 l2,2 M935.5,432.5 l2.6,-3 M935.8,430.0 l2,2 M941.8,444.1 l2.6,-3 M942.1,441.6 l2,2 M947.2,450.3 l2.6,-3 M947.5,447.8 l2,2 M940.8,449.7 l2.6,-3 M941.1,447.2 l2,2 M948.4,445.8 l2.6,-3 M948.7,443.3 l2,2 M944.4,441.9 l2.6,-3 M944.7,439.4 l2,2 M944.1,445.5 l2.6,-3 M944.4,443.0 l2,2 M944.8,439.8 l2.6,-3 M945.1,437.3 l2,2 M948.4,445.7 l2.6,-3 M948.7,443.2 l2,2 M942.7,449.1 l2.6,-3 M943.0,446.6 l2,2 M944.3,445.4 l2.6,-3 M944.6,442.9 l2,2 M945.6,440.3 l2.6,-3 M945.9,437.8 l2,2 M944.1,444.5 l2.6,-3 M944.4,442.0 l2,2 M948.3,450.6 l2.6,-3 M948.6,448.1 l2,2 M941.4,445.2 l2.6,-3 M941.7,442.7 l2,2 M940.0,444.7 l2.6,-3 M940.3,442.2 l2,2 M946.9,450.3 l2.6,-3 M947.2,447.8 l2,2 M943.5,443.3 l2.6,-3 M943.8,440.8 l2,2 M1126.2,274.7 l2.6,-3 M1126.5,272.2 l2,2 M1132.1,269.8 l2.6,-3 M1132.4,267.3 l2,2 M1130.9,268.7 l2.6,-3 M1131.2,266.2 l2,2 M1126.3,270.8 l2.6,-3 M1126.6,268.3 l2,2 M1130.2,271.7 l2.6,-3 M1130.5,269.2 l2,2 M1127.5,274.7 l2.6,-3 M1127.8,272.2 l2,2 M1125.5,275.8 l2.6,-3 M1125.8,273.3 l2,2 M1125.7,273.6 l2.6,-3 M1126.0,271.1 l2,2 M1126.7,270.5 l2.6,-3 M1127.0,268.0 l2,2 M1128.9,272.9 l2.6,-3 M1129.2,270.4 l2,2 M1127.7,272.6 l2.6,-3 M1128.0,270.1 l2,2 " fill="none" stroke="#f00" stroke-width=".8" opacity=".85"/>
<path d="M857,410l8,8m0-8l-8,8M857.9,418.8l8,8m0-8l-8,8M848.1,432.6l8,8m0-8l-8,8M834.3,444.4l8,8m0-8l-8,8M799.9,453.2l8,8m0-8l-8,8M821.6,456.2l8,8m0-8l-8,8M828.4,459.1l8,8m0-8l-8,8M848.1,465l8,8m0-8l-8,8M861.9,449.3l8,8m0-8l-8,8M889.4,411.9l8,8m0-8l-8,8M912,411.9l8,8m0-8l-8,8M911,415.9l8,8m0-8l-8,8M908.1,448.3l8,8m0-8l-8,8M921.9,458.2l8,8m0-8l-8,8M915,468l8,8m0-8l-8,8M930.7,485.7l8,8m0-8l-8,8M920.9,503.4l8,8m0-8l-8,8M899.2,536.8l8,8m0-8l-8,8M910.1,548.6l8,8m0-8l-8,8M933.7,549.6l8,8m0-8l-8,8M940.5,553.5l8,8m0-8l-8,8M952.3,553.5l8,8m0-8l-8,8M980.9,539.8l8,8m0-8l-8,8M979.9,527l8,8m0-8l-8,8M1001.5,516.2l8,8m0-8l-8,8M1004.5,511.3l8,8m0-8l-8,8M1007.4,510.3l8,8m0-8l-8,8M1011.3,502.4l8,8m0-8l-8,8M1004.5,489.6l8,8m0-8l-8,8M998.6,491.6l8,8m0-8l-8,8M988.7,445.4l8,8m0-8l-8,8M980.9,462.1l8,8m0-8l-8,8M996.6,428.7l8,8m0-8l-8,8M1013.3,439.5l8,8m0-8l-8,8M1024.1,438.5l8,8m0-8l-8,8M1033,438.5l8,8m0-8l-8,8M1044.8,434.6l8,8m0-8l-8,8M1051.7,419.8l8,8m0-8l-8,8M1040.8,463.1l8,8m0-8l-8,8M1043.8,459.1l8,8m0-8l-8,8M1067.4,462.1l8,8m0-8l-8,8M1063.5,477.8l8,8m0-8l-8,8M1040.8,474.9l8,8m0-8l-8,8M1056.6,486.7l8,8m0-8l-8,8M1096.9,485.7l8,8m0-8l-8,8M1121.5,485.7l8,8m0-8l-8,8M1128.4,485.7l8,8m0-8l-8,8M1134.2,486.1l8,8m0-8l-8,8M1138.2,484.7l8,8m0-8l-8,8M876.6,554.5l8,8m0-8l-8,8M935.6,578.1l8,8m0-8l-8,8M958.2,573.2l8,8m0-8l-8,8M798,592.9l8,8m0-8l-8,8M1243.2,487.7l8,8m0-8l-8,8M1249.1,491.6l8,8m0-8l-8,8M1257,491.6l8,8m0-8l-8,8M1237.3,509.3l8,8m0-8l-8,8M1281.5,510.3l8,8m0-8l-8,8M1294.3,518.1l8,8m0-8l-8,8M1318.9,530.5l8,8m0-8l-8,8M1348.4,540.4l8,8m0-8l-8,8M1356.3,543.7l8,8m0-8l-8,8M1382.8,549l8,8m0-8l-8,8M1393.6,550.6l8,8m0-8l-8,8M1421.2,553.5l8,8m0-8l-8,8M1509.7,556.1l8,8m0-8l-8,8M1559.8,552.6l8,8m0-8l-8,8M1575.5,558.9l8,8m0-8l-8,8M1582.4,565.3l8,8m0-8l-8,8M1297.3,545.7l8,8m0-8l-8,8M1294.3,549.6l8,8m0-8l-8,8M1279.6,564l8,8m0-8l-8,8M1243.2,581.1l8,8m0-8l-8,8M1216.6,605.7l8,8m0-8l-8,8M1227.5,613.5l8,8m0-8l-8,8M1305.1,579.1l8,8m0-8l-8,8M1312,576.2l8,8m0-8l-8,8M1329.7,571.2l8,8m0-8l-8,8M1599.9,582.1l8,8m0-8l-8,8M1604.8,585l8,8m0-8l-8,8M1611.7,588.9l8,8m0-8l-8,8M1619.6,588l8,8m0-8l-8,8M1631.4,583.6l8,8m0-8l-8,8M1644.2,582.1l8,8m0-8l-8,8M1663.8,587l8,8m0-8l-8,8M1633.4,611.6l8,8m0-8l-8,8M1622.5,660.7l8,8m0-8l-8,8M1798.6,412.9l8,8m0-8l-8,8M1797.6,417.8l8,8m0-8l-8,8M1798.6,420.8l8,8m0-8l-8,8M1793.6,432.6l8,8m0-8l-8,8M1797.6,440.5l8,8m0-8l-8,8M1622.9,664l8,8m0-8l-8,8M1688.4,725.9l8,8m0-8l-8,8M1676.6,747l8,8m0-8l-8,8M1642.6,786.3l8,8m0-8l-8,8M1621.6,790.8l8,8m0-8l-8,8M1612.7,813.4l8,8m0-8l-8,8M1612.7,829.2l8,8m0-8l-8,8M1605.8,845.9l8,8m0-8l-8,8M1605.4,844.8l8,8m0-8l-8,8M1570,853.3l8,8m0-8l-8,8M1465.8,877.3l8,8m0-8l-8,8M1428.4,885.2l8,8m0-8l-8,8M1415.7,900.9l8,8m0-8l-8,8M1422.5,940.2l8,8m0-8l-8,8M1491.8,994.3l8,8m0-8l-8,8M1593.6,971.7l8,8m0-8l-8,8M1042.2,838l8,8m0-8l-8,8M1027.5,849.8l8,8m0-8l-8,8M1003.9,868.4l8,8m0-8l-8,8M996,889.1l8,8m0-8l-8,8M997,900.9l8,8m0-8l-8,8M1000.9,911.7l8,8m0-8l-8,8M1029.4,933.3l8,8m0-8l-8,8M1053,946.1l8,8m0-8l-8,8M1062.9,949.1l8,8m0-8l-8,8M1072.7,950.1l8,8m0-8l-8,8M1084.5,949.1l8,8m0-8l-8,8M1114.6,946.1l8,8m0-8l-8,8M1134.6,955l8,8m0-8l-8,8M1138.6,959.9l8,8m0-8l-8,8M1145.9,951l8,8m0-8l-8,8M1156.9,956.9l8,8m0-8l-8,8M1166.7,959.9l8,8m0-8l-8,8M1181.4,963.8l8,8m0-8l-8,8M1208.4,912.7l8,8m0-8l-8,8M1306.7,943.8l8,8m0-8l-8,8M1301.8,970.7l8,8m0-8l-8,8M1286.1,976.6l8,8m0-8l-8,8M1369.6,947.1l8,8m0-8l-8,8M1387.3,962.8l8,8m0-8l-8,8M845.2,804.6l8,8m0-8l-8,8M860.9,800.6l8,8m0-8l-8,8M877.6,794.7l8,8m0-8l-8,8M886.5,807.9l8,8m0-8l-8,8M914.6,808.5l8,8m0-8l-8,8M928.7,802l8,8m0-8l-8,8M949.4,800.2l8,8m0-8l-8,8M998.6,813.4l8,8m0-8l-8,8M1004.1,813.8l8,8m0-8l-8,8M1025.7,827.2l8,8m0-8l-8,8M1042.8,837l8,8m0-8l-8,8M1027.7,850.4l8,8m0-8l-8,8M1003.5,868.5l8,8m0-8l-8,8M995,888.5l8,8m0-8l-8,8M995.6,900.9l8,8m0-8l-8,8M1000.5,911.8l8,8m0-8l-8,8M846.1,819.3l8,8m0-8l-8,8M844.2,829.2l8,8m0-8l-8,8M838.3,841l8,8m0-8l-8,8M848.1,807.5l8,8m0-8l-8,8M710.7,703.3l8,8m0-8l-8,8M727.4,683.6l8,8m0-8l-8,8M750,662l8,8m0-8l-8,8M681.2,750.5l8,8m0-8l-8,8M686.1,760.3l8,8m0-8l-8,8M689,778l8,8m0-8l-8,8M688,787.9l8,8m0-8l-8,8M687.1,795.7l8,8m0-8l-8,8M682.1,802.6l8,8m0-8l-8,8M674.3,819.3l8,8m0-8l-8,8M668.4,834.1l8,8m0-8l-8,8M662.5,860.6l8,8m0-8l-8,8M664.4,875.4l8,8m0-8l-8,8M671.3,885.2l8,8m0-8l-8,8M681.2,889.1l8,8m0-8l-8,8M715.6,903.5l8,8m0-8l-8,8M723.4,904.3l8,8m0-8l-8,8M731.3,903.9l8,8m0-8l-8,8M751.9,897l8,8m0-8l-8,8M788.3,878.3l8,8m0-8l-8,8M774.6,445.4l8,8m0-8l-8,8M764.7,456.8l8,8m0-8l-8,8M771.6,463.7l8,8m0-8l-8,8M781.4,463.1l8,8m0-8l-8,8M788.3,540.8l8,8m0-8l-8,8M775.5,585.6l8,8m0-8l-8,8M784.4,630.2l8,8m0-8l-8,8M770.6,633.2l8,8m0-8l-8,8M746,659.7l8,8m0-8l-8,8M801.5,521.4l8,8m0-8l-8,8M822.7,533.8l8,8m0-8l-8,8M788.2,540.7l8,8m0-8l-8,8M810.9,567.8l8,8m0-8l-8,8M775.4,585.5l8,8m0-8l-8,8M797.6,593.9l8,8m0-8l-8,8M876.5,553.5l8,8m0-8l-8,8M847.9,597.9l8,8m0-8l-8,8M843.4,608.2l8,8m0-8l-8,8M784.8,629.9l8,8m0-8l-8,8M771,633.4l8,8m0-8l-8,8M802,609.7l8,8m0-8l-8,8M805.5,609.2l8,8m0-8l-8,8M808.4,609.2l8,8m0-8l-8,8M811.4,608.7l8,8m0-8l-8,8M814.3,608.7l8,8m0-8l-8,8M816.8,608.2l8,8m0-8l-8,8M819.3,608.2l8,8m0-8l-8,8M825.2,605.7l8,8m0-8l-8,8M887.2,235.6l8,8m0-8l-8,8M845.9,276.9l8,8m0-8l-8,8M829.6,293.2l8,8m0-8l-8,8M844.4,309.4l8,8m0-8l-8,8M832.6,316.8l8,8m0-8l-8,8M832.6,324.1l8,8m0-8l-8,8M840,343.3l8,8m0-8l-8,8M834.9,369.9l8,8m0-8l-8,8M841.4,397.9l8,8m0-8l-8,8M856.2,408.2l8,8m0-8l-8,8M857.7,418.5l8,8m0-8l-8,8M848.8,433.3l8,8m0-8l-8,8M835.5,443.6l8,8m0-8l-8,8M820.8,456.9l8,8m0-8l-8,8M829.6,458.4l8,8m0-8l-8,8M848.8,464.3l8,8m0-8l-8,8M863.6,449.5l8,8m0-8l-8,8M764.7,456.9l8,8m0-8l-8,8M772.1,463.4l8,8m0-8l-8,8M782.4,462.8l8,8m0-8l-8,8M773.6,445.1l8,8m0-8l-8,8M800.1,452.5l8,8m0-8l-8,8M801.6,521.8l8,8m0-8l-8,8M822.3,532.1l8,8m0-8l-8,8M868,397.9l8,8m0-8l-8,8M862.1,400.8l8,8m0-8l-8,8M977.1,352.2l8,8m0-8l-8,8M990.4,377.2l8,8m0-8l-8,8M921.1,397.9l8,8m0-8l-8,8M909.3,406.7l8,8m0-8l-8,8M907.8,448l8,8m0-8l-8,8M922.5,458.4l8,8m0-8l-8,8M915.2,467.2l8,8m0-8l-8,8M929.9,486.4l8,8m0-8l-8,8M921.1,504.1l8,8m0-8l-8,8M988.9,445.1l8,8m0-8l-8,8M981.5,462.8l8,8m0-8l-8,8M1011,193l8,8m0-8l-8,8M1049,197.7l8,8m0-8l-8,8M995.3,207.5l8,8m0-8l-8,8M1053.3,211.1l8,8m0-8l-8,8M1090.7,181.6l8,8m0-8l-8,8M1106.8,227.8l8,8m0-8l-8,8M1130,242.5l8,8m0-8l-8,8M1152.6,220.9l8,8m0-8l-8,8M1070.6,260.2l8,8m0-8l-8,8M1104.5,292.3l8,8m0-8l-8,8M1081.8,313.3l8,8m0-8l-8,8M1034.6,314.3l8,8m0-8l-8,8M1008.5,335.4l8,8m0-8l-8,8M998.7,340.9l8,8m0-8l-8,8M977.6,352.1l8,8m0-8l-8,8M971.7,359.5l8,8m0-8l-8,8M946.1,369.4l8,8m0-8l-8,8M990.4,376.6l8,8m0-8l-8,8M1002.6,381.2l8,8m0-8l-8,8M1019.5,376.3l8,8m0-8l-8,8M1037.2,384.5l8,8m0-8l-8,8M921.6,397.9l8,8m0-8l-8,8M916.6,396.9l8,8m0-8l-8,8M920.6,404.8l8,8m0-8l-8,8M1045.9,286.8l8,8m0-8l-8,8M1051.4,290.7l8,8m0-8l-8,8M1016.9,312.3l8,8m0-8l-8,8M902.9,302.5l8,8m0-8l-8,8M1122.2,259.2l8,8m0-8l-8,8M1125.1,270.1l8,8m0-8l-8,8M1120.2,269.1l8,8m0-8l-8,8M1118.2,285.8l8,8m0-8l-8,8M1124.1,286.8l8,8m0-8l-8,8M1576.4,166.7l8,8m0-8l-8,8M1578.7,170.1l8,8m0-8l-8,8M1578.8,174.3l8,8m0-8l-8,8M1582.2,178.2l8,8m0-8l-8,8M1591.4,181.1l8,8m0-8l-8,8M1594,188.3l8,8m0-8l-8,8M1598.1,192l8,8m0-8l-8,8M1603.3,189.4l8,8m0-8l-8,8M1603.5,192.4l8,8m0-8l-8,8M1610.4,198.3l8,8m0-8l-8,8M1615.3,200.4l8,8m0-8l-8,8M1615.7,199.6l8,8m0-8l-8,8M1625.8,198.1l8,8m0-8l-8,8M1630.8,196.6l8,8m0-8l-8,8M1638.4,194.6l8,8m0-8l-8,8M1642.2,197.6l8,8m0-8l-8,8M1647.9,197.6l8,8m0-8l-8,8M1580.8,167.6l8,8m0-8l-8,8M1587.9,164.2l8,8m0-8l-8,8M1599.2,171.8l8,8m0-8l-8,8M1603.1,175.5l8,8m0-8l-8,8M1609.9,175.4l8,8m0-8l-8,8M1619.8,178.3l8,8m0-8l-8,8M1617.7,182.1l8,8m0-8l-8,8M1630.9,185.4l8,8m0-8l-8,8M1630.2,185.8l8,8m0-8l-8,8M1635.4,183.7l8,8m0-8l-8,8M1638.4,191l8,8m0-8l-8,8M1645.8,190.3l8,8m0-8l-8,8M1587,166.6l8,8m0-8l-8,8M1598.6,170.2l8,8m0-8l-8,8M1602.5,167.9l8,8m0-8l-8,8M1611.9,172.6l8,8m0-8l-8,8M1613,167l8,8m0-8l-8,8M1624.2,170.2l8,8m0-8l-8,8M1628.7,169.1l8,8m0-8l-8,8M1641.8,173.8l8,8m0-8l-8,8M1651,171.8l8,8m0-8l-8,8M1654.7,174.7l8,8m0-8l-8,8M1669.5,174.5l8,8m0-8l-8,8M1671.5,170.6l8,8m0-8l-8,8M1615.2,175l8,8m0-8l-8,8M1619.9,179.1l8,8m0-8l-8,8M1623.7,180.1l8,8m0-8l-8,8M1632.6,182.1l8,8m0-8l-8,8M1643.8,188l8,8m0-8l-8,8M1644.4,191.3l8,8m0-8l-8,8M1653.3,199.1l8,8m0-8l-8,8M1653.8,194.4l8,8m0-8l-8,8M1654.6,198l8,8m0-8l-8,8M1657.2,202l8,8m0-8l-8,8M1660.7,208l8,8m0-8l-8,8M1658,213.8l8,8m0-8l-8,8M1660.4,219.1l8,8m0-8l-8,8M1655.8,216.7l8,8m0-8l-8,8M1651.5,222.8l8,8m0-8l-8,8M1647.2,224.1l8,8m0-8l-8,8M1646.3,227.2l8,8m0-8l-8,8M1669.5,215.9l8,8m0-8l-8,8M1675.2,215.2l8,8m0-8l-8,8M1681.1,217.2l8,8m0-8l-8,8M1700.6,226.4l8,8m0-8l-8,8M1711.9,231.3l8,8m0-8l-8,8M1712.3,227.8l8,8m0-8l-8,8M1720.3,233.1l8,8m0-8l-8,8M1737.8,246.3l8,8m0-8l-8,8M1744.1,248.6l8,8m0-8l-8,8M1754.2,256.5l8,8m0-8l-8,8M1762.9,254.7l8,8m0-8l-8,8M1688.7,200.2l8,8m0-8l-8,8M1697.3,201l8,8m0-8l-8,8M1705,205.2l8,8m0-8l-8,8M1702,213.5l8,8m0-8l-8,8M1703.1,222.2l8,8m0-8l-8,8M1731.5,171.4l8,8m0-8l-8,8M1725.2,173.8l8,8m0-8l-8,8M1720.5,189.1l8,8m0-8l-8,8M1726.5,199.1l8,8m0-8l-8,8M1726.1,202.1l8,8m0-8l-8,8M1743.4,186.3l8,8m0-8l-8,8M1749,181.3l8,8m0-8l-8,8M1757.4,186.5l8,8m0-8l-8,8M1759.4,191.4l8,8m0-8l-8,8M1748.1,194.1l8,8m0-8l-8,8M1775.1,165.4l8,8m0-8l-8,8M1779.2,171.2l8,8m0-8l-8,8M1788.6,175.1l8,8m0-8l-8,8M1794.2,179.6l8,8m0-8l-8,8M1804.1,176.7l8,8m0-8l-8,8M1806,178.5l8,8m0-8l-8,8M1815.8,183.5l8,8m0-8l-8,8M1826,186.6l8,8m0-8l-8,8M1827.8,191l8,8m0-8l-8,8M1828.4,197.1l8,8m0-8l-8,8M1830.4,203.7l8,8m0-8l-8,8M1830.6,207.8l8,8m0-8l-8,8M1832.4,216.4l8,8m0-8l-8,8M1826.8,216.7l8,8m0-8l-8,8M1825.6,218.9l8,8m0-8l-8,8M1826.5,233.5l8,8m0-8l-8,8M1825,235.2l8,8m0-8l-8,8M1827.5,245.7l8,8m0-8l-8,8M1828.5,249.5l8,8m0-8l-8,8M1825,260.5l8,8m0-8l-8,8M1818.3,262.5l8,8m0-8l-8,8M1813.3,268.1l8,8m0-8l-8,8M1809.8,278.1l8,8m0-8l-8,8M1808.6,281.1l8,8m0-8l-8,8M1808.7,284.7l8,8m0-8l-8,8M1803.4,296.5l8,8m0-8l-8,8M1797.5,290.3l8,8m0-8l-8,8M1788.5,299.9l8,8m0-8l-8,8M1790.7,310.8l8,8m0-8l-8,8M1761.7,212.5l8,8m0-8l-8,8M1776.7,208.6l8,8m0-8l-8,8M1780.7,211.3l8,8m0-8l-8,8M1789.8,213l8,8m0-8l-8,8M1795.5,217.7l8,8m0-8l-8,8M1805.3,216.7l8,8m0-8l-8,8M1809.8,230.6l8,8m0-8l-8,8M1811.8,230.9l8,8m0-8l-8,8M1805.6,228.8l8,8m0-8l-8,8M1801.1,230.6l8,8m0-8l-8,8M1798.1,230.3l8,8m0-8l-8,8M1786.8,226.8l8,8m0-8l-8,8M1800.3,177.8l8,8m0-8l-8,8M1810.5,187.2l8,8m0-8l-8,8M1811.7,191.2l8,8m0-8l-8,8M1807.8,202.5l8,8m0-8l-8,8M1786,266.3l8,8m0-8l-8,8M1785.9,270.7l8,8m0-8l-8,8M1772.3,274.1l8,8m0-8l-8,8M1584.4,262.6l8,8m0-8l-8,8M1594.2,262.8l8,8m0-8l-8,8M1619.4,259.2l8,8m0-8l-8,8M1636.3,287.6l8,8m0-8l-8,8M1634.7,296.9l8,8m0-8l-8,8M1635.8,315.8l8,8m0-8l-8,8M1647.5,320.9l8,8m0-8l-8,8M1638.7,323.3l8,8m0-8l-8,8M1631.2,326.6l8,8m0-8l-8,8M1577.6,270l8,8m0-8l-8,8M1575.8,272l8,8m0-8l-8,8M1570.2,282.5l8,8m0-8l-8,8M1568.2,287.5l8,8m0-8l-8,8M1570.9,297.3l8,8m0-8l-8,8M1570.7,308.7l8,8m0-8l-8,8M1569.9,311.6l8,8m0-8l-8,8M1570.5,319.9l8,8m0-8l-8,8M1571.4,325.4l8,8m0-8l-8,8M1578.9,332.9l8,8m0-8l-8,8M1580.2,336.3l8,8m0-8l-8,8M1587.3,280.9l8,8m0-8l-8,8M1595.1,289.4l8,8m0-8l-8,8M1603,289.5l8,8m0-8l-8,8M1605.2,290.6l8,8m0-8l-8,8M1617.9,291.3l8,8m0-8l-8,8M1630.3,290.1l8,8m0-8l-8,8M1633.3,292.3l8,8m0-8l-8,8M1519.1,291.6l8,8m0-8l-8,8M1534.8,297.2l8,8m0-8l-8,8M1546.3,297.6l8,8m0-8l-8,8M1554.5,301.5l8,8m0-8l-8,8M1566.1,304.4l8,8m0-8l-8,8M1508.6,303.8l8,8m0-8l-8,8M1518.7,308l8,8m0-8l-8,8M1522.8,316.8l8,8m0-8l-8,8M1540.4,321.6l8,8m0-8l-8,8M1549.5,332l8,8m0-8l-8,8M1565,336.7l8,8m0-8l-8,8M1592.4,316.5l8,8m0-8l-8,8M1602.5,316.5l8,8m0-8l-8,8M1623.7,326.5l8,8m0-8l-8,8M1625.3,327.8l8,8m0-8l-8,8M1592.3,331.3l8,8m0-8l-8,8M1598.4,336.4l8,8m0-8l-8,8M1602.5,340l8,8m0-8l-8,8M1609.5,338.3l8,8m0-8l-8,8M1616.1,343.5l8,8m0-8l-8,8M1617.3,346.6l8,8m0-8l-8,8M1618,351.3l8,8m0-8l-8,8M1618.1,356.2l8,8m0-8l-8,8M1626.1,358.2l8,8m0-8l-8,8M1630.6,363.6l8,8m0-8l-8,8M1634.9,371.6l8,8m0-8l-8,8M1634.5,368.3l8,8m0-8l-8,8M1643.5,368l8,8m0-8l-8,8M1643.5,364.6l8,8m0-8l-8,8M1651.5,365.4l8,8m0-8l-8,8M1655.1,362.9l8,8m0-8l-8,8M1658.2,363l8,8m0-8l-8,8M1671.2,364.9l8,8m0-8l-8,8M1675.6,366.9l8,8m0-8l-8,8M1679.5,361.9l8,8m0-8l-8,8M1683.3,370.9l8,8m0-8l-8,8M1686.4,368.5l8,8m0-8l-8,8M1689.5,371l8,8m0-8l-8,8M1692.4,371.3l8,8m0-8l-8,8M1611,339.2l8,8m0-8l-8,8M1614.5,339.9l8,8m0-8l-8,8M1613.4,344l8,8m0-8l-8,8M1622.3,351.1l8,8m0-8l-8,8M1632.1,355.3l8,8m0-8l-8,8M1689.5,368.6l8,8m0-8l-8,8M1698.5,353.9l8,8m0-8l-8,8M1705.7,346.9l8,8m0-8l-8,8M1714,330.7l8,8m0-8l-8,8M1719.5,322.5l8,8m0-8l-8,8M1722.1,319.4l8,8m0-8l-8,8M1716.4,353.5l8,8m0-8l-8,8M1722.1,331l8,8m0-8l-8,8M1726.5,324.4l8,8m0-8l-8,8M1725.2,289.2l8,8m0-8l-8,8M1784.2,329.8l8,8m0-8l-8,8M1789.8,340.9l8,8m0-8l-8,8M1789.9,344.9l8,8m0-8l-8,8M1794.6,372.1l8,8m0-8l-8,8M1791.4,392l8,8m0-8l-8,8M1796.3,412.1l8,8m0-8l-8,8M1799.6,420.2l8,8m0-8l-8,8M1797.6,424l8,8m0-8l-8,8M1795.1,439.3l8,8m0-8l-8,8M1787.8,293.2l8,8m0-8l-8,8M1790.9,299.3l8,8m0-8l-8,8M1788.8,301.7l8,8m0-8l-8,8M1790,305.6l8,8m0-8l-8,8M1683.3,341.2l8,8m0-8l-8,8M1689.2,286.5l8,8m0-8l-8,8M1768.8,273.2l8,8m0-8l-8,8M1720.6,230.5l8,8m0-8l-8,8M1583.9,162.9l8,8m0-8l-8,8M1602.7,164.8l8,8m0-8l-8,8M1619.7,162.1l8,8m0-8l-8,8M1629.9,164.8l8,8m0-8l-8,8M1639.6,163.5l8,8m0-8l-8,8M1660.1,162.1l8,8m0-8l-8,8M1677,162.1l8,8m0-8l-8,8M1680.4,163.3l8,8m0-8l-8,8M1700.8,165.7l8,8m0-8l-8,8M1718.1,162.1l8,8m0-8l-8,8M1735.1,165.7l8,8m0-8l-8,8M1740.9,165.3l8,8m0-8l-8,8M1761.4,163.6l8,8m0-8l-8,8M1771.1,163l8,8m0-8l-8,8M1587.1,166.7l8,8m0-8l-8,8M1588.5,172.7l8,8m0-8l-8,8M1594.6,164.8l8,8m0-8l-8,8M1612.2,170.5l8,8m0-8l-8,8M1623.4,170.2l8,8m0-8l-8,8M1622.4,169.8l8,8m0-8l-8,8M1632,166.9l8,8m0-8l-8,8M1641.1,164l8,8m0-8l-8,8M1646.6,163.6l8,8m0-8l-8,8M1665.7,162.3l8,8m0-8l-8,8M1676,167.8l8,8m0-8l-8,8M1688.2,172.1l8,8m0-8l-8,8M1688.1,173.2l8,8m0-8l-8,8M1697.7,180l8,8m0-8l-8,8M1703.2,184.4l8,8m0-8l-8,8M1716.1,185.4l8,8m0-8l-8,8M1713.4,194l8,8m0-8l-8,8M1728.1,198.9l8,8m0-8l-8,8M1732.5,204.3l8,8m0-8l-8,8M1741.7,209.5l8,8m0-8l-8,8M1747.6,207.5l8,8m0-8l-8,8M1763.4,216.5l8,8m0-8l-8,8M1765.3,216.6l8,8m0-8l-8,8M1777.6,224.2l8,8m0-8l-8,8M1732.4,198.1l8,8m0-8l-8,8M1745.4,194.4l8,8m0-8l-8,8M1752.6,197.6l8,8m0-8l-8,8M1759.8,191.3l8,8m0-8l-8,8M1763.8,193l8,8m0-8l-8,8M1769.9,190.3l8,8m0-8l-8,8M1776.8,178.6l8,8m0-8l-8,8M1804.1,243l8,8m0-8l-8,8M1813.2,232.8l8,8m0-8l-8,8M1809.4,232.6l8,8m0-8l-8,8M1818.5,225.8l8,8m0-8l-8,8M1765.8,211.8l8,8m0-8l-8,8M1776.5,214.6l8,8m0-8l-8,8M1779.7,213.2l8,8m0-8l-8,8M1782.3,224.6l8,8m0-8l-8,8M1784.6,225.3l8,8m0-8l-8,8M1801.1,203.8l8,8m0-8l-8,8M1802.5,212.4l8,8m0-8l-8,8M1807,215.3l8,8m0-8l-8,8M1819.6,212.3l8,8m0-8l-8,8M1822.3,221.1l8,8m0-8l-8,8M1820.8,223l8,8m0-8l-8,8M1805.6,257.1l8,8m0-8l-8,8M1819.6,253.4l8,8m0-8l-8,8M1822.1,243.7l8,8m0-8l-8,8M1827.2,237.4l8,8m0-8l-8,8M1788.5,288.6l8,8m0-8l-8,8M1788.9,292l8,8m0-8l-8,8M1799.2,291.4l8,8m0-8l-8,8M1799,284.3l8,8m0-8l-8,8M1808.1,277.8l8,8m0-8l-8,8M1666.7,172.3l8,8m0-8l-8,8M1658.7,181.1l8,8m0-8l-8,8M1610.3,171.1l8,8m0-8l-8,8M1615,176.9l8,8m0-8l-8,8M1618.8,186.3l8,8m0-8l-8,8M1627.4,185.7l8,8m0-8l-8,8M1637.3,193.4l8,8m0-8l-8,8M1638,194.1l8,8m0-8l-8,8M1640.5,199.6l8,8m0-8l-8,8M1690.8,198.6l8,8m0-8l-8,8M1693.5,202.2l8,8m0-8l-8,8M1695.4,207.3l8,8m0-8l-8,8M1698.4,213.1l8,8m0-8l-8,8M1703.9,211.3l8,8m0-8l-8,8M1707.9,221.6l8,8m0-8l-8,8M1569.3,290.1l8,8m0-8l-8,8M1570.3,295.1l8,8m0-8l-8,8M1576.8,305.5l8,8m0-8l-8,8M1575.7,306.6l8,8m0-8l-8,8M1572.9,322.7l8,8m0-8l-8,8M1576,319.5l8,8m0-8l-8,8M1581.1,333.6l8,8m0-8l-8,8M1578.7,334.1l8,8m0-8l-8,8M1581.4,319l8,8m0-8l-8,8M1591.9,327.9l8,8m0-8l-8,8M1600.2,321.4l8,8m0-8l-8,8M1548.2,326.3l8,8m0-8l-8,8M1561.1,338.4l8,8m0-8l-8,8" fill="none" stroke="#f00" stroke-width="1.05" opacity=".55"/>
<path d="M857,410l8,8m0-8l-8,8M799.9,453.2l8,8m0-8l-8,8M889.4,411.9l8,8m0-8l-8,8M912,411.9l8,8m0-8l-8,8M921.9,458.2l8,8m0-8l-8,8M930.7,485.7l8,8m0-8l-8,8M920.9,503.4l8,8m0-8l-8,8M899.2,536.8l8,8m0-8l-8,8M980.9,539.8l8,8m0-8l-8,8M979.9,527l8,8m0-8l-8,8M1004.5,511.3l8,8m0-8l-8,8M1004.5,489.6l8,8m0-8l-8,8M988.7,445.4l8,8m0-8l-8,8M1044.8,434.6l8,8m0-8l-8,8M1051.7,419.8l8,8m0-8l-8,8M1043.8,459.1l8,8m0-8l-8,8M1063.5,477.8l8,8m0-8l-8,8M1138.2,484.7l8,8m0-8l-8,8M958.2,573.2l8,8m0-8l-8,8M1348.4,540.4l8,8m0-8l-8,8M1356.3,543.7l8,8m0-8l-8,8M1582.4,565.3l8,8m0-8l-8,8M1243.2,581.1l8,8m0-8l-8,8M1216.6,605.7l8,8m0-8l-8,8M1599.9,582.1l8,8m0-8l-8,8M1604.8,585l8,8m0-8l-8,8M1611.7,588.9l8,8m0-8l-8,8M1642.6,786.3l8,8m0-8l-8,8M1612.7,813.4l8,8m0-8l-8,8M1612.7,829.2l8,8m0-8l-8,8M1428.4,885.2l8,8m0-8l-8,8M1415.7,900.9l8,8m0-8l-8,8M1422.5,940.2l8,8m0-8l-8,8M1593.6,971.7l8,8m0-8l-8,8M1042.2,838l8,8m0-8l-8,8M1029.4,933.3l8,8m0-8l-8,8M1084.5,949.1l8,8m0-8l-8,8M1114.6,946.1l8,8m0-8l-8,8M1306.7,943.8l8,8m0-8l-8,8M1286.1,976.6l8,8m0-8l-8,8M1387.3,962.8l8,8m0-8l-8,8M877.6,794.7l8,8m0-8l-8,8M998.6,813.4l8,8m0-8l-8,8M1027.7,850.4l8,8m0-8l-8,8M1003.5,868.5l8,8m0-8l-8,8M995,888.5l8,8m0-8l-8,8M995.6,900.9l8,8m0-8l-8,8M846.1,819.3l8,8m0-8l-8,8M848.1,807.5l8,8m0-8l-8,8M727.4,683.6l8,8m0-8l-8,8M681.2,750.5l8,8m0-8l-8,8M686.1,760.3l8,8m0-8l-8,8M689,778l8,8m0-8l-8,8M674.3,819.3l8,8m0-8l-8,8M681.2,889.1l8,8m0-8l-8,8M723.4,904.3l8,8m0-8l-8,8M751.9,897l8,8m0-8l-8,8M774.6,445.4l8,8m0-8l-8,8M771.6,463.7l8,8m0-8l-8,8M781.4,463.1l8,8m0-8l-8,8M775.5,585.6l8,8m0-8l-8,8M770.6,633.2l8,8m0-8l-8,8M788.2,540.7l8,8m0-8l-8,8M847.9,597.9l8,8m0-8l-8,8M802,609.7l8,8m0-8l-8,8M814.3,608.7l8,8m0-8l-8,8M819.3,608.2l8,8m0-8l-8,8M825.2,605.7l8,8m0-8l-8,8M887.2,235.6l8,8m0-8l-8,8M832.6,324.1l8,8m0-8l-8,8M848.8,433.3l8,8m0-8l-8,8M835.5,443.6l8,8m0-8l-8,8M829.6,458.4l8,8m0-8l-8,8M782.4,462.8l8,8m0-8l-8,8M868,397.9l8,8m0-8l-8,8M981.5,462.8l8,8m0-8l-8,8M1130,242.5l8,8m0-8l-8,8M1152.6,220.9l8,8m0-8l-8,8M1070.6,260.2l8,8m0-8l-8,8M1081.8,313.3l8,8m0-8l-8,8M1008.5,335.4l8,8m0-8l-8,8M998.7,340.9l8,8m0-8l-8,8M990.4,376.6l8,8m0-8l-8,8M1037.2,384.5l8,8m0-8l-8,8M1045.9,286.8l8,8m0-8l-8,8M1016.9,312.3l8,8m0-8l-8,8M902.9,302.5l8,8m0-8l-8,8M1125.1,270.1l8,8m0-8l-8,8M1118.2,285.8l8,8m0-8l-8,8M1576.4,166.7l8,8m0-8l-8,8M1578.7,170.1l8,8m0-8l-8,8M1582.2,178.2l8,8m0-8l-8,8M1591.4,181.1l8,8m0-8l-8,8M1598.1,192l8,8m0-8l-8,8M1603.3,189.4l8,8m0-8l-8,8M1603.5,192.4l8,8m0-8l-8,8M1610.4,198.3l8,8m0-8l-8,8M1615.3,200.4l8,8m0-8l-8,8M1625.8,198.1l8,8m0-8l-8,8M1647.9,197.6l8,8m0-8l-8,8M1580.8,167.6l8,8m0-8l-8,8M1587.9,164.2l8,8m0-8l-8,8M1609.9,175.4l8,8m0-8l-8,8M1619.8,178.3l8,8m0-8l-8,8M1617.7,182.1l8,8m0-8l-8,8M1630.9,185.4l8,8m0-8l-8,8M1630.2,185.8l8,8m0-8l-8,8M1635.4,183.7l8,8m0-8l-8,8M1645.8,190.3l8,8m0-8l-8,8M1587,166.6l8,8m0-8l-8,8M1611.9,172.6l8,8m0-8l-8,8M1613,167l8,8m0-8l-8,8M1624.2,170.2l8,8m0-8l-8,8M1628.7,169.1l8,8m0-8l-8,8M1641.8,173.8l8,8m0-8l-8,8M1651,171.8l8,8m0-8l-8,8M1619.9,179.1l8,8m0-8l-8,8M1623.7,180.1l8,8m0-8l-8,8M1632.6,182.1l8,8m0-8l-8,8M1653.8,194.4l8,8m0-8l-8,8M1654.6,198l8,8m0-8l-8,8M1660.4,219.1l8,8m0-8l-8,8M1651.5,222.8l8,8m0-8l-8,8M1647.2,224.1l8,8m0-8l-8,8M1646.3,227.2l8,8m0-8l-8,8M1669.5,215.9l8,8m0-8l-8,8M1700.6,226.4l8,8m0-8l-8,8M1711.9,231.3l8,8m0-8l-8,8M1712.3,227.8l8,8m0-8l-8,8M1737.8,246.3l8,8m0-8l-8,8M1744.1,248.6l8,8m0-8l-8,8M1754.2,256.5l8,8m0-8l-8,8M1762.9,254.7l8,8m0-8l-8,8M1688.7,200.2l8,8m0-8l-8,8M1702,213.5l8,8m0-8l-8,8M1703.1,222.2l8,8m0-8l-8,8M1725.2,173.8l8,8m0-8l-8,8M1720.5,189.1l8,8m0-8l-8,8M1743.4,186.3l8,8m0-8l-8,8M1749,181.3l8,8m0-8l-8,8M1759.4,191.4l8,8m0-8l-8,8M1748.1,194.1l8,8m0-8l-8,8M1775.1,165.4l8,8m0-8l-8,8M1779.2,171.2l8,8m0-8l-8,8M1794.2,179.6l8,8m0-8l-8,8M1806,178.5l8,8m0-8l-8,8M1815.8,183.5l8,8m0-8l-8,8M1830.6,207.8l8,8m0-8l-8,8M1825.6,218.9l8,8m0-8l-8,8M1827.5,245.7l8,8m0-8l-8,8M1813.3,268.1l8,8m0-8l-8,8M1809.8,278.1l8,8m0-8l-8,8M1788.5,299.9l8,8m0-8l-8,8M1761.7,212.5l8,8m0-8l-8,8M1780.7,211.3l8,8m0-8l-8,8M1795.5,217.7l8,8m0-8l-8,8M1805.6,228.8l8,8m0-8l-8,8M1801.1,230.6l8,8m0-8l-8,8M1798.1,230.3l8,8m0-8l-8,8M1786.8,226.8l8,8m0-8l-8,8M1800.3,177.8l8,8m0-8l-8,8M1811.7,191.2l8,8m0-8l-8,8M1807.8,202.5l8,8m0-8l-8,8M1786,266.3l8,8m0-8l-8,8M1785.9,270.7l8,8m0-8l-8,8M1772.3,274.1l8,8m0-8l-8,8M1584.4,262.6l8,8m0-8l-8,8M1619.4,259.2l8,8m0-8l-8,8M1636.3,287.6l8,8m0-8l-8,8M1635.8,315.8l8,8m0-8l-8,8M1638.7,323.3l8,8m0-8l-8,8M1631.2,326.6l8,8m0-8l-8,8M1577.6,270l8,8m0-8l-8,8M1575.8,272l8,8m0-8l-8,8M1569.9,311.6l8,8m0-8l-8,8M1570.5,319.9l8,8m0-8l-8,8M1571.4,325.4l8,8m0-8l-8,8M1578.9,332.9l8,8m0-8l-8,8M1580.2,336.3l8,8m0-8l-8,8M1587.3,280.9l8,8m0-8l-8,8M1595.1,289.4l8,8m0-8l-8,8M1603,289.5l8,8m0-8l-8,8M1617.9,291.3l8,8m0-8l-8,8M1546.3,297.6l8,8m0-8l-8,8M1554.5,301.5l8,8m0-8l-8,8M1566.1,304.4l8,8m0-8l-8,8M1518.7,308l8,8m0-8l-8,8M1522.8,316.8l8,8m0-8l-8,8M1549.5,332l8,8m0-8l-8,8M1565,336.7l8,8m0-8l-8,8M1623.7,326.5l8,8m0-8l-8,8M1625.3,327.8l8,8m0-8l-8,8M1592.3,331.3l8,8m0-8l-8,8M1602.5,340l8,8m0-8l-8,8M1609.5,338.3l8,8m0-8l-8,8M1616.1,343.5l8,8m0-8l-8,8M1618,351.3l8,8m0-8l-8,8M1634.9,371.6l8,8m0-8l-8,8M1634.5,368.3l8,8m0-8l-8,8M1655.1,362.9l8,8m0-8l-8,8M1675.6,366.9l8,8m0-8l-8,8M1679.5,361.9l8,8m0-8l-8,8M1686.4,368.5l8,8m0-8l-8,8M1692.4,371.3l8,8m0-8l-8,8M1614.5,339.9l8,8m0-8l-8,8M1613.4,344l8,8m0-8l-8,8M1622.3,351.1l8,8m0-8l-8,8M1632.1,355.3l8,8m0-8l-8,8M1698.5,353.9l8,8m0-8l-8,8M1714,330.7l8,8m0-8l-8,8M1722.1,319.4l8,8m0-8l-8,8M1716.4,353.5l8,8m0-8l-8,8M1722.1,331l8,8m0-8l-8,8M1726.5,324.4l8,8m0-8l-8,8M1784.2,329.8l8,8m0-8l-8,8M1789.8,340.9l8,8m0-8l-8,8M1791.4,392l8,8m0-8l-8,8M1790.9,299.3l8,8m0-8l-8,8M1683.3,341.2l8,8m0-8l-8,8M1689.2,286.5l8,8m0-8l-8,8M1583.9,162.9l8,8m0-8l-8,8M1602.7,164.8l8,8m0-8l-8,8M1619.7,162.1l8,8m0-8l-8,8M1639.6,163.5l8,8m0-8l-8,8M1677,162.1l8,8m0-8l-8,8M1680.4,163.3l8,8m0-8l-8,8M1700.8,165.7l8,8m0-8l-8,8M1718.1,162.1l8,8m0-8l-8,8M1735.1,165.7l8,8m0-8l-8,8M1740.9,165.3l8,8m0-8l-8,8M1761.4,163.6l8,8m0-8l-8,8M1587.1,166.7l8,8m0-8l-8,8M1588.5,172.7l8,8m0-8l-8,8M1594.6,164.8l8,8m0-8l-8,8M1612.2,170.5l8,8m0-8l-8,8M1623.4,170.2l8,8m0-8l-8,8M1622.4,169.8l8,8m0-8l-8,8M1646.6,163.6l8,8m0-8l-8,8M1665.7,162.3l8,8m0-8l-8,8M1676,167.8l8,8m0-8l-8,8M1688.2,172.1l8,8m0-8l-8,8M1688.1,173.2l8,8m0-8l-8,8M1703.2,184.4l8,8m0-8l-8,8M1713.4,194l8,8m0-8l-8,8M1728.1,198.9l8,8m0-8l-8,8M1732.5,204.3l8,8m0-8l-8,8M1741.7,209.5l8,8m0-8l-8,8M1747.6,207.5l8,8m0-8l-8,8M1763.4,216.5l8,8m0-8l-8,8M1765.3,216.6l8,8m0-8l-8,8M1732.4,198.1l8,8m0-8l-8,8M1752.6,197.6l8,8m0-8l-8,8M1759.8,191.3l8,8m0-8l-8,8M1763.8,193l8,8m0-8l-8,8M1776.8,178.6l8,8m0-8l-8,8M1813.2,232.8l8,8m0-8l-8,8M1809.4,232.6l8,8m0-8l-8,8M1776.5,214.6l8,8m0-8l-8,8M1779.7,213.2l8,8m0-8l-8,8M1784.6,225.3l8,8m0-8l-8,8M1819.6,212.3l8,8m0-8l-8,8M1822.3,221.1l8,8m0-8l-8,8M1820.8,223l8,8m0-8l-8,8M1822.1,243.7l8,8m0-8l-8,8M1788.5,288.6l8,8m0-8l-8,8M1788.9,292l8,8m0-8l-8,8M1799.2,291.4l8,8m0-8l-8,8M1799,284.3l8,8m0-8l-8,8M1658.7,181.1l8,8m0-8l-8,8M1610.3,171.1l8,8m0-8l-8,8M1615,176.9l8,8m0-8l-8,8M1627.4,185.7l8,8m0-8l-8,8M1637.3,193.4l8,8m0-8l-8,8M1638,194.1l8,8m0-8l-8,8M1690.8,198.6l8,8m0-8l-8,8M1698.4,213.1l8,8m0-8l-8,8M1703.9,211.3l8,8m0-8l-8,8M1707.9,221.6l8,8m0-8l-8,8M1569.3,290.1l8,8m0-8l-8,8M1570.3,295.1l8,8m0-8l-8,8M1576.8,305.5l8,8m0-8l-8,8M1575.7,306.6l8,8m0-8l-8,8M1572.9,322.7l8,8m0-8l-8,8M1581.1,333.6l8,8m0-8l-8,8M1578.7,334.1l8,8m0-8l-8,8M1581.4,319l8,8m0-8l-8,8M1591.9,327.9l8,8m0-8l-8,8M1548.2,326.3l8,8m0-8l-8,8" fill="none" stroke="#f00" stroke-width="1.05" opacity=".55"/>
<path d="M912,411.9l8,8m0-8l-8,8M899.2,536.8l8,8m0-8l-8,8M980.9,539.8l8,8m0-8l-8,8M1051.7,419.8l8,8m0-8l-8,8M1348.4,540.4l8,8m0-8l-8,8M1428.4,885.2l8,8m0-8l-8,8M1084.5,949.1l8,8m0-8l-8,8M1387.3,962.8l8,8m0-8l-8,8M877.6,794.7l8,8m0-8l-8,8M995.6,900.9l8,8m0-8l-8,8M674.3,819.3l8,8m0-8l-8,8M681.2,889.1l8,8m0-8l-8,8M781.4,463.1l8,8m0-8l-8,8M832.6,324.1l8,8m0-8l-8,8M835.5,443.6l8,8m0-8l-8,8M1130,242.5l8,8m0-8l-8,8M1603.3,189.4l8,8m0-8l-8,8M1615.3,200.4l8,8m0-8l-8,8M1625.8,198.1l8,8m0-8l-8,8M1647.9,197.6l8,8m0-8l-8,8M1587.9,164.2l8,8m0-8l-8,8M1619.8,178.3l8,8m0-8l-8,8M1630.9,185.4l8,8m0-8l-8,8M1587,166.6l8,8m0-8l-8,8M1613,167l8,8m0-8l-8,8M1624.2,170.2l8,8m0-8l-8,8M1619.9,179.1l8,8m0-8l-8,8M1632.6,182.1l8,8m0-8l-8,8M1653.8,194.4l8,8m0-8l-8,8M1654.6,198l8,8m0-8l-8,8M1700.6,226.4l8,8m0-8l-8,8M1711.9,231.3l8,8m0-8l-8,8M1737.8,246.3l8,8m0-8l-8,8M1754.2,256.5l8,8m0-8l-8,8M1762.9,254.7l8,8m0-8l-8,8M1702,213.5l8,8m0-8l-8,8M1703.1,222.2l8,8m0-8l-8,8M1749,181.3l8,8m0-8l-8,8M1759.4,191.4l8,8m0-8l-8,8M1748.1,194.1l8,8m0-8l-8,8M1794.2,179.6l8,8m0-8l-8,8M1815.8,183.5l8,8m0-8l-8,8M1830.6,207.8l8,8m0-8l-8,8M1813.3,268.1l8,8m0-8l-8,8M1788.5,299.9l8,8m0-8l-8,8M1780.7,211.3l8,8m0-8l-8,8M1801.1,230.6l8,8m0-8l-8,8M1786.8,226.8l8,8m0-8l-8,8M1807.8,202.5l8,8m0-8l-8,8M1786,266.3l8,8m0-8l-8,8M1584.4,262.6l8,8m0-8l-8,8M1619.4,259.2l8,8m0-8l-8,8M1636.3,287.6l8,8m0-8l-8,8M1631.2,326.6l8,8m0-8l-8,8M1603,289.5l8,8m0-8l-8,8M1566.1,304.4l8,8m0-8l-8,8M1549.5,332l8,8m0-8l-8,8M1625.3,327.8l8,8m0-8l-8,8M1655.1,362.9l8,8m0-8l-8,8M1675.6,366.9l8,8m0-8l-8,8M1686.4,368.5l8,8m0-8l-8,8M1613.4,344l8,8m0-8l-8,8M1622.3,351.1l8,8m0-8l-8,8M1698.5,353.9l8,8m0-8l-8,8M1716.4,353.5l8,8m0-8l-8,8M1722.1,331l8,8m0-8l-8,8M1726.5,324.4l8,8m0-8l-8,8M1789.8,340.9l8,8m0-8l-8,8M1791.4,392l8,8m0-8l-8,8M1639.6,163.5l8,8m0-8l-8,8M1735.1,165.7l8,8m0-8l-8,8M1761.4,163.6l8,8m0-8l-8,8M1594.6,164.8l8,8m0-8l-8,8M1612.2,170.5l8,8m0-8l-8,8M1623.4,170.2l8,8m0-8l-8,8M1622.4,169.8l8,8m0-8l-8,8M1665.7,162.3l8,8m0-8l-8,8M1688.2,172.1l8,8m0-8l-8,8M1703.2,184.4l8,8m0-8l-8,8M1728.1,198.9l8,8m0-8l-8,8M1747.6,207.5l8,8m0-8l-8,8M1763.4,216.5l8,8m0-8l-8,8M1752.6,197.6l8,8m0-8l-8,8M1813.2,232.8l8,8m0-8l-8,8M1779.7,213.2l8,8m0-8l-8,8M1784.6,225.3l8,8m0-8l-8,8M1822.3,221.1l8,8m0-8l-8,8M1788.5,288.6l8,8m0-8l-8,8M1799.2,291.4l8,8m0-8l-8,8M1658.7,181.1l8,8m0-8l-8,8M1615,176.9l8,8m0-8l-8,8M1569.3,290.1l8,8m0-8l-8,8M1572.9,322.7l8,8m0-8l-8,8M1578.7,334.1l8,8m0-8l-8,8M1581.4,319l8,8m0-8l-8,8M1591.9,327.9l8,8m0-8l-8,8" fill="none" stroke="#f00" stroke-width="1.05" opacity=".55"/>
<circle cx="950" cy="292" r="4" fill="#4d8a52" stroke="#fff" stroke-width="1"/>
<circle cx="979" cy="407" r="4" fill="#4d8a52" stroke="#fff" stroke-width="1"/>
<circle cx="1247" cy="487.5" r="4" fill="#4d8a52" stroke="#fff" stroke-width="1"/>
<circle cx="1256.5" cy="633" r="4" fill="#4d8a52" stroke="#fff" stroke-width="1"/>
<circle cx="1077" cy="829" r="4" fill="#4d8a52" stroke="#fff" stroke-width="1"/>
<circle cx="1763" cy="520.5" r="4" fill="#4d8a52" stroke="#fff" stroke-width="1"/>
<text x="954.5" y="286.5" font-family="Liberation Sans, sans-serif" font-size="16" font-style="italic" fill="#fff" stroke="#5a5a5a" stroke-width="2.2" stroke-linejoin="round" paint-order="stroke" filter="url(#sh)">Swellendam</text>
<text x="984.5" y="402" font-family="Liberation Sans, sans-serif" font-size="13.5" fill="#fff" stroke="#5a5a5a" stroke-width="2.2" stroke-linejoin="round" paint-order="stroke" filter="url(#sh)">Railton</text>
<text x="1251" y="483" font-family="Liberation Sans, sans-serif" font-size="12" fill="#fff" stroke="#5a5a5a" stroke-width="2.2" stroke-linejoin="round" paint-order="stroke" filter="url(#sh)">Bontebok National Park Entrance Gate</text>
<text x="1260.5" y="628.5" font-family="Liberation Sans, sans-serif" font-size="12" fill="#fff" stroke="#5a5a5a" stroke-width="2.2" stroke-linejoin="round" paint-order="stroke" filter="url(#sh)">Bontebok National Park Reception &amp; Shop</text>
<text x="1082" y="825.5" font-family="Liberation Sans, sans-serif" font-size="10" fill="#fff" stroke="#5a5a5a" stroke-width="2.2" stroke-linejoin="round" paint-order="stroke" filter="url(#sh)">Lang Elsies Kraal Rest Camp</text>
<text x="1768.5" y="515.5" font-family="Liberation Sans, sans-serif" font-size="16" font-style="italic" fill="#fff" stroke="#5a5a5a" stroke-width="2.2" stroke-linejoin="round" paint-order="stroke" filter="url(#sh)">Buffeljagsrivier</text>
</svg></div>
<div id="status">
<div class="abs" style="left:6px;top:7px;white-space:nowrap;">1 feature(s) selected on layer landuse.</div>
<div class="abs" style="left:955px;top:7px;white-space:nowrap;"><span style="color:#0000ee;text-decoration:underline">There is a new plugin available</span></div>
<div class="abs" style="left:1144px;top:6px;white-space:nowrap;width:18px;height:18px;border:1px solid #9a9a9a;background:#f4f4f4"></div>
<svg class="abs" style="left:1145px;top:7px" width="16" height="16" viewBox="0 0 16 16"><circle cx="7.500" cy="8" r="4.500" fill="none" stroke="#222" stroke-width="1.300"/><path d="M3,2 L12,14 M5,13 C7,9 9,7 12.500,3.500" stroke="#222" stroke-width="1.200" fill="none"/><path d="M10,2.500 l3,-1 l-.5,3" fill="#222"/></svg>
<div class="abs" style="left:1172px;top:7px;white-space:nowrap;">Coordinate:</div>
<div class="abs" style="left:1249px;top:6px;white-space:nowrap;width:300px;height:19px;border:1px solid #a9a9a9;border-top-color:#8a8a8a;background:#fff;text-align:center;line-height:18px">20.4487,-34.0607</div>
<div class="abs" style="left:1558px;top:7px;white-space:nowrap;">Scale</div>
<div class="abs" style="left:1603px;top:10px;white-space:nowrap;width:95px;height:15px;border:1px solid #b0b0b0;border-radius:0 4px 4px 0;background:#fff;line-height:14px;padding-left:2px;font-size:13.500px">1:19950</div>
<div class="abs" style="left:1681px;top:11px;width:1px;height:15px;background:#c8c8c8"></div>
<svg class="abs" style="left:1686px;top:15px" width="7" height="5" viewBox="0 0 7 5"><path d="M0,0 h7 l-3.500,5 z" fill="#444"/></svg>
<div class="abs" style="left:1704px;top:5px;white-space:nowrap;width:20px;height:20px;border:1px solid #9a9a9a;background:#f1f1f1"></div>
<svg class="abs" style="left:1705px;top:6px" width="18" height="18" viewBox="0 0 18 18"><path d="M3,16 C9,14 13,9 16,1.500 C11,5 7,10 3,16 Z" fill="#777" stroke="#555" stroke-width=".6"/><circle cx="5.500" cy="5" r="3.300" fill="none" stroke="#e02a3a" stroke-width="1.300"/><path d="M3.300,2.800 l4.400,4.400" stroke="#e02a3a" stroke-width="1.300"/></svg>
<svg class="abs" style="left:1730px;top:5px;overflow:visible" width="16" height="18" viewBox="0 0 16 18"><rect x="1" y="4" width="12" height="12" rx="2.200" fill="#e2e6ec" stroke="#6e6e6e"/><path d="M3.800,9.500 l3,4.200 l6.800,-12" fill="none" stroke="#111" stroke-width="2.100" stroke-linecap="round" stroke-linejoin="round"/></svg>
<div class="abs" style="left:1748px;top:7px;white-space:nowrap;">Render</div>
<div class="abs" style="left:1796px;top:7px;white-space:nowrap;color:#333">EPSG:4326</div>
<div class="abs" style="left:1874px;top:6px;white-space:nowrap;width:20px;height:19px;border:1px solid #9a9a9a;background:#f1f1f1"></div>
<svg class="abs" style="left:1875px;top:7px" width="18" height="17" viewBox="0 0 18 17"><circle cx="9" cy="8.500" r="6.800" fill="#cfcfcf" stroke="#8a8a8a" stroke-width="1"/><ellipse cx="9" cy="8.500" rx="3.200" ry="6.800" fill="none" stroke="#8a8a8a"/><ellipse cx="9" cy="8.500" rx="6.800" ry="3.200" fill="none" stroke="#8a8a8a"/><rect x="6.500" y="6" width="5" height="5" fill="#e8e8e8" stroke="#8a8a8a" stroke-width=".6"/></svg>
<svg class="abs" style="left:1907px;top:19px" width="12" height="12" viewBox="0 0 12 12"><path d="M1,12 L12,1 M5,12 L12,5 M9,12 L12,9" stroke="#8a8a8a" stroke-width="1"/></svg>
</div>
</div>
</body></html>
